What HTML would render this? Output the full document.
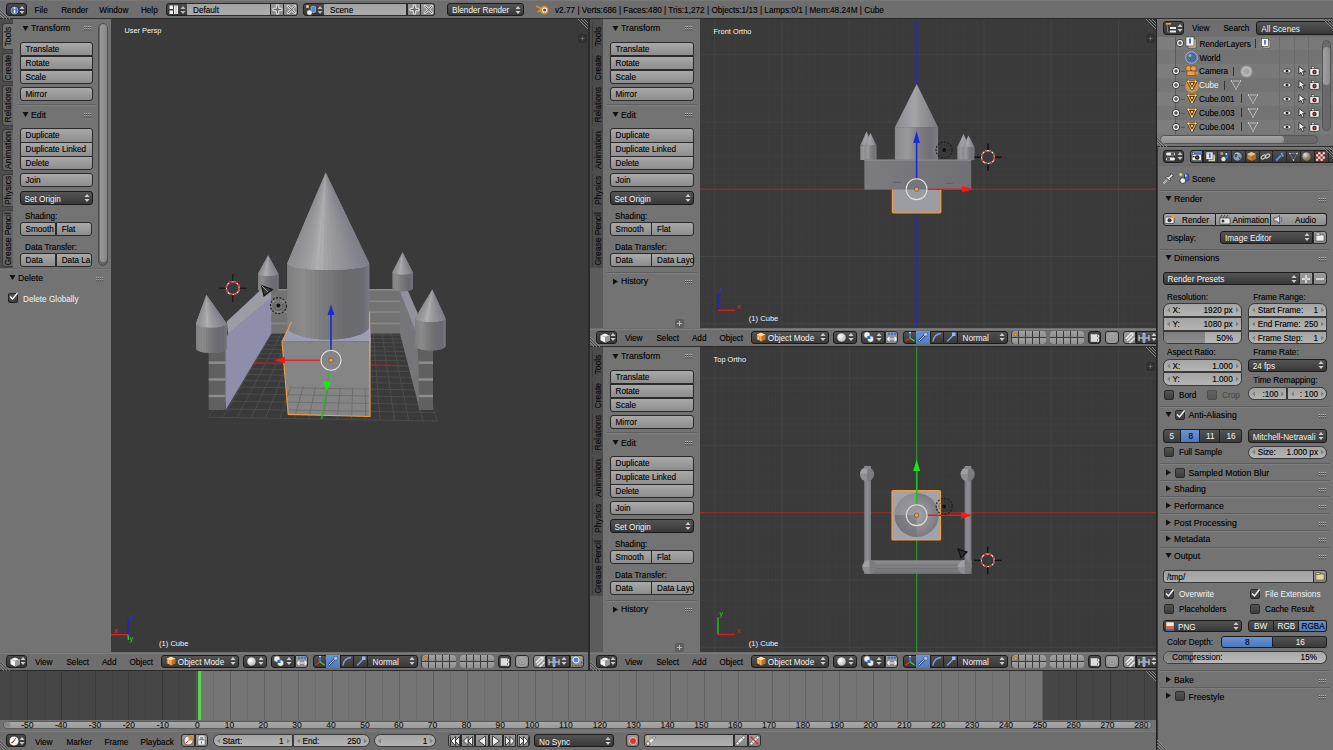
<!DOCTYPE html><html><head><meta charset="utf-8"><style>
*{margin:0;padding:0;box-sizing:border-box}
html,body{width:1333px;height:750px;overflow:hidden;background:#727272;font-family:"Liberation Sans", sans-serif;}
div,span,svg{position:absolute}
.t{white-space:nowrap;line-height:1;-webkit-text-stroke-width:0.12px;}
</style></head><body>
<div style="left:0px;top:0px;width:1333px;height:18px;background:#6e6e6e;"></div>
<div style="left:0px;top:0px;width:1333px;height:1px;background:#777777;"></div>
<div style="left:0px;top:18px;width:1333px;height:1px;background:#2a2a2a;"></div>
<div style="left:0px;top:19px;width:111px;height:633px;background:#737373;"></div>
<div style="left:0px;top:19px;width:13px;height:249px;background:#4c4c4c;"></div>
<div style="left:111px;top:19px;width:477px;height:633px;background:#3a3a3a;"></div>
<div style="left:588px;top:19px;width:2px;height:652px;background:#2b2b2b;"></div>
<div style="left:590px;top:19px;width:110px;height:309px;background:#737373;"></div>
<div style="left:590px;top:19px;width:13px;height:309px;background:#5c5c5c;"></div>
<div style="left:590px;top:19px;width:13px;height:249px;background:#4c4c4c;"></div>
<div style="left:590px;top:347px;width:110px;height:305px;background:#737373;"></div>
<div style="left:590px;top:347px;width:13px;height:305px;background:#5c5c5c;"></div>
<div style="left:590px;top:347px;width:13px;height:249px;background:#4c4c4c;"></div>
<div style="left:700px;top:19px;width:456px;height:309px;background:#3a3a3a;"></div>
<div style="left:700px;top:347px;width:456px;height:305px;background:#3a3a3a;"></div>
<div style="left:0px;top:652px;width:588px;height:18px;background:#6e6e6e;"></div>
<div style="left:0px;top:653px;width:588px;height:1px;background:#7e7e7e;"></div>
<div style="left:0px;top:670px;width:588px;height:1px;background:#2a2a2a;"></div>
<div style="left:590px;top:328px;width:566px;height:18px;background:#6e6e6e;"></div>
<div style="left:590px;top:329px;width:566px;height:1px;background:#7e7e7e;"></div>
<div style="left:590px;top:346px;width:566px;height:1px;background:#2a2a2a;"></div>
<div style="left:590px;top:652px;width:566px;height:18px;background:#6e6e6e;"></div>
<div style="left:590px;top:653px;width:566px;height:1px;background:#7e7e7e;"></div>
<div style="left:590px;top:670px;width:566px;height:1px;background:#2a2a2a;"></div>
<div style="left:0px;top:671px;width:1156px;height:60px;background:#727272;"></div>
<div style="left:0px;top:731px;width:1156px;height:19px;background:#6e6e6e;border-top:1px solid #7a7a7a;"></div>
<div style="left:1156px;top:19px;width:1px;height:731px;background:#202020;"></div>
<div style="left:1157px;top:19px;width:176px;height:127px;background:#747474;"></div>
<div style="left:1157px;top:146px;width:176px;height:1px;background:#2a2a2a;"></div>
<div style="left:1157px;top:147px;width:176px;height:603px;background:#737373;"></div>
<div style="left:6px;top:3px;width:21px;height:13px;background:linear-gradient(#4a4a4a,#363636);border:1px solid #1e1e1e;border-radius:3px 3px 3px 3px;"></div>
<svg style="left:9px;top:4.5px" width="11" height="11"><circle cx="5.5" cy="5.5" r="4.3" fill="#4a6ab8" stroke="#1a2440" stroke-width="0.7"/><circle cx="5.5" cy="5.5" r="3.4" fill="none" stroke="#b8c8f0" stroke-width="0.6"/><rect x="4.8" y="4.6" width="1.5" height="3.6" fill="#fff"/><circle cx="5.55" cy="3.2" r="0.85" fill="#fff"/></svg>
<svg style="left:19px;top:4.5px" width="6" height="10"><path d="M0.5 4 L3 1 L5.5 4 Z M0.5 6 L3 9 L5.5 6 Z" fill="#c8c8c8"/></svg>
<span class="t" style="left:34.5px;top:6.99px;font-size:8.2px;color:#000;">File</span>
<span class="t" style="left:61.2px;top:6.99px;font-size:8.2px;color:#000;">Render</span>
<span class="t" style="left:99.2px;top:6.99px;font-size:8.2px;color:#000;">Window</span>
<span class="t" style="left:140.9px;top:6.99px;font-size:8.2px;color:#000;">Help</span>
<div style="left:166px;top:3px;width:22px;height:13px;background:linear-gradient(#4a4a4a,#363636);border:1px solid #1e1e1e;border-radius:3px 0 0 3px;"></div>
<svg style="left:169px;top:5px" width="10" height="10"><rect x="0.5" y="0.5" width="3.5" height="3.5" fill="#eee"/><rect x="0.5" y="5.5" width="3.5" height="3.5" fill="#eee"/><rect x="5" y="0.5" width="4" height="8.5" fill="#eee"/><line x1="7" y1="0.5" x2="7" y2="9" stroke="#888" stroke-width="0.6"/></svg>
<svg style="left:180px;top:4.5px" width="6" height="10"><path d="M0.5 4 L3 1 L5.5 4 Z M0.5 6 L3 9 L5.5 6 Z" fill="#bbb"/></svg>
<div style="left:187px;top:3px;width:84px;height:13px;background:linear-gradient(#a2a2a2,#adadad);border:1px solid #2a2a2a;border-left:none;"></div>
<span class="t" style="left:193px;top:6.99px;font-size:8.2px;color:#000;">Default</span>
<div style="left:270px;top:3px;width:14px;height:13px;background:linear-gradient(#979797,#868686);border:1px solid #2a2a2a;"></div>
<svg style="left:271.5px;top:4px" width="11" height="11"><path d="M4.3 1 H6.7 V4.3 H10 V6.7 H6.7 V10 H4.3 V6.7 H1 V4.3 H4.3 Z" fill="#6a6a6a" stroke="#f4f4f4" stroke-width="0.9"/></svg>
<div style="left:284px;top:3px;width:14px;height:13px;background:linear-gradient(#979797,#868686);border:1px solid #2a2a2a;border-left:none;border-radius:0 3px 3px 0;"></div>
<svg style="left:285.5px;top:4px" width="11" height="11"><path d="M2.2 1 L5.5 4.3 L8.8 1 L10 2.2 L6.7 5.5 L10 8.8 L8.8 10 L5.5 6.7 L2.2 10 L1 8.8 L4.3 5.5 L1 2.2 Z" fill="#6a6a6a" stroke="#f4f4f4" stroke-width="0.9"/></svg>
<div style="left:303px;top:3px;width:22px;height:13px;background:linear-gradient(#4a4a4a,#363636);border:1px solid #1e1e1e;border-radius:3px 0 0 3px;"></div>
<svg style="left:305px;top:4px" width="12" height="12"><circle cx="2.5" cy="2.5" r="1.5" fill="#d8e070"/><rect x="6" y="2.5" width="4.5" height="6" rx="1" fill="#4a8ad8" stroke="#ddd" stroke-width="0.5"/><circle cx="4.5" cy="8.5" r="2.6" fill="#f0f0f0" stroke="#444" stroke-width="0.4"/></svg>
<svg style="left:317px;top:4.5px" width="6" height="10"><path d="M0.5 4 L3 1 L5.5 4 Z M0.5 6 L3 9 L5.5 6 Z" fill="#bbb"/></svg>
<div style="left:324px;top:3px;width:83px;height:13px;background:linear-gradient(#a2a2a2,#adadad);border:1px solid #2a2a2a;border-left:none;"></div>
<span class="t" style="left:330px;top:6.99px;font-size:8.2px;color:#000;">Scene</span>
<div style="left:407px;top:3px;width:14px;height:13px;background:linear-gradient(#979797,#868686);border:1px solid #2a2a2a;"></div>
<svg style="left:408.5px;top:4px" width="11" height="11"><path d="M4.3 1 H6.7 V4.3 H10 V6.7 H6.7 V10 H4.3 V6.7 H1 V4.3 H4.3 Z" fill="#6a6a6a" stroke="#f4f4f4" stroke-width="0.9"/></svg>
<div style="left:421px;top:3px;width:14px;height:13px;background:linear-gradient(#979797,#868686);border:1px solid #2a2a2a;border-left:none;border-radius:0 3px 3px 0;"></div>
<svg style="left:422.5px;top:4px" width="11" height="11"><path d="M2.2 1 L5.5 4.3 L8.8 1 L10 2.2 L6.7 5.5 L10 8.8 L8.8 10 L5.5 6.7 L2.2 10 L1 8.8 L4.3 5.5 L1 2.2 Z" fill="#6a6a6a" stroke="#f4f4f4" stroke-width="0.9"/></svg>
<div style="left:447px;top:3px;width:77px;height:13px;background:linear-gradient(#545454,#383838);border:1px solid #1a1a1a;border-radius:3px 3px 3px 3px;"></div>
<span class="t" style="left:452px;top:7.39px;font-size:8.2px;color:#fff;-webkit-text-stroke-width:0;color:#f4f4f4;">Blender Render</span>
<svg style="left:515px;top:4.5px" width="6" height="10"><path d="M0.5 4 L3 1 L5.5 4 Z M0.5 6 L3 9 L5.5 6 Z" fill="#cfcfcf"/></svg>
<svg style="left:536px;top:3px" width="14" height="13"><path d="M1 3.5 L6 6 M2.5 8.5 L6.5 6.2" stroke="#f08a1c" stroke-width="1.8" stroke-linecap="round"/><circle cx="8.3" cy="7" r="4.2" fill="#f08a1c"/><circle cx="8.5" cy="7" r="2.6" fill="#fff"/><circle cx="8.6" cy="7" r="1.5" fill="#2850a0"/></svg>
<span class="t" style="left:555px;top:6.99px;font-size:8.2px;color:#000;letter-spacing:0.02px">v2.77 | Verts:686 | Faces:480 | Tris:1,272 | Objects:1/13 | Lamps:0/1 | Mem:48.24M | Cube</span>
<div style="left:0px;top:19px;width:13px;height:249px;background:#4c4c4c;"></div>
<div style="left:1.5px;top:23px;width:11.5px;height:26.5px;background:#737373;border:1px solid #3c3c3c;border-right:none;border-radius:3px 0 0 3px;"></div>
<span class="t" style="left:2px;top:23px;width:12px;height:26.5px;font-size:8.5px;color:#0a0a0a;writing-mode:vertical-rl;transform:rotate(180deg);text-align:center;line-height:12.5px;">Tools</span>
<div style="left:1.5px;top:52.5px;width:11.5px;height:29.5px;background:#646464;border:1px solid #3c3c3c;border-right:none;border-radius:3px 0 0 3px;"></div>
<span class="t" style="left:2px;top:52.5px;width:12px;height:29.5px;font-size:8.5px;color:#0a0a0a;writing-mode:vertical-rl;transform:rotate(180deg);text-align:center;line-height:12.5px;">Create</span>
<div style="left:1.5px;top:85px;width:11.5px;height:40.5px;background:#646464;border:1px solid #3c3c3c;border-right:none;border-radius:3px 0 0 3px;"></div>
<span class="t" style="left:2px;top:85px;width:12px;height:40.5px;font-size:8.5px;color:#0a0a0a;writing-mode:vertical-rl;transform:rotate(180deg);text-align:center;line-height:12.5px;">Relations</span>
<div style="left:1.5px;top:128.5px;width:11.5px;height:42.0px;background:#646464;border:1px solid #3c3c3c;border-right:none;border-radius:3px 0 0 3px;"></div>
<span class="t" style="left:2px;top:128.5px;width:12px;height:42.0px;font-size:8.5px;color:#0a0a0a;writing-mode:vertical-rl;transform:rotate(180deg);text-align:center;line-height:12.5px;">Animation</span>
<div style="left:1.5px;top:173.5px;width:11.5px;height:33.0px;background:#646464;border:1px solid #3c3c3c;border-right:none;border-radius:3px 0 0 3px;"></div>
<span class="t" style="left:2px;top:173.5px;width:12px;height:33.0px;font-size:8.5px;color:#0a0a0a;writing-mode:vertical-rl;transform:rotate(180deg);text-align:center;line-height:12.5px;">Physics</span>
<div style="left:1.5px;top:209.5px;width:11.5px;height:57.5px;background:#646464;border:1px solid #3c3c3c;border-right:none;border-radius:3px 0 0 3px;"></div>
<span class="t" style="left:2px;top:209.5px;width:12px;height:57.5px;font-size:8.5px;color:#0a0a0a;writing-mode:vertical-rl;transform:rotate(180deg);text-align:center;line-height:12.5px;">Grease Pencil</span>
<svg style="left:22px;top:24.5px" width="7" height="7"><path d="M0.5 1 L6.5 1 L3.5 6 Z" fill="#111"/></svg>
<span class="t" style="left:31px;top:24.12px;font-size:8.7px;color:#000;">Transform</span>
<svg style="left:83px;top:25px" width="10" height="6"><rect x="1.00" y="2.00" width="1.1" height="1.1" fill="#404040"/><rect x="1.00" y="4.15" width="1.1" height="1.1" fill="#404040"/><rect x="3.05" y="2.00" width="1.1" height="1.1" fill="#404040"/><rect x="3.05" y="4.15" width="1.1" height="1.1" fill="#404040"/><rect x="5.10" y="2.00" width="1.1" height="1.1" fill="#404040"/><rect x="5.10" y="4.15" width="1.1" height="1.1" fill="#404040"/><rect x="7.15" y="2.00" width="1.1" height="1.1" fill="#404040"/><rect x="7.15" y="4.15" width="1.1" height="1.1" fill="#404040"/><rect x="1.00" y="1.00" width="1.1" height="1" fill="#b8b8b8"/><rect x="1.00" y="3.15" width="1.1" height="1" fill="#b8b8b8"/><rect x="3.05" y="1.00" width="1.1" height="1" fill="#b8b8b8"/><rect x="3.05" y="3.15" width="1.1" height="1" fill="#b8b8b8"/><rect x="5.10" y="1.00" width="1.1" height="1" fill="#b8b8b8"/><rect x="5.10" y="3.15" width="1.1" height="1" fill="#b8b8b8"/><rect x="7.15" y="1.00" width="1.1" height="1" fill="#b8b8b8"/><rect x="7.15" y="3.15" width="1.1" height="1" fill="#b8b8b8"/></svg>
<div style="left:19.5px;top:41.5px;width:73.0px;height:14.5px;background:linear-gradient(#a9a9a9,#8d8d8d);border:1px solid #2a2a2a;border-radius:3px 3px 0 0;"></div>
<span class="t" style="left:25.5px;top:45.94px;font-size:8.2px;color:#000;">Translate</span>
<div style="left:19.5px;top:55.5px;width:73.0px;height:14.5px;background:linear-gradient(#a9a9a9,#8d8d8d);border:1px solid #2a2a2a;border-radius:0 0 0 0;"></div>
<span class="t" style="left:25.5px;top:59.94px;font-size:8.2px;color:#000;">Rotate</span>
<div style="left:19.5px;top:69.5px;width:73.0px;height:14px;background:linear-gradient(#a9a9a9,#8d8d8d);border:1px solid #2a2a2a;border-radius:0 0 3px 3px;"></div>
<span class="t" style="left:25.5px;top:73.69px;font-size:8.2px;color:#000;">Scale</span>
<div style="left:19.5px;top:86.5px;width:73.0px;height:14px;background:linear-gradient(#a9a9a9,#8d8d8d);border:1px solid #2a2a2a;border-radius:3px 3px 3px 3px;"></div>
<span class="t" style="left:25.5px;top:90.69px;font-size:8.2px;color:#000;">Mirror</span>
<div style="left:17px;top:104px;width:78.5px;height:1px;background:#5e5e5e;"></div>
<div style="left:17px;top:105px;width:78.5px;height:1px;background:#7e7e7e;"></div>
<svg style="left:22px;top:111px" width="7" height="7"><path d="M0.5 1 L6.5 1 L3.5 6 Z" fill="#111"/></svg>
<span class="t" style="left:31px;top:110.61px;font-size:8.7px;color:#000;">Edit</span>
<svg style="left:83px;top:112px" width="10" height="6"><rect x="1.00" y="2.00" width="1.1" height="1.1" fill="#404040"/><rect x="1.00" y="4.15" width="1.1" height="1.1" fill="#404040"/><rect x="3.05" y="2.00" width="1.1" height="1.1" fill="#404040"/><rect x="3.05" y="4.15" width="1.1" height="1.1" fill="#404040"/><rect x="5.10" y="2.00" width="1.1" height="1.1" fill="#404040"/><rect x="5.10" y="4.15" width="1.1" height="1.1" fill="#404040"/><rect x="7.15" y="2.00" width="1.1" height="1.1" fill="#404040"/><rect x="7.15" y="4.15" width="1.1" height="1.1" fill="#404040"/><rect x="1.00" y="1.00" width="1.1" height="1" fill="#b8b8b8"/><rect x="1.00" y="3.15" width="1.1" height="1" fill="#b8b8b8"/><rect x="3.05" y="1.00" width="1.1" height="1" fill="#b8b8b8"/><rect x="3.05" y="3.15" width="1.1" height="1" fill="#b8b8b8"/><rect x="5.10" y="1.00" width="1.1" height="1" fill="#b8b8b8"/><rect x="5.10" y="3.15" width="1.1" height="1" fill="#b8b8b8"/><rect x="7.15" y="1.00" width="1.1" height="1" fill="#b8b8b8"/><rect x="7.15" y="3.15" width="1.1" height="1" fill="#b8b8b8"/></svg>
<div style="left:19.5px;top:128px;width:73.0px;height:14.5px;background:linear-gradient(#a9a9a9,#8d8d8d);border:1px solid #2a2a2a;border-radius:3px 3px 0 0;"></div>
<span class="t" style="left:25.5px;top:132.44px;font-size:8.2px;color:#000;">Duplicate</span>
<div style="left:19.5px;top:142px;width:73.0px;height:14.5px;background:linear-gradient(#a9a9a9,#8d8d8d);border:1px solid #2a2a2a;border-radius:0 0 0 0;"></div>
<span class="t" style="left:25.5px;top:146.44px;font-size:8.2px;color:#000;">Duplicate Linked</span>
<div style="left:19.5px;top:156px;width:73.0px;height:14px;background:linear-gradient(#a9a9a9,#8d8d8d);border:1px solid #2a2a2a;border-radius:0 0 3px 3px;"></div>
<span class="t" style="left:25.5px;top:160.19px;font-size:8.2px;color:#000;">Delete</span>
<div style="left:19.5px;top:173px;width:73.0px;height:14px;background:linear-gradient(#a9a9a9,#8d8d8d);border:1px solid #2a2a2a;border-radius:3px 3px 3px 3px;"></div>
<span class="t" style="left:25.5px;top:177.19px;font-size:8.2px;color:#000;">Join</span>
<div style="left:19.5px;top:191px;width:73.0px;height:14px;background:linear-gradient(#545454,#383838);border:1px solid #1a1a1a;border-radius:3px 3px 3px 3px;"></div>
<span class="t" style="left:24.5px;top:195.89px;font-size:8.2px;color:#fff;-webkit-text-stroke-width:0;color:#f4f4f4;">Set Origin</span>
<svg style="left:83.5px;top:193.0px" width="6" height="10"><path d="M0.5 4 L3 1 L5.5 4 Z M0.5 6 L3 9 L5.5 6 Z" fill="#cfcfcf"/></svg>
<span class="t" style="left:25px;top:212.69px;font-size:8.2px;color:#000;">Shading:</span>
<div style="left:19.5px;top:222px;width:36.7px;height:14px;background:linear-gradient(#a9a9a9,#8d8d8d);border:1px solid #2a2a2a;border-radius:3px 0 0 3px;"></div>
<span class="t" style="left:25.5px;top:226.19px;font-size:8.2px;color:#000;">Smooth</span>
<div style="left:55.7px;top:222px;width:36.8px;height:14px;background:linear-gradient(#a9a9a9,#8d8d8d);border:1px solid #2a2a2a;border-radius:0 3px 3px 0;"></div>
<span class="t" style="left:61.7px;top:226.19px;font-size:8.2px;color:#000;">Flat</span>
<span class="t" style="left:25px;top:243.69px;font-size:8.2px;color:#000;">Data Transfer:</span>
<div style="left:19.5px;top:253px;width:36.7px;height:14px;background:linear-gradient(#a9a9a9,#8d8d8d);border:1px solid #2a2a2a;border-radius:3px 0 0 3px;"></div>
<span class="t" style="left:25.5px;top:257.19px;font-size:8.2px;color:#000;">Data</span>
<div style="left:55.7px;top:253px;width:36.8px;height:14px;background:linear-gradient(#a9a9a9,#8d8d8d);border:1px solid #2a2a2a;border-radius:0 3px 3px 0;"></div>
<span class="t" style="left:61.7px;top:257.19px;font-size:8.2px;color:#000;">Data La</span>
<div style="left:98px;top:22.5px;width:10px;height:243px;background:linear-gradient(90deg,#6a6a6a,#5c5c5c);border:1px solid #4c4c4c;border-radius:5px;"></div>
<div style="left:99.5px;top:24px;width:7px;height:238px;background:linear-gradient(90deg,#9a9a9a,#858585);border-radius:4px;"></div>
<div style="left:590px;top:19px;width:13px;height:305px;background:#5c5c5c;"></div>
<div style="left:590px;top:19px;width:13px;height:249px;background:#4c4c4c;"></div>
<div style="left:591.5px;top:23px;width:-578.5px;height:26.5px;background:#737373;border:1px solid #3c3c3c;border-right:none;border-radius:3px 0 0 3px;"></div>
<span class="t" style="left:592px;top:23px;width:12px;height:26.5px;font-size:8.5px;color:#0a0a0a;writing-mode:vertical-rl;transform:rotate(180deg);text-align:center;line-height:12.5px;">Tools</span>
<div style="left:591.5px;top:52.5px;width:-578.5px;height:29.5px;background:#646464;border:1px solid #3c3c3c;border-right:none;border-radius:3px 0 0 3px;"></div>
<span class="t" style="left:592px;top:52.5px;width:12px;height:29.5px;font-size:8.5px;color:#0a0a0a;writing-mode:vertical-rl;transform:rotate(180deg);text-align:center;line-height:12.5px;">Create</span>
<div style="left:591.5px;top:85px;width:-578.5px;height:40.5px;background:#646464;border:1px solid #3c3c3c;border-right:none;border-radius:3px 0 0 3px;"></div>
<span class="t" style="left:592px;top:85px;width:12px;height:40.5px;font-size:8.5px;color:#0a0a0a;writing-mode:vertical-rl;transform:rotate(180deg);text-align:center;line-height:12.5px;">Relations</span>
<div style="left:591.5px;top:128.5px;width:-578.5px;height:42.0px;background:#646464;border:1px solid #3c3c3c;border-right:none;border-radius:3px 0 0 3px;"></div>
<span class="t" style="left:592px;top:128.5px;width:12px;height:42.0px;font-size:8.5px;color:#0a0a0a;writing-mode:vertical-rl;transform:rotate(180deg);text-align:center;line-height:12.5px;">Animation</span>
<div style="left:591.5px;top:173.5px;width:-578.5px;height:33.0px;background:#646464;border:1px solid #3c3c3c;border-right:none;border-radius:3px 0 0 3px;"></div>
<span class="t" style="left:592px;top:173.5px;width:12px;height:33.0px;font-size:8.5px;color:#0a0a0a;writing-mode:vertical-rl;transform:rotate(180deg);text-align:center;line-height:12.5px;">Physics</span>
<div style="left:591.5px;top:209.5px;width:-578.5px;height:57.5px;background:#646464;border:1px solid #3c3c3c;border-right:none;border-radius:3px 0 0 3px;"></div>
<span class="t" style="left:592px;top:209.5px;width:12px;height:57.5px;font-size:8.5px;color:#0a0a0a;writing-mode:vertical-rl;transform:rotate(180deg);text-align:center;line-height:12.5px;">Grease Pencil</span>
<svg style="left:612px;top:24.5px" width="7" height="7"><path d="M0.5 1 L6.5 1 L3.5 6 Z" fill="#111"/></svg>
<span class="t" style="left:621px;top:24.12px;font-size:8.7px;color:#000;">Transform</span>
<svg style="left:684px;top:25px" width="10" height="6"><rect x="1.00" y="2.00" width="1.1" height="1.1" fill="#404040"/><rect x="1.00" y="4.15" width="1.1" height="1.1" fill="#404040"/><rect x="3.05" y="2.00" width="1.1" height="1.1" fill="#404040"/><rect x="3.05" y="4.15" width="1.1" height="1.1" fill="#404040"/><rect x="5.10" y="2.00" width="1.1" height="1.1" fill="#404040"/><rect x="5.10" y="4.15" width="1.1" height="1.1" fill="#404040"/><rect x="7.15" y="2.00" width="1.1" height="1.1" fill="#404040"/><rect x="7.15" y="4.15" width="1.1" height="1.1" fill="#404040"/><rect x="1.00" y="1.00" width="1.1" height="1" fill="#b8b8b8"/><rect x="1.00" y="3.15" width="1.1" height="1" fill="#b8b8b8"/><rect x="3.05" y="1.00" width="1.1" height="1" fill="#b8b8b8"/><rect x="3.05" y="3.15" width="1.1" height="1" fill="#b8b8b8"/><rect x="5.10" y="1.00" width="1.1" height="1" fill="#b8b8b8"/><rect x="5.10" y="3.15" width="1.1" height="1" fill="#b8b8b8"/><rect x="7.15" y="1.00" width="1.1" height="1" fill="#b8b8b8"/><rect x="7.15" y="3.15" width="1.1" height="1" fill="#b8b8b8"/></svg>
<div style="left:609.5px;top:41.5px;width:84.5px;height:14.5px;background:linear-gradient(#a9a9a9,#8d8d8d);border:1px solid #2a2a2a;border-radius:3px 3px 0 0;"></div>
<span class="t" style="left:615.5px;top:45.94px;font-size:8.2px;color:#000;">Translate</span>
<div style="left:609.5px;top:55.5px;width:84.5px;height:14.5px;background:linear-gradient(#a9a9a9,#8d8d8d);border:1px solid #2a2a2a;border-radius:0 0 0 0;"></div>
<span class="t" style="left:615.5px;top:59.94px;font-size:8.2px;color:#000;">Rotate</span>
<div style="left:609.5px;top:69.5px;width:84.5px;height:14px;background:linear-gradient(#a9a9a9,#8d8d8d);border:1px solid #2a2a2a;border-radius:0 0 3px 3px;"></div>
<span class="t" style="left:615.5px;top:73.69px;font-size:8.2px;color:#000;">Scale</span>
<div style="left:609.5px;top:86.5px;width:84.5px;height:14px;background:linear-gradient(#a9a9a9,#8d8d8d);border:1px solid #2a2a2a;border-radius:3px 3px 3px 3px;"></div>
<span class="t" style="left:615.5px;top:90.69px;font-size:8.2px;color:#000;">Mirror</span>
<div style="left:607px;top:104px;width:90px;height:1px;background:#5e5e5e;"></div>
<div style="left:607px;top:105px;width:90px;height:1px;background:#7e7e7e;"></div>
<svg style="left:612px;top:111px" width="7" height="7"><path d="M0.5 1 L6.5 1 L3.5 6 Z" fill="#111"/></svg>
<span class="t" style="left:621px;top:110.61px;font-size:8.7px;color:#000;">Edit</span>
<svg style="left:684px;top:112px" width="10" height="6"><rect x="1.00" y="2.00" width="1.1" height="1.1" fill="#404040"/><rect x="1.00" y="4.15" width="1.1" height="1.1" fill="#404040"/><rect x="3.05" y="2.00" width="1.1" height="1.1" fill="#404040"/><rect x="3.05" y="4.15" width="1.1" height="1.1" fill="#404040"/><rect x="5.10" y="2.00" width="1.1" height="1.1" fill="#404040"/><rect x="5.10" y="4.15" width="1.1" height="1.1" fill="#404040"/><rect x="7.15" y="2.00" width="1.1" height="1.1" fill="#404040"/><rect x="7.15" y="4.15" width="1.1" height="1.1" fill="#404040"/><rect x="1.00" y="1.00" width="1.1" height="1" fill="#b8b8b8"/><rect x="1.00" y="3.15" width="1.1" height="1" fill="#b8b8b8"/><rect x="3.05" y="1.00" width="1.1" height="1" fill="#b8b8b8"/><rect x="3.05" y="3.15" width="1.1" height="1" fill="#b8b8b8"/><rect x="5.10" y="1.00" width="1.1" height="1" fill="#b8b8b8"/><rect x="5.10" y="3.15" width="1.1" height="1" fill="#b8b8b8"/><rect x="7.15" y="1.00" width="1.1" height="1" fill="#b8b8b8"/><rect x="7.15" y="3.15" width="1.1" height="1" fill="#b8b8b8"/></svg>
<div style="left:609.5px;top:128px;width:84.5px;height:14.5px;background:linear-gradient(#a9a9a9,#8d8d8d);border:1px solid #2a2a2a;border-radius:3px 3px 0 0;"></div>
<span class="t" style="left:615.5px;top:132.44px;font-size:8.2px;color:#000;">Duplicate</span>
<div style="left:609.5px;top:142px;width:84.5px;height:14.5px;background:linear-gradient(#a9a9a9,#8d8d8d);border:1px solid #2a2a2a;border-radius:0 0 0 0;"></div>
<span class="t" style="left:615.5px;top:146.44px;font-size:8.2px;color:#000;">Duplicate Linked</span>
<div style="left:609.5px;top:156px;width:84.5px;height:14px;background:linear-gradient(#a9a9a9,#8d8d8d);border:1px solid #2a2a2a;border-radius:0 0 3px 3px;"></div>
<span class="t" style="left:615.5px;top:160.19px;font-size:8.2px;color:#000;">Delete</span>
<div style="left:609.5px;top:173px;width:84.5px;height:14px;background:linear-gradient(#a9a9a9,#8d8d8d);border:1px solid #2a2a2a;border-radius:3px 3px 3px 3px;"></div>
<span class="t" style="left:615.5px;top:177.19px;font-size:8.2px;color:#000;">Join</span>
<div style="left:609.5px;top:191px;width:84.5px;height:14px;background:linear-gradient(#545454,#383838);border:1px solid #1a1a1a;border-radius:3px 3px 3px 3px;"></div>
<span class="t" style="left:614.5px;top:195.89px;font-size:8.2px;color:#fff;-webkit-text-stroke-width:0;color:#f4f4f4;">Set Origin</span>
<svg style="left:685.0px;top:193.0px" width="6" height="10"><path d="M0.5 4 L3 1 L5.5 4 Z M0.5 6 L3 9 L5.5 6 Z" fill="#cfcfcf"/></svg>
<span class="t" style="left:615px;top:212.69px;font-size:8.2px;color:#000;">Shading:</span>
<div style="left:609.5px;top:222px;width:42.0px;height:14px;background:linear-gradient(#a9a9a9,#8d8d8d);border:1px solid #2a2a2a;border-radius:3px 0 0 3px;"></div>
<span class="t" style="left:615.5px;top:226.19px;font-size:8.2px;color:#000;">Smooth</span>
<div style="left:651px;top:222px;width:43px;height:14px;background:linear-gradient(#a9a9a9,#8d8d8d);border:1px solid #2a2a2a;border-radius:0 3px 3px 0;"></div>
<span class="t" style="left:657px;top:226.19px;font-size:8.2px;color:#000;">Flat</span>
<span class="t" style="left:615px;top:243.69px;font-size:8.2px;color:#000;">Data Transfer:</span>
<div style="left:609.5px;top:253px;width:42.0px;height:14px;background:linear-gradient(#a9a9a9,#8d8d8d);border:1px solid #2a2a2a;border-radius:3px 0 0 3px;"></div>
<span class="t" style="left:615.5px;top:257.19px;font-size:8.2px;color:#000;">Data</span>
<div style="left:651px;top:253px;width:43px;height:14px;background:linear-gradient(#a9a9a9,#8d8d8d);border:1px solid #2a2a2a;border-radius:0 3px 3px 0;"></div>
<span class="t" style="left:657px;top:257.19px;font-size:8.2px;color:#000;">Data Layo</span>
<div style="left:607px;top:271.5px;width:90px;height:1px;background:#5e5e5e;"></div>
<div style="left:607px;top:272.5px;width:90px;height:1px;background:#7e7e7e;"></div>
<svg style="left:612px;top:277.5px" width="7" height="7"><path d="M1 0.5 L6 3.5 L1 6.5 Z" fill="#111"/></svg>
<span class="t" style="left:621px;top:277.11px;font-size:8.7px;color:#000;">History</span>
<svg style="left:684px;top:279px" width="10" height="6"><rect x="1.00" y="2.00" width="1.1" height="1.1" fill="#404040"/><rect x="1.00" y="4.15" width="1.1" height="1.1" fill="#404040"/><rect x="3.05" y="2.00" width="1.1" height="1.1" fill="#404040"/><rect x="3.05" y="4.15" width="1.1" height="1.1" fill="#404040"/><rect x="5.10" y="2.00" width="1.1" height="1.1" fill="#404040"/><rect x="5.10" y="4.15" width="1.1" height="1.1" fill="#404040"/><rect x="7.15" y="2.00" width="1.1" height="1.1" fill="#404040"/><rect x="7.15" y="4.15" width="1.1" height="1.1" fill="#404040"/><rect x="1.00" y="1.00" width="1.1" height="1" fill="#b8b8b8"/><rect x="1.00" y="3.15" width="1.1" height="1" fill="#b8b8b8"/><rect x="3.05" y="1.00" width="1.1" height="1" fill="#b8b8b8"/><rect x="3.05" y="3.15" width="1.1" height="1" fill="#b8b8b8"/><rect x="5.10" y="1.00" width="1.1" height="1" fill="#b8b8b8"/><rect x="5.10" y="3.15" width="1.1" height="1" fill="#b8b8b8"/><rect x="7.15" y="1.00" width="1.1" height="1" fill="#b8b8b8"/><rect x="7.15" y="3.15" width="1.1" height="1" fill="#b8b8b8"/></svg>
<div style="left:590px;top:347px;width:13px;height:305px;background:#5c5c5c;"></div>
<div style="left:590px;top:347px;width:13px;height:249px;background:#4c4c4c;"></div>
<div style="left:591.5px;top:351px;width:-578.5px;height:26.5px;background:#737373;border:1px solid #3c3c3c;border-right:none;border-radius:3px 0 0 3px;"></div>
<span class="t" style="left:592px;top:351px;width:12px;height:26.5px;font-size:8.5px;color:#0a0a0a;writing-mode:vertical-rl;transform:rotate(180deg);text-align:center;line-height:12.5px;">Tools</span>
<div style="left:591.5px;top:380.5px;width:-578.5px;height:29.5px;background:#646464;border:1px solid #3c3c3c;border-right:none;border-radius:3px 0 0 3px;"></div>
<span class="t" style="left:592px;top:380.5px;width:12px;height:29.5px;font-size:8.5px;color:#0a0a0a;writing-mode:vertical-rl;transform:rotate(180deg);text-align:center;line-height:12.5px;">Create</span>
<div style="left:591.5px;top:413px;width:-578.5px;height:40.5px;background:#646464;border:1px solid #3c3c3c;border-right:none;border-radius:3px 0 0 3px;"></div>
<span class="t" style="left:592px;top:413px;width:12px;height:40.5px;font-size:8.5px;color:#0a0a0a;writing-mode:vertical-rl;transform:rotate(180deg);text-align:center;line-height:12.5px;">Relations</span>
<div style="left:591.5px;top:456.5px;width:-578.5px;height:42.0px;background:#646464;border:1px solid #3c3c3c;border-right:none;border-radius:3px 0 0 3px;"></div>
<span class="t" style="left:592px;top:456.5px;width:12px;height:42.0px;font-size:8.5px;color:#0a0a0a;writing-mode:vertical-rl;transform:rotate(180deg);text-align:center;line-height:12.5px;">Animation</span>
<div style="left:591.5px;top:501.5px;width:-578.5px;height:33.0px;background:#646464;border:1px solid #3c3c3c;border-right:none;border-radius:3px 0 0 3px;"></div>
<span class="t" style="left:592px;top:501.5px;width:12px;height:33.0px;font-size:8.5px;color:#0a0a0a;writing-mode:vertical-rl;transform:rotate(180deg);text-align:center;line-height:12.5px;">Physics</span>
<div style="left:591.5px;top:537.5px;width:-578.5px;height:57.5px;background:#646464;border:1px solid #3c3c3c;border-right:none;border-radius:3px 0 0 3px;"></div>
<span class="t" style="left:592px;top:537.5px;width:12px;height:57.5px;font-size:8.5px;color:#0a0a0a;writing-mode:vertical-rl;transform:rotate(180deg);text-align:center;line-height:12.5px;">Grease Pencil</span>
<svg style="left:612px;top:352.5px" width="7" height="7"><path d="M0.5 1 L6.5 1 L3.5 6 Z" fill="#111"/></svg>
<span class="t" style="left:621px;top:352.11px;font-size:8.7px;color:#000;">Transform</span>
<svg style="left:684px;top:353px" width="10" height="6"><rect x="1.00" y="2.00" width="1.1" height="1.1" fill="#404040"/><rect x="1.00" y="4.15" width="1.1" height="1.1" fill="#404040"/><rect x="3.05" y="2.00" width="1.1" height="1.1" fill="#404040"/><rect x="3.05" y="4.15" width="1.1" height="1.1" fill="#404040"/><rect x="5.10" y="2.00" width="1.1" height="1.1" fill="#404040"/><rect x="5.10" y="4.15" width="1.1" height="1.1" fill="#404040"/><rect x="7.15" y="2.00" width="1.1" height="1.1" fill="#404040"/><rect x="7.15" y="4.15" width="1.1" height="1.1" fill="#404040"/><rect x="1.00" y="1.00" width="1.1" height="1" fill="#b8b8b8"/><rect x="1.00" y="3.15" width="1.1" height="1" fill="#b8b8b8"/><rect x="3.05" y="1.00" width="1.1" height="1" fill="#b8b8b8"/><rect x="3.05" y="3.15" width="1.1" height="1" fill="#b8b8b8"/><rect x="5.10" y="1.00" width="1.1" height="1" fill="#b8b8b8"/><rect x="5.10" y="3.15" width="1.1" height="1" fill="#b8b8b8"/><rect x="7.15" y="1.00" width="1.1" height="1" fill="#b8b8b8"/><rect x="7.15" y="3.15" width="1.1" height="1" fill="#b8b8b8"/></svg>
<div style="left:609.5px;top:369.5px;width:84.5px;height:14.5px;background:linear-gradient(#a9a9a9,#8d8d8d);border:1px solid #2a2a2a;border-radius:3px 3px 0 0;"></div>
<span class="t" style="left:615.5px;top:373.94px;font-size:8.2px;color:#000;">Translate</span>
<div style="left:609.5px;top:383.5px;width:84.5px;height:14.5px;background:linear-gradient(#a9a9a9,#8d8d8d);border:1px solid #2a2a2a;border-radius:0 0 0 0;"></div>
<span class="t" style="left:615.5px;top:387.94px;font-size:8.2px;color:#000;">Rotate</span>
<div style="left:609.5px;top:397.5px;width:84.5px;height:14px;background:linear-gradient(#a9a9a9,#8d8d8d);border:1px solid #2a2a2a;border-radius:0 0 3px 3px;"></div>
<span class="t" style="left:615.5px;top:401.69px;font-size:8.2px;color:#000;">Scale</span>
<div style="left:609.5px;top:414.5px;width:84.5px;height:14px;background:linear-gradient(#a9a9a9,#8d8d8d);border:1px solid #2a2a2a;border-radius:3px 3px 3px 3px;"></div>
<span class="t" style="left:615.5px;top:418.69px;font-size:8.2px;color:#000;">Mirror</span>
<div style="left:607px;top:432px;width:90px;height:1px;background:#5e5e5e;"></div>
<div style="left:607px;top:433px;width:90px;height:1px;background:#7e7e7e;"></div>
<svg style="left:612px;top:439px" width="7" height="7"><path d="M0.5 1 L6.5 1 L3.5 6 Z" fill="#111"/></svg>
<span class="t" style="left:621px;top:438.61px;font-size:8.7px;color:#000;">Edit</span>
<svg style="left:684px;top:440px" width="10" height="6"><rect x="1.00" y="2.00" width="1.1" height="1.1" fill="#404040"/><rect x="1.00" y="4.15" width="1.1" height="1.1" fill="#404040"/><rect x="3.05" y="2.00" width="1.1" height="1.1" fill="#404040"/><rect x="3.05" y="4.15" width="1.1" height="1.1" fill="#404040"/><rect x="5.10" y="2.00" width="1.1" height="1.1" fill="#404040"/><rect x="5.10" y="4.15" width="1.1" height="1.1" fill="#404040"/><rect x="7.15" y="2.00" width="1.1" height="1.1" fill="#404040"/><rect x="7.15" y="4.15" width="1.1" height="1.1" fill="#404040"/><rect x="1.00" y="1.00" width="1.1" height="1" fill="#b8b8b8"/><rect x="1.00" y="3.15" width="1.1" height="1" fill="#b8b8b8"/><rect x="3.05" y="1.00" width="1.1" height="1" fill="#b8b8b8"/><rect x="3.05" y="3.15" width="1.1" height="1" fill="#b8b8b8"/><rect x="5.10" y="1.00" width="1.1" height="1" fill="#b8b8b8"/><rect x="5.10" y="3.15" width="1.1" height="1" fill="#b8b8b8"/><rect x="7.15" y="1.00" width="1.1" height="1" fill="#b8b8b8"/><rect x="7.15" y="3.15" width="1.1" height="1" fill="#b8b8b8"/></svg>
<div style="left:609.5px;top:456px;width:84.5px;height:14.5px;background:linear-gradient(#a9a9a9,#8d8d8d);border:1px solid #2a2a2a;border-radius:3px 3px 0 0;"></div>
<span class="t" style="left:615.5px;top:460.44px;font-size:8.2px;color:#000;">Duplicate</span>
<div style="left:609.5px;top:470px;width:84.5px;height:14.5px;background:linear-gradient(#a9a9a9,#8d8d8d);border:1px solid #2a2a2a;border-radius:0 0 0 0;"></div>
<span class="t" style="left:615.5px;top:474.44px;font-size:8.2px;color:#000;">Duplicate Linked</span>
<div style="left:609.5px;top:484px;width:84.5px;height:14px;background:linear-gradient(#a9a9a9,#8d8d8d);border:1px solid #2a2a2a;border-radius:0 0 3px 3px;"></div>
<span class="t" style="left:615.5px;top:488.19px;font-size:8.2px;color:#000;">Delete</span>
<div style="left:609.5px;top:501px;width:84.5px;height:14px;background:linear-gradient(#a9a9a9,#8d8d8d);border:1px solid #2a2a2a;border-radius:3px 3px 3px 3px;"></div>
<span class="t" style="left:615.5px;top:505.19px;font-size:8.2px;color:#000;">Join</span>
<div style="left:609.5px;top:519px;width:84.5px;height:14px;background:linear-gradient(#545454,#383838);border:1px solid #1a1a1a;border-radius:3px 3px 3px 3px;"></div>
<span class="t" style="left:614.5px;top:523.89px;font-size:8.2px;color:#fff;-webkit-text-stroke-width:0;color:#f4f4f4;">Set Origin</span>
<svg style="left:685.0px;top:521.0px" width="6" height="10"><path d="M0.5 4 L3 1 L5.5 4 Z M0.5 6 L3 9 L5.5 6 Z" fill="#cfcfcf"/></svg>
<span class="t" style="left:615px;top:540.69px;font-size:8.2px;color:#000;">Shading:</span>
<div style="left:609.5px;top:550px;width:42.0px;height:14px;background:linear-gradient(#a9a9a9,#8d8d8d);border:1px solid #2a2a2a;border-radius:3px 0 0 3px;"></div>
<span class="t" style="left:615.5px;top:554.19px;font-size:8.2px;color:#000;">Smooth</span>
<div style="left:651px;top:550px;width:43px;height:14px;background:linear-gradient(#a9a9a9,#8d8d8d);border:1px solid #2a2a2a;border-radius:0 3px 3px 0;"></div>
<span class="t" style="left:657px;top:554.19px;font-size:8.2px;color:#000;">Flat</span>
<span class="t" style="left:615px;top:571.69px;font-size:8.2px;color:#000;">Data Transfer:</span>
<div style="left:609.5px;top:581px;width:42.0px;height:14px;background:linear-gradient(#a9a9a9,#8d8d8d);border:1px solid #2a2a2a;border-radius:3px 0 0 3px;"></div>
<span class="t" style="left:615.5px;top:585.19px;font-size:8.2px;color:#000;">Data</span>
<div style="left:651px;top:581px;width:43px;height:14px;background:linear-gradient(#a9a9a9,#8d8d8d);border:1px solid #2a2a2a;border-radius:0 3px 3px 0;"></div>
<span class="t" style="left:657px;top:585.19px;font-size:8.2px;color:#000;">Data Layo</span>
<div style="left:607px;top:599.5px;width:90px;height:1px;background:#5e5e5e;"></div>
<div style="left:607px;top:600.5px;width:90px;height:1px;background:#7e7e7e;"></div>
<svg style="left:612px;top:605.5px" width="7" height="7"><path d="M1 0.5 L6 3.5 L1 6.5 Z" fill="#111"/></svg>
<span class="t" style="left:621px;top:605.12px;font-size:8.7px;color:#000;">History</span>
<svg style="left:684px;top:607px" width="10" height="6"><rect x="1.00" y="2.00" width="1.1" height="1.1" fill="#404040"/><rect x="1.00" y="4.15" width="1.1" height="1.1" fill="#404040"/><rect x="3.05" y="2.00" width="1.1" height="1.1" fill="#404040"/><rect x="3.05" y="4.15" width="1.1" height="1.1" fill="#404040"/><rect x="5.10" y="2.00" width="1.1" height="1.1" fill="#404040"/><rect x="5.10" y="4.15" width="1.1" height="1.1" fill="#404040"/><rect x="7.15" y="2.00" width="1.1" height="1.1" fill="#404040"/><rect x="7.15" y="4.15" width="1.1" height="1.1" fill="#404040"/><rect x="1.00" y="1.00" width="1.1" height="1" fill="#b8b8b8"/><rect x="1.00" y="3.15" width="1.1" height="1" fill="#b8b8b8"/><rect x="3.05" y="1.00" width="1.1" height="1" fill="#b8b8b8"/><rect x="3.05" y="3.15" width="1.1" height="1" fill="#b8b8b8"/><rect x="5.10" y="1.00" width="1.1" height="1" fill="#b8b8b8"/><rect x="5.10" y="3.15" width="1.1" height="1" fill="#b8b8b8"/><rect x="7.15" y="1.00" width="1.1" height="1" fill="#b8b8b8"/><rect x="7.15" y="3.15" width="1.1" height="1" fill="#b8b8b8"/></svg>
<div style="left:675.2px;top:318.8px;width:9px;height:9px;background:#5e5e5e;border-radius:2px;"></div>
<svg style="left:675.2px;top:318.8px" width="9" height="9"><path d="M4.5 2 V7 M2 4.5 H7" stroke="#bdbdbd" stroke-width="1.1"/></svg>
<div style="left:675.2px;top:643px;width:9px;height:9px;background:#5e5e5e;border-radius:2px;"></div>
<svg style="left:675.2px;top:643px" width="9" height="9"><path d="M4.5 2 V7 M2 4.5 H7" stroke="#bdbdbd" stroke-width="1.1"/></svg>
<div style="left:0px;top:268px;width:111px;height:384px;background:#737373;border-top:1px solid #6a6a6a;"></div>
<div style="left:0px;top:269px;width:111px;height:1px;background:#7c7c7c;"></div>
<svg style="left:9px;top:274px" width="7" height="7"><path d="M0.5 1 L6.5 1 L3.5 6 Z" fill="#111"/></svg>
<span class="t" style="left:18px;top:273.71px;font-size:8.7px;color:#000;">Delete</span>
<svg style="left:95px;top:276px" width="10" height="6"><rect x="1.00" y="2.00" width="1.1" height="1.1" fill="#404040"/><rect x="1.00" y="4.15" width="1.1" height="1.1" fill="#404040"/><rect x="3.05" y="2.00" width="1.1" height="1.1" fill="#404040"/><rect x="3.05" y="4.15" width="1.1" height="1.1" fill="#404040"/><rect x="5.10" y="2.00" width="1.1" height="1.1" fill="#404040"/><rect x="5.10" y="4.15" width="1.1" height="1.1" fill="#404040"/><rect x="7.15" y="2.00" width="1.1" height="1.1" fill="#404040"/><rect x="7.15" y="4.15" width="1.1" height="1.1" fill="#404040"/><rect x="1.00" y="1.00" width="1.1" height="1" fill="#b8b8b8"/><rect x="1.00" y="3.15" width="1.1" height="1" fill="#b8b8b8"/><rect x="3.05" y="1.00" width="1.1" height="1" fill="#b8b8b8"/><rect x="3.05" y="3.15" width="1.1" height="1" fill="#b8b8b8"/><rect x="5.10" y="1.00" width="1.1" height="1" fill="#b8b8b8"/><rect x="5.10" y="3.15" width="1.1" height="1" fill="#b8b8b8"/><rect x="7.15" y="1.00" width="1.1" height="1" fill="#b8b8b8"/><rect x="7.15" y="3.15" width="1.1" height="1" fill="#b8b8b8"/></svg>
<div style="left:8px;top:293px;width:10px;height:10px;background:linear-gradient(#555,#3e3e3e);border:1px solid #222;border-radius:2px;"></div>
<svg style="left:8px;top:291px" width="11" height="11"><path d="M2 5.5 L4.5 8 L9.5 2" stroke="#fff" stroke-width="1.3" fill="none"/></svg>
<span class="t" style="left:23px;top:295.69px;font-size:8.2px;color:#fff;-webkit-text-stroke-width:0;color:#f4f4f4;">Delete Globally</span>
<div style="left:0;top:0;width:1333px;height:750px;clip-path:inset(652px 745px 79px 0px);">
<div style="left:6.3px;top:654.5px;width:20.7px;height:13.5px;background:linear-gradient(#4a4a4a,#363636);border:1px solid #1e1e1e;border-radius:3px 3px 3px 3px;"></div>
<svg style="left:8.5px;top:655.5px" width="12" height="12"><path d="M6 1 L11 3 L11 8.5 L6 11 L1 8.5 L1 3 Z" fill="#f4f4f4" stroke="#222" stroke-width="0.8"/><path d="M6 5 L11 3 L11 8.5 L6 11 Z" fill="#9a9a9a"/><path d="M1 3 L6 5 L11 3" stroke="#888" stroke-width="0.5" fill="none"/></svg>
<svg style="left:19.5px;top:656.3px" width="6" height="10"><path d="M0.5 4 L3 1 L5.5 4 Z M0.5 6 L3 9 L5.5 6 Z" fill="#c8c8c8"/></svg>
<span class="t" style="left:34.9px;top:658.99px;font-size:8.2px;color:#000;">View</span>
<span class="t" style="left:66.4px;top:658.99px;font-size:8.2px;color:#000;">Select</span>
<span class="t" style="left:101.9px;top:658.99px;font-size:8.2px;color:#000;">Add</span>
<span class="t" style="left:129.4px;top:658.99px;font-size:8.2px;color:#000;">Object</span>
<div style="left:161px;top:654.5px;width:78px;height:13.5px;background:linear-gradient(#545454,#383838);border:1px solid #1a1a1a;border-radius:3px 3px 3px 3px;"></div>
<span class="t" style="left:177.8px;top:659.14px;font-size:8.2px;color:#fff;-webkit-text-stroke-width:0;color:#f4f4f4;">Object Mode</span>
<svg style="left:230px;top:656.25px" width="6" height="10"><path d="M0.5 4 L3 1 L5.5 4 Z M0.5 6 L3 9 L5.5 6 Z" fill="#cfcfcf"/></svg>
<svg style="left:166.0px;top:656.3px" width="11" height="11"><path d="M5 0.6 L9.6 2.5 L9.6 7.6 L5 9.6 L0.4 7.6 L0.4 2.5 Z" fill="#e89838" stroke="#5a2a08" stroke-width="0.7"/><path d="M0.6 2.6 L5 4.4 L9.4 2.6 L5 0.8 Z" fill="#ffe0a8"/><path d="M5 4.4 L9.4 2.6 L9.4 7.5 L5 9.4 Z" fill="#c87020"/><path d="M2.5 4.5 V7.5 M5 4.4 V9.4" stroke="#fff0d0" stroke-width="0.6"/></svg>
<div style="left:243.2px;top:654.5px;width:23.5px;height:13.5px;background:linear-gradient(#545454,#383838);border:1px solid #1a1a1a;border-radius:3px 3px 3px 3px;"></div>
<svg style="left:257.7px;top:656.25px" width="6" height="10"><path d="M0.5 4 L3 1 L5.5 4 Z M0.5 6 L3 9 L5.5 6 Z" fill="#cfcfcf"/></svg>
<svg style="left:246px;top:655.5px" width="11" height="11"><defs><radialGradient id="sph0652" cx="0.35" cy="0.35" r="0.7"><stop offset="0" stop-color="#fff"/><stop offset="1" stop-color="#b8b8b8"/></radialGradient></defs><circle cx="5.5" cy="5.5" r="4.6" fill="url(#sph0652)" stroke="#222" stroke-width="0.5"/></svg>
<div style="left:271.2px;top:654.5px;width:23.7px;height:13.5px;background:linear-gradient(#545454,#383838);border:1px solid #1a1a1a;border-radius:3px 0 0 3px;"></div>
<svg style="left:285.9px;top:656.25px" width="6" height="10"><path d="M0.5 4 L3 1 L5.5 4 Z M0.5 6 L3 9 L5.5 6 Z" fill="#cfcfcf"/></svg>
<svg style="left:273px;top:655px" width="12" height="12"><circle cx="4" cy="4" r="3.2" fill="#eee" stroke="#333" stroke-width="0.5"/><circle cx="7.5" cy="8" r="3.2" fill="#eee" stroke="#333" stroke-width="0.5"/><rect x="4.5" y="5" width="3" height="3" fill="#3a6ad0"/></svg>
<div style="left:294.9px;top:654.5px;width:13.5px;height:13.5px;background:linear-gradient(#9c9c9c,#868686);border:1px solid #2c2c2c;border-radius:0 3px 3px 0;"></div>
<svg style="left:295.5px;top:655.5px" width="12" height="12"><g fill="#3a70d8"><circle cx="3" cy="1.8" r="1.2"/><circle cx="6" cy="1.8" r="1.2"/><circle cx="9" cy="1.8" r="1.2"/></g><path d="M1.5 7 H10.5 M1.5 7 L3.5 5 M1.5 7 L3.5 9 M10.5 7 L8.5 5 M10.5 7 L8.5 9" stroke="#f4f4f4" stroke-width="1.2" fill="none"/></svg>
<div style="left:312.8px;top:654.5px;width:105px;height:13.5px;background:linear-gradient(#505050,#383838);border:1px solid #1a1a1a;border-radius:3px;"></div>
<div style="left:326px;top:655px;width:13.6px;height:12.5px;background:linear-gradient(#6a94d8,#4f79bd);"></div>
<div style="left:339.6px;top:655px;width:1px;height:12.5px;background:#1e1e1e;"></div>
<div style="left:353.4px;top:655px;width:1px;height:12.5px;background:#1e1e1e;"></div>
<div style="left:367px;top:655px;width:1px;height:12.5px;background:#1e1e1e;"></div>
<svg style="left:313.5px;top:655px" width="12" height="12"><path d="M6 7 V1.5" stroke="#5080ff" stroke-width="1.3"/><path d="M6 7 L1.5 10" stroke="#e03030" stroke-width="1.3"/><path d="M6 7 L10.5 10" stroke="#40d040" stroke-width="1.3"/><circle cx="6" cy="1.5" r="0.8" fill="#fff"/></svg>
<svg style="left:327px;top:655px" width="12" height="12"><path d="M2 10 L9 3" stroke="#1e3c78" stroke-width="2.2"/><path d="M2 10 L9 3" stroke="#cfe0ff" stroke-width="1"/><path d="M10.5 1.5 L6 2.5 L9.5 6 Z" fill="#cfe0ff" stroke="#1e3c78" stroke-width="0.5"/></svg>
<svg style="left:340.5px;top:655px" width="12" height="12"><path d="M2 10.5 Q3 3 10 2.5" stroke="#7aa0e0" stroke-width="1.5" fill="none"/></svg>
<svg style="left:354.5px;top:655px" width="12" height="12"><path d="M2 10.5 L7.5 5" stroke="#7aa0e0" stroke-width="1.4"/><rect x="7" y="1.5" width="3.5" height="3.5" fill="#9ab8f0"/></svg>
<span class="t" style="left:372.5px;top:658.99px;font-size:8.2px;color:#fff;-webkit-text-stroke-width:0;color:#f4f4f4;">Normal</span>
<svg style="left:409px;top:656.3px" width="6" height="10"><path d="M0.5 4 L3 1 L5.5 4 Z M0.5 6 L3 9 L5.5 6 Z" fill="#cfcfcf"/></svg>
<div style="left:421.4px;top:654.5px;width:34.5px;height:13.5px;background:#3a3a3a;border-radius:3px;"></div>
<div style="left:422.09999999999997px;top:655.2px;width:5.9px;height:5.9px;background:linear-gradient(#a2a2a2,#8e8e8e);border-top-left-radius:3px;"></div>
<div style="left:422.09999999999997px;top:661.95px;width:5.9px;height:5.9px;background:linear-gradient(#a2a2a2,#8e8e8e);border-bottom-left-radius:3px;"></div>
<div style="left:428.99999999999994px;top:655.2px;width:5.9px;height:5.9px;background:linear-gradient(#a2a2a2,#8e8e8e);"></div>
<div style="left:428.99999999999994px;top:661.95px;width:5.9px;height:5.9px;background:linear-gradient(#a2a2a2,#8e8e8e);"></div>
<div style="left:435.9px;top:655.2px;width:5.9px;height:5.9px;background:linear-gradient(#a2a2a2,#8e8e8e);"></div>
<div style="left:435.9px;top:661.95px;width:5.9px;height:5.9px;background:linear-gradient(#a2a2a2,#8e8e8e);"></div>
<div style="left:442.79999999999995px;top:655.2px;width:5.9px;height:5.9px;background:linear-gradient(#a2a2a2,#8e8e8e);"></div>
<div style="left:442.79999999999995px;top:661.95px;width:5.9px;height:5.9px;background:linear-gradient(#a2a2a2,#8e8e8e);"></div>
<div style="left:449.7px;top:655.2px;width:5.9px;height:5.9px;background:linear-gradient(#a2a2a2,#8e8e8e);border-top-right-radius:3px;"></div>
<div style="left:449.7px;top:661.95px;width:5.9px;height:5.9px;background:linear-gradient(#a2a2a2,#8e8e8e);border-bottom-right-radius:3px;"></div>
<div style="left:459.5px;top:654.5px;width:34.5px;height:13.5px;background:#3a3a3a;border-radius:3px;"></div>
<div style="left:460.2px;top:655.2px;width:5.9px;height:5.9px;background:linear-gradient(#a2a2a2,#8e8e8e);border-top-left-radius:3px;"></div>
<div style="left:460.2px;top:661.95px;width:5.9px;height:5.9px;background:linear-gradient(#a2a2a2,#8e8e8e);border-bottom-left-radius:3px;"></div>
<div style="left:467.09999999999997px;top:655.2px;width:5.9px;height:5.9px;background:linear-gradient(#a2a2a2,#8e8e8e);"></div>
<div style="left:467.09999999999997px;top:661.95px;width:5.9px;height:5.9px;background:linear-gradient(#a2a2a2,#8e8e8e);"></div>
<div style="left:474.0px;top:655.2px;width:5.9px;height:5.9px;background:linear-gradient(#a2a2a2,#8e8e8e);"></div>
<div style="left:474.0px;top:661.95px;width:5.9px;height:5.9px;background:linear-gradient(#a2a2a2,#8e8e8e);"></div>
<div style="left:480.9px;top:655.2px;width:5.9px;height:5.9px;background:linear-gradient(#a2a2a2,#8e8e8e);"></div>
<div style="left:480.9px;top:661.95px;width:5.9px;height:5.9px;background:linear-gradient(#a2a2a2,#8e8e8e);"></div>
<div style="left:487.8px;top:655.2px;width:5.9px;height:5.9px;background:linear-gradient(#a2a2a2,#8e8e8e);border-top-right-radius:3px;"></div>
<div style="left:487.8px;top:661.95px;width:5.9px;height:5.9px;background:linear-gradient(#a2a2a2,#8e8e8e);border-bottom-right-radius:3px;"></div>
<svg style="left:422.5px;top:655.5px" width="5" height="5"><circle cx="2.5" cy="2.5" r="1.7" fill="#f0a030" stroke="#7a3a10" stroke-width="0.5"/></svg>
<div style="left:497.6px;top:654.5px;width:13.5px;height:13.5px;background:linear-gradient(#4a4a4a,#363636);border:1px solid #1e1e1e;border-radius:3px 3px 3px 3px;"></div>
<svg style="left:498.5px;top:655.5px" width="12" height="12"><rect x="1.5" y="2" width="7" height="8" fill="#ddd" stroke="#555" stroke-width="0.5"/><path d="M8.5 3 Q11 4 8.5 6 Q11 8 8.5 10" stroke="#eee" stroke-width="1.2" fill="none"/></svg>
<div style="left:515px;top:654.5px;width:13.5px;height:13.5px;background:linear-gradient(#9c9c9c,#868686);border:1px solid #2c2c2c;border-radius:3px 3px 3px 3px;"></div>
<svg style="left:516px;top:655.5px" width="12" height="12"><circle cx="6" cy="6" r="4.3" stroke="#b4b4b4" stroke-width="1" fill="none"/><circle cx="6" cy="6" r="2" stroke="#b4b4b4" stroke-width="0.8" fill="none"/></svg>
<div style="left:532.6px;top:654.5px;width:13.5px;height:13.5px;background:linear-gradient(#9c9c9c,#868686);border:1px solid #2c2c2c;border-radius:3px 0 0 3px;"></div>
<svg style="left:533.5px;top:655.5px" width="12" height="12"><path d="M3 9 L8 4 Q10 2 8.5 1.5 Q7.5 1 6 2.5 L1.8 6.8" stroke="#e8e8e8" stroke-width="1.6" fill="none"/><path d="M5.5 11 L10.5 6" stroke="#e8e8e8" stroke-width="1.6"/></svg>
<div style="left:545.9px;top:654.5px;width:24.5px;height:13.5px;background:linear-gradient(#545454,#383838);border:1px solid #1a1a1a;border-radius:0 0 0 0;"></div>
<svg style="left:561.4px;top:656.25px" width="6" height="10"><path d="M0.5 4 L3 1 L5.5 4 Z M0.5 6 L3 9 L5.5 6 Z" fill="#cfcfcf"/></svg>
<svg style="left:547.5px;top:655.5px" width="12" height="12"><path d="M1 6 H11 M1 3 V9 M11 3 V9" stroke="#ddd" stroke-width="1"/><rect x="5" y="1.5" width="2" height="9" fill="#5a8ae8" stroke="#fff" stroke-width="0.5"/></svg>
<div style="left:570.2px;top:654.5px;width:13.5px;height:13.5px;background:linear-gradient(#9c9c9c,#868686);border:1px solid #2c2c2c;border-radius:0 3px 3px 0;"></div>
<svg style="left:571px;top:655.5px" width="12" height="12"><g fill="#555"><rect x="1" y="9" width="1.5" height="1.5"/><rect x="4" y="9" width="1.5" height="1.5"/><rect x="7" y="9" width="1.5" height="1.5"/><rect x="10" y="9" width="1.5" height="1.5"/><rect x="1" y="6" width="1.5" height="1.5"/><rect x="10" y="6" width="1.5" height="1.5"/></g><circle cx="5" cy="4" r="3" fill="#4a80e0" stroke="#fff" stroke-width="1"/></svg>
</div>
<div style="left:0;top:0;width:1333px;height:750px;clip-path:inset(328px 177px 403px 590px);">
<div style="left:596.3px;top:330.5px;width:20.7px;height:13.5px;background:linear-gradient(#4a4a4a,#363636);border:1px solid #1e1e1e;border-radius:3px 3px 3px 3px;"></div>
<svg style="left:598.5px;top:331.5px" width="12" height="12"><path d="M6 1 L11 3 L11 8.5 L6 11 L1 8.5 L1 3 Z" fill="#f4f4f4" stroke="#222" stroke-width="0.8"/><path d="M6 5 L11 3 L11 8.5 L6 11 Z" fill="#9a9a9a"/><path d="M1 3 L6 5 L11 3" stroke="#888" stroke-width="0.5" fill="none"/></svg>
<svg style="left:609.5px;top:332.3px" width="6" height="10"><path d="M0.5 4 L3 1 L5.5 4 Z M0.5 6 L3 9 L5.5 6 Z" fill="#c8c8c8"/></svg>
<span class="t" style="left:624.9px;top:334.99px;font-size:8.2px;color:#000;">View</span>
<span class="t" style="left:656.4px;top:334.99px;font-size:8.2px;color:#000;">Select</span>
<span class="t" style="left:691.9px;top:334.99px;font-size:8.2px;color:#000;">Add</span>
<span class="t" style="left:719.4px;top:334.99px;font-size:8.2px;color:#000;">Object</span>
<div style="left:751px;top:330.5px;width:78px;height:13.5px;background:linear-gradient(#545454,#383838);border:1px solid #1a1a1a;border-radius:3px 3px 3px 3px;"></div>
<span class="t" style="left:767.8px;top:335.14px;font-size:8.2px;color:#fff;-webkit-text-stroke-width:0;color:#f4f4f4;">Object Mode</span>
<svg style="left:820px;top:332.25px" width="6" height="10"><path d="M0.5 4 L3 1 L5.5 4 Z M0.5 6 L3 9 L5.5 6 Z" fill="#cfcfcf"/></svg>
<svg style="left:756.0px;top:332.3px" width="11" height="11"><path d="M5 0.6 L9.6 2.5 L9.6 7.6 L5 9.6 L0.4 7.6 L0.4 2.5 Z" fill="#e89838" stroke="#5a2a08" stroke-width="0.7"/><path d="M0.6 2.6 L5 4.4 L9.4 2.6 L5 0.8 Z" fill="#ffe0a8"/><path d="M5 4.4 L9.4 2.6 L9.4 7.5 L5 9.4 Z" fill="#c87020"/><path d="M2.5 4.5 V7.5 M5 4.4 V9.4" stroke="#fff0d0" stroke-width="0.6"/></svg>
<div style="left:833.2px;top:330.5px;width:23.5px;height:13.5px;background:linear-gradient(#545454,#383838);border:1px solid #1a1a1a;border-radius:3px 3px 3px 3px;"></div>
<svg style="left:847.7px;top:332.25px" width="6" height="10"><path d="M0.5 4 L3 1 L5.5 4 Z M0.5 6 L3 9 L5.5 6 Z" fill="#cfcfcf"/></svg>
<svg style="left:836px;top:331.5px" width="11" height="11"><defs><radialGradient id="sph590328" cx="0.35" cy="0.35" r="0.7"><stop offset="0" stop-color="#fff"/><stop offset="1" stop-color="#b8b8b8"/></radialGradient></defs><circle cx="5.5" cy="5.5" r="4.6" fill="url(#sph590328)" stroke="#222" stroke-width="0.5"/></svg>
<div style="left:861.2px;top:330.5px;width:23.7px;height:13.5px;background:linear-gradient(#545454,#383838);border:1px solid #1a1a1a;border-radius:3px 0 0 3px;"></div>
<svg style="left:875.9000000000001px;top:332.25px" width="6" height="10"><path d="M0.5 4 L3 1 L5.5 4 Z M0.5 6 L3 9 L5.5 6 Z" fill="#cfcfcf"/></svg>
<svg style="left:863px;top:331px" width="12" height="12"><circle cx="4" cy="4" r="3.2" fill="#eee" stroke="#333" stroke-width="0.5"/><circle cx="7.5" cy="8" r="3.2" fill="#eee" stroke="#333" stroke-width="0.5"/><rect x="4.5" y="5" width="3" height="3" fill="#3a6ad0"/></svg>
<div style="left:884.9px;top:330.5px;width:13.5px;height:13.5px;background:linear-gradient(#9c9c9c,#868686);border:1px solid #2c2c2c;border-radius:0 3px 3px 0;"></div>
<svg style="left:885.5px;top:331.5px" width="12" height="12"><g fill="#3a70d8"><circle cx="3" cy="1.8" r="1.2"/><circle cx="6" cy="1.8" r="1.2"/><circle cx="9" cy="1.8" r="1.2"/></g><path d="M1.5 7 H10.5 M1.5 7 L3.5 5 M1.5 7 L3.5 9 M10.5 7 L8.5 5 M10.5 7 L8.5 9" stroke="#f4f4f4" stroke-width="1.2" fill="none"/></svg>
<div style="left:902.8px;top:330.5px;width:105px;height:13.5px;background:linear-gradient(#505050,#383838);border:1px solid #1a1a1a;border-radius:3px;"></div>
<div style="left:916px;top:331px;width:13.6px;height:12.5px;background:linear-gradient(#6a94d8,#4f79bd);"></div>
<div style="left:929.6px;top:331px;width:1px;height:12.5px;background:#1e1e1e;"></div>
<div style="left:943.4px;top:331px;width:1px;height:12.5px;background:#1e1e1e;"></div>
<div style="left:957px;top:331px;width:1px;height:12.5px;background:#1e1e1e;"></div>
<svg style="left:903.5px;top:331px" width="12" height="12"><path d="M6 7 V1.5" stroke="#5080ff" stroke-width="1.3"/><path d="M6 7 L1.5 10" stroke="#e03030" stroke-width="1.3"/><path d="M6 7 L10.5 10" stroke="#40d040" stroke-width="1.3"/><circle cx="6" cy="1.5" r="0.8" fill="#fff"/></svg>
<svg style="left:917px;top:331px" width="12" height="12"><path d="M2 10 L9 3" stroke="#1e3c78" stroke-width="2.2"/><path d="M2 10 L9 3" stroke="#cfe0ff" stroke-width="1"/><path d="M10.5 1.5 L6 2.5 L9.5 6 Z" fill="#cfe0ff" stroke="#1e3c78" stroke-width="0.5"/></svg>
<svg style="left:930.5px;top:331px" width="12" height="12"><path d="M2 10.5 Q3 3 10 2.5" stroke="#7aa0e0" stroke-width="1.5" fill="none"/></svg>
<svg style="left:944.5px;top:331px" width="12" height="12"><path d="M2 10.5 L7.5 5" stroke="#7aa0e0" stroke-width="1.4"/><rect x="7" y="1.5" width="3.5" height="3.5" fill="#9ab8f0"/></svg>
<span class="t" style="left:962.5px;top:334.99px;font-size:8.2px;color:#fff;-webkit-text-stroke-width:0;color:#f4f4f4;">Normal</span>
<svg style="left:999px;top:332.3px" width="6" height="10"><path d="M0.5 4 L3 1 L5.5 4 Z M0.5 6 L3 9 L5.5 6 Z" fill="#cfcfcf"/></svg>
<div style="left:1011.4px;top:330.5px;width:34.5px;height:13.5px;background:#3a3a3a;border-radius:3px;"></div>
<div style="left:1012.1px;top:331.2px;width:5.9px;height:5.9px;background:linear-gradient(#a2a2a2,#8e8e8e);border-top-left-radius:3px;"></div>
<div style="left:1012.1px;top:337.95px;width:5.9px;height:5.9px;background:linear-gradient(#a2a2a2,#8e8e8e);border-bottom-left-radius:3px;"></div>
<div style="left:1019.0px;top:331.2px;width:5.9px;height:5.9px;background:linear-gradient(#a2a2a2,#8e8e8e);"></div>
<div style="left:1019.0px;top:337.95px;width:5.9px;height:5.9px;background:linear-gradient(#a2a2a2,#8e8e8e);"></div>
<div style="left:1025.9px;top:331.2px;width:5.9px;height:5.9px;background:linear-gradient(#a2a2a2,#8e8e8e);"></div>
<div style="left:1025.9px;top:337.95px;width:5.9px;height:5.9px;background:linear-gradient(#a2a2a2,#8e8e8e);"></div>
<div style="left:1032.8px;top:331.2px;width:5.9px;height:5.9px;background:linear-gradient(#a2a2a2,#8e8e8e);"></div>
<div style="left:1032.8px;top:337.95px;width:5.9px;height:5.9px;background:linear-gradient(#a2a2a2,#8e8e8e);"></div>
<div style="left:1039.7px;top:331.2px;width:5.9px;height:5.9px;background:linear-gradient(#a2a2a2,#8e8e8e);border-top-right-radius:3px;"></div>
<div style="left:1039.7px;top:337.95px;width:5.9px;height:5.9px;background:linear-gradient(#a2a2a2,#8e8e8e);border-bottom-right-radius:3px;"></div>
<div style="left:1049.5px;top:330.5px;width:34.5px;height:13.5px;background:#3a3a3a;border-radius:3px;"></div>
<div style="left:1050.2px;top:331.2px;width:5.9px;height:5.9px;background:linear-gradient(#a2a2a2,#8e8e8e);border-top-left-radius:3px;"></div>
<div style="left:1050.2px;top:337.95px;width:5.9px;height:5.9px;background:linear-gradient(#a2a2a2,#8e8e8e);border-bottom-left-radius:3px;"></div>
<div style="left:1057.1000000000001px;top:331.2px;width:5.9px;height:5.9px;background:linear-gradient(#a2a2a2,#8e8e8e);"></div>
<div style="left:1057.1000000000001px;top:337.95px;width:5.9px;height:5.9px;background:linear-gradient(#a2a2a2,#8e8e8e);"></div>
<div style="left:1064.0px;top:331.2px;width:5.9px;height:5.9px;background:linear-gradient(#a2a2a2,#8e8e8e);"></div>
<div style="left:1064.0px;top:337.95px;width:5.9px;height:5.9px;background:linear-gradient(#a2a2a2,#8e8e8e);"></div>
<div style="left:1070.9px;top:331.2px;width:5.9px;height:5.9px;background:linear-gradient(#a2a2a2,#8e8e8e);"></div>
<div style="left:1070.9px;top:337.95px;width:5.9px;height:5.9px;background:linear-gradient(#a2a2a2,#8e8e8e);"></div>
<div style="left:1077.8px;top:331.2px;width:5.9px;height:5.9px;background:linear-gradient(#a2a2a2,#8e8e8e);border-top-right-radius:3px;"></div>
<div style="left:1077.8px;top:337.95px;width:5.9px;height:5.9px;background:linear-gradient(#a2a2a2,#8e8e8e);border-bottom-right-radius:3px;"></div>
<svg style="left:1012.5px;top:331.5px" width="5" height="5"><circle cx="2.5" cy="2.5" r="1.7" fill="#f0a030" stroke="#7a3a10" stroke-width="0.5"/></svg>
<div style="left:1087.6px;top:330.5px;width:13.5px;height:13.5px;background:linear-gradient(#4a4a4a,#363636);border:1px solid #1e1e1e;border-radius:3px 3px 3px 3px;"></div>
<svg style="left:1088.5px;top:331.5px" width="12" height="12"><rect x="1.5" y="2" width="7" height="8" fill="#ddd" stroke="#555" stroke-width="0.5"/><path d="M8.5 3 Q11 4 8.5 6 Q11 8 8.5 10" stroke="#eee" stroke-width="1.2" fill="none"/></svg>
<div style="left:1105px;top:330.5px;width:13.5px;height:13.5px;background:linear-gradient(#9c9c9c,#868686);border:1px solid #2c2c2c;border-radius:3px 3px 3px 3px;"></div>
<svg style="left:1106px;top:331.5px" width="12" height="12"><circle cx="6" cy="6" r="4.3" stroke="#b4b4b4" stroke-width="1" fill="none"/><circle cx="6" cy="6" r="2" stroke="#b4b4b4" stroke-width="0.8" fill="none"/></svg>
<div style="left:1122.6px;top:330.5px;width:13.5px;height:13.5px;background:linear-gradient(#9c9c9c,#868686);border:1px solid #2c2c2c;border-radius:3px 0 0 3px;"></div>
<svg style="left:1123.5px;top:331.5px" width="12" height="12"><path d="M3 9 L8 4 Q10 2 8.5 1.5 Q7.5 1 6 2.5 L1.8 6.8" stroke="#e8e8e8" stroke-width="1.6" fill="none"/><path d="M5.5 11 L10.5 6" stroke="#e8e8e8" stroke-width="1.6"/></svg>
<div style="left:1135.9px;top:330.5px;width:24.5px;height:13.5px;background:linear-gradient(#545454,#383838);border:1px solid #1a1a1a;border-radius:0 0 0 0;"></div>
<svg style="left:1151.4px;top:332.25px" width="6" height="10"><path d="M0.5 4 L3 1 L5.5 4 Z M0.5 6 L3 9 L5.5 6 Z" fill="#cfcfcf"/></svg>
<svg style="left:1137.5px;top:331.5px" width="12" height="12"><path d="M1 6 H11 M1 3 V9 M11 3 V9" stroke="#ddd" stroke-width="1"/><rect x="5" y="1.5" width="2" height="9" fill="#5a8ae8" stroke="#fff" stroke-width="0.5"/></svg>
<div style="left:1160.2px;top:330.5px;width:13.5px;height:13.5px;background:linear-gradient(#9c9c9c,#868686);border:1px solid #2c2c2c;border-radius:0 3px 3px 0;"></div>
<svg style="left:1161px;top:331.5px" width="12" height="12"><g fill="#555"><rect x="1" y="9" width="1.5" height="1.5"/><rect x="4" y="9" width="1.5" height="1.5"/><rect x="7" y="9" width="1.5" height="1.5"/><rect x="10" y="9" width="1.5" height="1.5"/><rect x="1" y="6" width="1.5" height="1.5"/><rect x="10" y="6" width="1.5" height="1.5"/></g><circle cx="5" cy="4" r="3" fill="#4a80e0" stroke="#fff" stroke-width="1"/></svg>
</div>
<div style="left:0;top:0;width:1333px;height:750px;clip-path:inset(652px 177px 79px 590px);">
<div style="left:596.3px;top:654.5px;width:20.7px;height:13.5px;background:linear-gradient(#4a4a4a,#363636);border:1px solid #1e1e1e;border-radius:3px 3px 3px 3px;"></div>
<svg style="left:598.5px;top:655.5px" width="12" height="12"><path d="M6 1 L11 3 L11 8.5 L6 11 L1 8.5 L1 3 Z" fill="#f4f4f4" stroke="#222" stroke-width="0.8"/><path d="M6 5 L11 3 L11 8.5 L6 11 Z" fill="#9a9a9a"/><path d="M1 3 L6 5 L11 3" stroke="#888" stroke-width="0.5" fill="none"/></svg>
<svg style="left:609.5px;top:656.3px" width="6" height="10"><path d="M0.5 4 L3 1 L5.5 4 Z M0.5 6 L3 9 L5.5 6 Z" fill="#c8c8c8"/></svg>
<span class="t" style="left:624.9px;top:658.99px;font-size:8.2px;color:#000;">View</span>
<span class="t" style="left:656.4px;top:658.99px;font-size:8.2px;color:#000;">Select</span>
<span class="t" style="left:691.9px;top:658.99px;font-size:8.2px;color:#000;">Add</span>
<span class="t" style="left:719.4px;top:658.99px;font-size:8.2px;color:#000;">Object</span>
<div style="left:751px;top:654.5px;width:78px;height:13.5px;background:linear-gradient(#545454,#383838);border:1px solid #1a1a1a;border-radius:3px 3px 3px 3px;"></div>
<span class="t" style="left:767.8px;top:659.14px;font-size:8.2px;color:#fff;-webkit-text-stroke-width:0;color:#f4f4f4;">Object Mode</span>
<svg style="left:820px;top:656.25px" width="6" height="10"><path d="M0.5 4 L3 1 L5.5 4 Z M0.5 6 L3 9 L5.5 6 Z" fill="#cfcfcf"/></svg>
<svg style="left:756.0px;top:656.3px" width="11" height="11"><path d="M5 0.6 L9.6 2.5 L9.6 7.6 L5 9.6 L0.4 7.6 L0.4 2.5 Z" fill="#e89838" stroke="#5a2a08" stroke-width="0.7"/><path d="M0.6 2.6 L5 4.4 L9.4 2.6 L5 0.8 Z" fill="#ffe0a8"/><path d="M5 4.4 L9.4 2.6 L9.4 7.5 L5 9.4 Z" fill="#c87020"/><path d="M2.5 4.5 V7.5 M5 4.4 V9.4" stroke="#fff0d0" stroke-width="0.6"/></svg>
<div style="left:833.2px;top:654.5px;width:23.5px;height:13.5px;background:linear-gradient(#545454,#383838);border:1px solid #1a1a1a;border-radius:3px 3px 3px 3px;"></div>
<svg style="left:847.7px;top:656.25px" width="6" height="10"><path d="M0.5 4 L3 1 L5.5 4 Z M0.5 6 L3 9 L5.5 6 Z" fill="#cfcfcf"/></svg>
<svg style="left:836px;top:655.5px" width="11" height="11"><defs><radialGradient id="sph590652" cx="0.35" cy="0.35" r="0.7"><stop offset="0" stop-color="#fff"/><stop offset="1" stop-color="#b8b8b8"/></radialGradient></defs><circle cx="5.5" cy="5.5" r="4.6" fill="url(#sph590652)" stroke="#222" stroke-width="0.5"/></svg>
<div style="left:861.2px;top:654.5px;width:23.7px;height:13.5px;background:linear-gradient(#545454,#383838);border:1px solid #1a1a1a;border-radius:3px 0 0 3px;"></div>
<svg style="left:875.9000000000001px;top:656.25px" width="6" height="10"><path d="M0.5 4 L3 1 L5.5 4 Z M0.5 6 L3 9 L5.5 6 Z" fill="#cfcfcf"/></svg>
<svg style="left:863px;top:655px" width="12" height="12"><circle cx="4" cy="4" r="3.2" fill="#eee" stroke="#333" stroke-width="0.5"/><circle cx="7.5" cy="8" r="3.2" fill="#eee" stroke="#333" stroke-width="0.5"/><rect x="4.5" y="5" width="3" height="3" fill="#3a6ad0"/></svg>
<div style="left:884.9px;top:654.5px;width:13.5px;height:13.5px;background:linear-gradient(#9c9c9c,#868686);border:1px solid #2c2c2c;border-radius:0 3px 3px 0;"></div>
<svg style="left:885.5px;top:655.5px" width="12" height="12"><g fill="#3a70d8"><circle cx="3" cy="1.8" r="1.2"/><circle cx="6" cy="1.8" r="1.2"/><circle cx="9" cy="1.8" r="1.2"/></g><path d="M1.5 7 H10.5 M1.5 7 L3.5 5 M1.5 7 L3.5 9 M10.5 7 L8.5 5 M10.5 7 L8.5 9" stroke="#f4f4f4" stroke-width="1.2" fill="none"/></svg>
<div style="left:902.8px;top:654.5px;width:105px;height:13.5px;background:linear-gradient(#505050,#383838);border:1px solid #1a1a1a;border-radius:3px;"></div>
<div style="left:916px;top:655px;width:13.6px;height:12.5px;background:linear-gradient(#6a94d8,#4f79bd);"></div>
<div style="left:929.6px;top:655px;width:1px;height:12.5px;background:#1e1e1e;"></div>
<div style="left:943.4px;top:655px;width:1px;height:12.5px;background:#1e1e1e;"></div>
<div style="left:957px;top:655px;width:1px;height:12.5px;background:#1e1e1e;"></div>
<svg style="left:903.5px;top:655px" width="12" height="12"><path d="M6 7 V1.5" stroke="#5080ff" stroke-width="1.3"/><path d="M6 7 L1.5 10" stroke="#e03030" stroke-width="1.3"/><path d="M6 7 L10.5 10" stroke="#40d040" stroke-width="1.3"/><circle cx="6" cy="1.5" r="0.8" fill="#fff"/></svg>
<svg style="left:917px;top:655px" width="12" height="12"><path d="M2 10 L9 3" stroke="#1e3c78" stroke-width="2.2"/><path d="M2 10 L9 3" stroke="#cfe0ff" stroke-width="1"/><path d="M10.5 1.5 L6 2.5 L9.5 6 Z" fill="#cfe0ff" stroke="#1e3c78" stroke-width="0.5"/></svg>
<svg style="left:930.5px;top:655px" width="12" height="12"><path d="M2 10.5 Q3 3 10 2.5" stroke="#7aa0e0" stroke-width="1.5" fill="none"/></svg>
<svg style="left:944.5px;top:655px" width="12" height="12"><path d="M2 10.5 L7.5 5" stroke="#7aa0e0" stroke-width="1.4"/><rect x="7" y="1.5" width="3.5" height="3.5" fill="#9ab8f0"/></svg>
<span class="t" style="left:962.5px;top:658.99px;font-size:8.2px;color:#fff;-webkit-text-stroke-width:0;color:#f4f4f4;">Normal</span>
<svg style="left:999px;top:656.3px" width="6" height="10"><path d="M0.5 4 L3 1 L5.5 4 Z M0.5 6 L3 9 L5.5 6 Z" fill="#cfcfcf"/></svg>
<div style="left:1011.4px;top:654.5px;width:34.5px;height:13.5px;background:#3a3a3a;border-radius:3px;"></div>
<div style="left:1012.1px;top:655.2px;width:5.9px;height:5.9px;background:linear-gradient(#a2a2a2,#8e8e8e);border-top-left-radius:3px;"></div>
<div style="left:1012.1px;top:661.95px;width:5.9px;height:5.9px;background:linear-gradient(#a2a2a2,#8e8e8e);border-bottom-left-radius:3px;"></div>
<div style="left:1019.0px;top:655.2px;width:5.9px;height:5.9px;background:linear-gradient(#a2a2a2,#8e8e8e);"></div>
<div style="left:1019.0px;top:661.95px;width:5.9px;height:5.9px;background:linear-gradient(#a2a2a2,#8e8e8e);"></div>
<div style="left:1025.9px;top:655.2px;width:5.9px;height:5.9px;background:linear-gradient(#a2a2a2,#8e8e8e);"></div>
<div style="left:1025.9px;top:661.95px;width:5.9px;height:5.9px;background:linear-gradient(#a2a2a2,#8e8e8e);"></div>
<div style="left:1032.8px;top:655.2px;width:5.9px;height:5.9px;background:linear-gradient(#a2a2a2,#8e8e8e);"></div>
<div style="left:1032.8px;top:661.95px;width:5.9px;height:5.9px;background:linear-gradient(#a2a2a2,#8e8e8e);"></div>
<div style="left:1039.7px;top:655.2px;width:5.9px;height:5.9px;background:linear-gradient(#a2a2a2,#8e8e8e);border-top-right-radius:3px;"></div>
<div style="left:1039.7px;top:661.95px;width:5.9px;height:5.9px;background:linear-gradient(#a2a2a2,#8e8e8e);border-bottom-right-radius:3px;"></div>
<div style="left:1049.5px;top:654.5px;width:34.5px;height:13.5px;background:#3a3a3a;border-radius:3px;"></div>
<div style="left:1050.2px;top:655.2px;width:5.9px;height:5.9px;background:linear-gradient(#a2a2a2,#8e8e8e);border-top-left-radius:3px;"></div>
<div style="left:1050.2px;top:661.95px;width:5.9px;height:5.9px;background:linear-gradient(#a2a2a2,#8e8e8e);border-bottom-left-radius:3px;"></div>
<div style="left:1057.1000000000001px;top:655.2px;width:5.9px;height:5.9px;background:linear-gradient(#a2a2a2,#8e8e8e);"></div>
<div style="left:1057.1000000000001px;top:661.95px;width:5.9px;height:5.9px;background:linear-gradient(#a2a2a2,#8e8e8e);"></div>
<div style="left:1064.0px;top:655.2px;width:5.9px;height:5.9px;background:linear-gradient(#a2a2a2,#8e8e8e);"></div>
<div style="left:1064.0px;top:661.95px;width:5.9px;height:5.9px;background:linear-gradient(#a2a2a2,#8e8e8e);"></div>
<div style="left:1070.9px;top:655.2px;width:5.9px;height:5.9px;background:linear-gradient(#a2a2a2,#8e8e8e);"></div>
<div style="left:1070.9px;top:661.95px;width:5.9px;height:5.9px;background:linear-gradient(#a2a2a2,#8e8e8e);"></div>
<div style="left:1077.8px;top:655.2px;width:5.9px;height:5.9px;background:linear-gradient(#a2a2a2,#8e8e8e);border-top-right-radius:3px;"></div>
<div style="left:1077.8px;top:661.95px;width:5.9px;height:5.9px;background:linear-gradient(#a2a2a2,#8e8e8e);border-bottom-right-radius:3px;"></div>
<svg style="left:1012.5px;top:655.5px" width="5" height="5"><circle cx="2.5" cy="2.5" r="1.7" fill="#f0a030" stroke="#7a3a10" stroke-width="0.5"/></svg>
<div style="left:1087.6px;top:654.5px;width:13.5px;height:13.5px;background:linear-gradient(#4a4a4a,#363636);border:1px solid #1e1e1e;border-radius:3px 3px 3px 3px;"></div>
<svg style="left:1088.5px;top:655.5px" width="12" height="12"><rect x="1.5" y="2" width="7" height="8" fill="#ddd" stroke="#555" stroke-width="0.5"/><path d="M8.5 3 Q11 4 8.5 6 Q11 8 8.5 10" stroke="#eee" stroke-width="1.2" fill="none"/></svg>
<div style="left:1105px;top:654.5px;width:13.5px;height:13.5px;background:linear-gradient(#9c9c9c,#868686);border:1px solid #2c2c2c;border-radius:3px 3px 3px 3px;"></div>
<svg style="left:1106px;top:655.5px" width="12" height="12"><circle cx="6" cy="6" r="4.3" stroke="#b4b4b4" stroke-width="1" fill="none"/><circle cx="6" cy="6" r="2" stroke="#b4b4b4" stroke-width="0.8" fill="none"/></svg>
<div style="left:1122.6px;top:654.5px;width:13.5px;height:13.5px;background:linear-gradient(#9c9c9c,#868686);border:1px solid #2c2c2c;border-radius:3px 0 0 3px;"></div>
<svg style="left:1123.5px;top:655.5px" width="12" height="12"><path d="M3 9 L8 4 Q10 2 8.5 1.5 Q7.5 1 6 2.5 L1.8 6.8" stroke="#e8e8e8" stroke-width="1.6" fill="none"/><path d="M5.5 11 L10.5 6" stroke="#e8e8e8" stroke-width="1.6"/></svg>
<div style="left:1135.9px;top:654.5px;width:24.5px;height:13.5px;background:linear-gradient(#545454,#383838);border:1px solid #1a1a1a;border-radius:0 0 0 0;"></div>
<svg style="left:1151.4px;top:656.25px" width="6" height="10"><path d="M0.5 4 L3 1 L5.5 4 Z M0.5 6 L3 9 L5.5 6 Z" fill="#cfcfcf"/></svg>
<svg style="left:1137.5px;top:655.5px" width="12" height="12"><path d="M1 6 H11 M1 3 V9 M11 3 V9" stroke="#ddd" stroke-width="1"/><rect x="5" y="1.5" width="2" height="9" fill="#5a8ae8" stroke="#fff" stroke-width="0.5"/></svg>
<div style="left:1160.2px;top:654.5px;width:13.5px;height:13.5px;background:linear-gradient(#9c9c9c,#868686);border:1px solid #2c2c2c;border-radius:0 3px 3px 0;"></div>
<svg style="left:1161px;top:655.5px" width="12" height="12"><g fill="#555"><rect x="1" y="9" width="1.5" height="1.5"/><rect x="4" y="9" width="1.5" height="1.5"/><rect x="7" y="9" width="1.5" height="1.5"/><rect x="10" y="9" width="1.5" height="1.5"/><rect x="1" y="6" width="1.5" height="1.5"/><rect x="10" y="6" width="1.5" height="1.5"/></g><circle cx="5" cy="4" r="3" fill="#4a80e0" stroke="#fff" stroke-width="1"/></svg>
</div>
<div style="left:588px;top:652px;width:2px;height:19px;background:#2b2b2b;"></div>
<div style="left:1156px;top:328px;width:1px;height:19px;background:#2b2b2b;"></div>
<div style="left:1156px;top:652px;width:1px;height:19px;background:#2b2b2b;"></div>
<div style="left:0px;top:671px;width:198.5px;height:49px;background:#464646;"></div>
<div style="left:198.5px;top:671px;width:844.9000000000001px;height:49px;background:#757575;"></div>
<div style="left:1043.4px;top:671px;width:112.59999999999991px;height:49px;background:#464646;"></div>
<div style="left:9.9px;top:671px;width:1px;height:49px;background:#414141;"></div>
<div style="left:26.8px;top:671px;width:1px;height:49px;background:#3a3a3a;"></div>
<div style="left:43.8px;top:671px;width:1px;height:49px;background:#414141;"></div>
<div style="left:60.7px;top:671px;width:1px;height:49px;background:#3a3a3a;"></div>
<div style="left:77.6px;top:671px;width:1px;height:49px;background:#414141;"></div>
<div style="left:94.5px;top:671px;width:1px;height:49px;background:#3a3a3a;"></div>
<div style="left:111.5px;top:671px;width:1px;height:49px;background:#414141;"></div>
<div style="left:128.4px;top:671px;width:1px;height:49px;background:#3a3a3a;"></div>
<div style="left:145.3px;top:671px;width:1px;height:49px;background:#414141;"></div>
<div style="left:162.2px;top:671px;width:1px;height:49px;background:#3a3a3a;"></div>
<div style="left:179.2px;top:671px;width:1px;height:49px;background:#414141;"></div>
<div style="left:196.1px;top:671px;width:1px;height:49px;background:#5f5f5f;"></div>
<div style="left:213.0px;top:671px;width:1px;height:49px;background:#6c6c6c;"></div>
<div style="left:229.9px;top:671px;width:1px;height:49px;background:#5f5f5f;"></div>
<div style="left:246.9px;top:671px;width:1px;height:49px;background:#6c6c6c;"></div>
<div style="left:263.8px;top:671px;width:1px;height:49px;background:#5f5f5f;"></div>
<div style="left:280.7px;top:671px;width:1px;height:49px;background:#6c6c6c;"></div>
<div style="left:297.6px;top:671px;width:1px;height:49px;background:#5f5f5f;"></div>
<div style="left:314.6px;top:671px;width:1px;height:49px;background:#6c6c6c;"></div>
<div style="left:331.5px;top:671px;width:1px;height:49px;background:#5f5f5f;"></div>
<div style="left:348.4px;top:671px;width:1px;height:49px;background:#6c6c6c;"></div>
<div style="left:365.4px;top:671px;width:1px;height:49px;background:#5f5f5f;"></div>
<div style="left:382.3px;top:671px;width:1px;height:49px;background:#6c6c6c;"></div>
<div style="left:399.2px;top:671px;width:1px;height:49px;background:#5f5f5f;"></div>
<div style="left:416.1px;top:671px;width:1px;height:49px;background:#6c6c6c;"></div>
<div style="left:433.0px;top:671px;width:1px;height:49px;background:#5f5f5f;"></div>
<div style="left:450.0px;top:671px;width:1px;height:49px;background:#6c6c6c;"></div>
<div style="left:466.9px;top:671px;width:1px;height:49px;background:#5f5f5f;"></div>
<div style="left:483.8px;top:671px;width:1px;height:49px;background:#6c6c6c;"></div>
<div style="left:500.8px;top:671px;width:1px;height:49px;background:#5f5f5f;"></div>
<div style="left:517.7px;top:671px;width:1px;height:49px;background:#6c6c6c;"></div>
<div style="left:534.6px;top:671px;width:1px;height:49px;background:#5f5f5f;"></div>
<div style="left:551.5px;top:671px;width:1px;height:49px;background:#6c6c6c;"></div>
<div style="left:568.4px;top:671px;width:1px;height:49px;background:#5f5f5f;"></div>
<div style="left:585.4px;top:671px;width:1px;height:49px;background:#6c6c6c;"></div>
<div style="left:602.3px;top:671px;width:1px;height:49px;background:#5f5f5f;"></div>
<div style="left:619.2px;top:671px;width:1px;height:49px;background:#6c6c6c;"></div>
<div style="left:636.1px;top:671px;width:1px;height:49px;background:#5f5f5f;"></div>
<div style="left:653.1px;top:671px;width:1px;height:49px;background:#6c6c6c;"></div>
<div style="left:670.0px;top:671px;width:1px;height:49px;background:#5f5f5f;"></div>
<div style="left:686.9px;top:671px;width:1px;height:49px;background:#6c6c6c;"></div>
<div style="left:703.8px;top:671px;width:1px;height:49px;background:#5f5f5f;"></div>
<div style="left:720.8px;top:671px;width:1px;height:49px;background:#6c6c6c;"></div>
<div style="left:737.7px;top:671px;width:1px;height:49px;background:#5f5f5f;"></div>
<div style="left:754.6px;top:671px;width:1px;height:49px;background:#6c6c6c;"></div>
<div style="left:771.5px;top:671px;width:1px;height:49px;background:#5f5f5f;"></div>
<div style="left:788.5px;top:671px;width:1px;height:49px;background:#6c6c6c;"></div>
<div style="left:805.4px;top:671px;width:1px;height:49px;background:#5f5f5f;"></div>
<div style="left:822.3px;top:671px;width:1px;height:49px;background:#6c6c6c;"></div>
<div style="left:839.2px;top:671px;width:1px;height:49px;background:#5f5f5f;"></div>
<div style="left:856.2px;top:671px;width:1px;height:49px;background:#6c6c6c;"></div>
<div style="left:873.1px;top:671px;width:1px;height:49px;background:#5f5f5f;"></div>
<div style="left:890.0px;top:671px;width:1px;height:49px;background:#6c6c6c;"></div>
<div style="left:906.9px;top:671px;width:1px;height:49px;background:#5f5f5f;"></div>
<div style="left:923.9px;top:671px;width:1px;height:49px;background:#6c6c6c;"></div>
<div style="left:940.8px;top:671px;width:1px;height:49px;background:#5f5f5f;"></div>
<div style="left:957.7px;top:671px;width:1px;height:49px;background:#6c6c6c;"></div>
<div style="left:974.6px;top:671px;width:1px;height:49px;background:#5f5f5f;"></div>
<div style="left:991.6px;top:671px;width:1px;height:49px;background:#6c6c6c;"></div>
<div style="left:1008.5px;top:671px;width:1px;height:49px;background:#5f5f5f;"></div>
<div style="left:1025.4px;top:671px;width:1px;height:49px;background:#6c6c6c;"></div>
<div style="left:1042.3px;top:671px;width:1px;height:49px;background:#5f5f5f;"></div>
<div style="left:1059.3px;top:671px;width:1px;height:49px;background:#414141;"></div>
<div style="left:1076.2px;top:671px;width:1px;height:49px;background:#3a3a3a;"></div>
<div style="left:1093.1px;top:671px;width:1px;height:49px;background:#414141;"></div>
<div style="left:1110.0px;top:671px;width:1px;height:49px;background:#3a3a3a;"></div>
<div style="left:1127.0px;top:671px;width:1px;height:49px;background:#414141;"></div>
<div style="left:1143.9px;top:671px;width:1px;height:49px;background:#3a3a3a;"></div>
<div style="left:198.4px;top:671px;width:2.2px;height:49px;background:#5ad24a;"></div>
<div style="left:0px;top:720px;width:1156px;height:11px;background:#727272;"></div>
<div style="left:3px;top:720.5px;width:1149px;height:8px;background:linear-gradient(#aaaaaa,#999999);border:1px solid #5a5a5a;border-radius:4px;"></div>
<svg style="left:3px;top:720px" width="9" height="9"><circle cx="4.5" cy="4.5" r="3" fill="#8a8a8a"/></svg>
<span class="t" style="left:12.3px;width:29.999999999999996px;text-align:center;top:721.33px;font-size:8.5px;color:#111;">-50</span>
<span class="t" style="left:46.2px;width:30.0px;text-align:center;top:721.33px;font-size:8.5px;color:#111;">-40</span>
<span class="t" style="left:80.0px;width:30.0px;text-align:center;top:721.33px;font-size:8.5px;color:#111;">-30</span>
<span class="t" style="left:113.9px;width:30.0px;text-align:center;top:721.33px;font-size:8.5px;color:#111;">-20</span>
<span class="t" style="left:147.8px;width:30.0px;text-align:center;top:721.33px;font-size:8.5px;color:#111;">-10</span>
<span class="t" style="left:182.4px;width:30.0px;text-align:center;top:721.33px;font-size:8.5px;color:#111;">0</span>
<span class="t" style="left:214.4px;width:30.0px;text-align:center;top:721.33px;font-size:8.5px;color:#111;">10</span>
<span class="t" style="left:248.3px;width:30.0px;text-align:center;top:721.33px;font-size:8.5px;color:#111;">20</span>
<span class="t" style="left:282.1px;width:30.0px;text-align:center;top:721.33px;font-size:8.5px;color:#111;">30</span>
<span class="t" style="left:316.0px;width:30.0px;text-align:center;top:721.33px;font-size:8.5px;color:#111;">40</span>
<span class="t" style="left:349.9px;width:30.0px;text-align:center;top:721.33px;font-size:8.5px;color:#111;">50</span>
<span class="t" style="left:383.7px;width:30.0px;text-align:center;top:721.33px;font-size:8.5px;color:#111;">60</span>
<span class="t" style="left:417.5px;width:30.0px;text-align:center;top:721.33px;font-size:8.5px;color:#111;">70</span>
<span class="t" style="left:451.4px;width:30.0px;text-align:center;top:721.33px;font-size:8.5px;color:#111;">80</span>
<span class="t" style="left:485.2px;width:30.000000000000057px;text-align:center;top:721.33px;font-size:8.5px;color:#111;">90</span>
<span class="t" style="left:517.1px;width:30.0px;text-align:center;top:721.33px;font-size:8.5px;color:#111;">100</span>
<span class="t" style="left:550.9px;width:30.0px;text-align:center;top:721.33px;font-size:8.5px;color:#111;">110</span>
<span class="t" style="left:584.8px;width:30.0px;text-align:center;top:721.33px;font-size:8.5px;color:#111;">120</span>
<span class="t" style="left:618.6px;width:30.0px;text-align:center;top:721.33px;font-size:8.5px;color:#111;">130</span>
<span class="t" style="left:652.5px;width:30.0px;text-align:center;top:721.33px;font-size:8.5px;color:#111;">140</span>
<span class="t" style="left:686.3px;width:30.0px;text-align:center;top:721.33px;font-size:8.5px;color:#111;">150</span>
<span class="t" style="left:720.2px;width:30.0px;text-align:center;top:721.33px;font-size:8.5px;color:#111;">160</span>
<span class="t" style="left:754.0px;width:30.0px;text-align:center;top:721.33px;font-size:8.5px;color:#111;">170</span>
<span class="t" style="left:787.9px;width:30.0px;text-align:center;top:721.33px;font-size:8.5px;color:#111;">180</span>
<span class="t" style="left:821.8px;width:30.0px;text-align:center;top:721.33px;font-size:8.5px;color:#111;">190</span>
<span class="t" style="left:855.6px;width:30.0px;text-align:center;top:721.33px;font-size:8.5px;color:#111;">200</span>
<span class="t" style="left:889.4px;width:30.0px;text-align:center;top:721.33px;font-size:8.5px;color:#111;">210</span>
<span class="t" style="left:923.3px;width:30.0px;text-align:center;top:721.33px;font-size:8.5px;color:#111;">220</span>
<span class="t" style="left:957.1px;width:30.0px;text-align:center;top:721.33px;font-size:8.5px;color:#111;">230</span>
<span class="t" style="left:991.0px;width:30.0px;text-align:center;top:721.33px;font-size:8.5px;color:#111;">240</span>
<span class="t" style="left:1024.8px;width:30.0px;text-align:center;top:721.33px;font-size:8.5px;color:#111;">250</span>
<span class="t" style="left:1058.7px;width:30.0px;text-align:center;top:721.33px;font-size:8.5px;color:#111;">260</span>
<span class="t" style="left:1092.5px;width:30.0px;text-align:center;top:721.33px;font-size:8.5px;color:#111;">270</span>
<span class="t" style="left:1126.4px;width:30.0px;text-align:center;top:721.33px;font-size:8.5px;color:#111;">280</span>
<div style="left:0;top:0;width:1333px;height:750px;clip-path:inset(731px 177px 0px 0px);">
<div style="left:6.3px;top:734px;width:20.2px;height:13.3px;background:linear-gradient(#4a4a4a,#363636);border:1px solid #1e1e1e;border-radius:3px 3px 3px 3px;"></div>
<svg style="left:8px;top:735px" width="12" height="12"><circle cx="6" cy="6" r="5" fill="#f4f4f4" stroke="#222" stroke-width="0.8"/><path d="M6 6 L3.5 8" stroke="#e02020" stroke-width="1.2"/><path d="M6 6 L8 2.5" stroke="#444" stroke-width="0.8"/></svg>
<svg style="left:19.3px;top:735.8px" width="6" height="10"><path d="M0.5 4 L3 1 L5.5 4 Z M0.5 6 L3 9 L5.5 6 Z" fill="#c8c8c8"/></svg>
<span class="t" style="left:34.9px;top:738.99px;font-size:8.2px;color:#000;">View</span>
<span class="t" style="left:66.4px;top:738.99px;font-size:8.2px;color:#000;">Marker</span>
<span class="t" style="left:104.6px;top:738.99px;font-size:8.2px;color:#000;">Frame</span>
<span class="t" style="left:140.6px;top:738.99px;font-size:8.2px;color:#000;">Playback</span>
<div style="left:181.1px;top:734px;width:13.5px;height:13.3px;background:linear-gradient(#9c9c9c,#868686);border:1px solid #2c2c2c;border-radius:3px 0 0 3px;"></div>
<svg style="left:182.5px;top:735px" width="11" height="11"><circle cx="5.5" cy="5.5" r="4.5" fill="#f0f0f0" stroke="#333" stroke-width="0.6"/><path d="M5.5 5.5 L5.5 1 A4.5 4.5 0 0 1 10 5.5 Z" fill="#f08a20"/><path d="M5.5 5.5 L3 8" stroke="#e02020" stroke-width="1"/></svg>
<div style="left:194.6px;top:734px;width:13.5px;height:13.3px;background:linear-gradient(#9c9c9c,#868686);border:1px solid #2c2c2c;border-radius:0 3px 3px 0;"></div>
<svg style="left:196px;top:735px" width="11" height="11"><path d="M3 5 V3.5 A2.5 2.5 0 0 1 8 3.5 V5" stroke="#eee" stroke-width="1.1" fill="none"/><rect x="2" y="5" width="7" height="5" fill="#eee" stroke="#444" stroke-width="0.4"/><rect x="5" y="6.5" width="1" height="2" fill="#555"/></svg>
<div style="left:212.6px;top:734px;width:80px;height:13.3px;background:linear-gradient(#a4a4a4,#b4b4b4);border:1px solid #3a3a3a;border-radius:6.65px 0 0 6.65px;"></div>
<svg style="left:215.6px;top:737.65px" width="5" height="6"><path d="M4 0.5 L1 3 L4 5.5 Z" fill="#808080"/></svg>
<svg style="left:285.6px;top:737.65px" width="5" height="6"><path d="M1 0.5 L4 3 L1 5.5 Z" fill="#808080"/></svg>
<span class="t" style="left:222.6px;top:737.84px;font-size:8.2px;color:#000;">Start:</span>
<span class="t" style="right:1049.4px;top:737.84px;font-size:8.2px;color:#000;">1</span>
<div style="left:292.5px;top:734px;width:77.4px;height:13.3px;background:linear-gradient(#a4a4a4,#b4b4b4);border:1px solid #3a3a3a;border-radius:0 6.65px 6.65px 0;"></div>
<svg style="left:295.5px;top:737.65px" width="5" height="6"><path d="M4 0.5 L1 3 L4 5.5 Z" fill="#808080"/></svg>
<svg style="left:362.9px;top:737.65px" width="5" height="6"><path d="M1 0.5 L4 3 L1 5.5 Z" fill="#808080"/></svg>
<span class="t" style="left:302.5px;top:737.84px;font-size:8.2px;color:#000;">End:</span>
<span class="t" style="right:972.1px;top:737.84px;font-size:8.2px;color:#000;">250</span>
<div style="left:374.4px;top:734px;width:62px;height:13.3px;background:linear-gradient(#a4a4a4,#b4b4b4);border:1px solid #3a3a3a;border-radius:6.65px 6.65px 6.65px 6.65px;"></div>
<svg style="left:377.4px;top:737.65px" width="5" height="6"><path d="M4 0.5 L1 3 L4 5.5 Z" fill="#808080"/></svg>
<svg style="left:429.4px;top:737.65px" width="5" height="6"><path d="M1 0.5 L4 3 L1 5.5 Z" fill="#808080"/></svg>
<span class="t" style="right:905.6px;top:737.84px;font-size:8.2px;color:#000;">1</span>
<div style="left:447.5px;top:734px;width:13.800000000000011px;height:13.3px;background:linear-gradient(#9c9c9c,#868686);border:1px solid #2c2c2c;border-radius:3px 0 0 3px;"></div>
<div style="left:461.3px;top:734px;width:13.800000000000011px;height:13.3px;background:linear-gradient(#9c9c9c,#868686);border:1px solid #2c2c2c;border-radius:0 0 0 0;"></div>
<div style="left:475.1px;top:734px;width:13.799999999999955px;height:13.3px;background:linear-gradient(#9c9c9c,#868686);border:1px solid #2c2c2c;border-radius:0 0 0 0;"></div>
<div style="left:488.9px;top:734px;width:13.800000000000011px;height:13.3px;background:linear-gradient(#9c9c9c,#868686);border:1px solid #2c2c2c;border-radius:0 0 0 0;"></div>
<div style="left:502.7px;top:734px;width:13.800000000000011px;height:13.3px;background:linear-gradient(#9c9c9c,#868686);border:1px solid #2c2c2c;border-radius:0 0 0 0;"></div>
<div style="left:516.5px;top:734px;width:13.799999999999955px;height:13.3px;background:linear-gradient(#9c9c9c,#868686);border:1px solid #2c2c2c;border-radius:0 3px 3px 0;"></div>
<svg style="left:448.5px;top:734.6px" width="12" height="12"><path d="M1.5 1.5 V10.5 M10.5 1.5 L6 6 L10.5 10.5 Z M6.5 1.5 L2 6 L6.5 10.5 Z" fill="#f0f0f0" stroke="#222" stroke-width="0.8" stroke-linejoin="round"/></svg>
<svg style="left:462.3px;top:734.6px" width="12" height="12"><path d="M10.5 1.5 L6 6 L10.5 10.5 Z M6 1.5 L1.5 6 L6 10.5 Z" fill="#f0f0f0" stroke="#222" stroke-width="0.8" stroke-linejoin="round"/></svg>
<svg style="left:476.1px;top:734.6px" width="12" height="12"><path d="M9.5 1 L2.5 6 L9.5 11 Z" fill="#f0f0f0" stroke="#222" stroke-width="0.8" stroke-linejoin="round"/></svg>
<svg style="left:489.9px;top:734.6px" width="12" height="12"><path d="M2.5 1 L9.5 6 L2.5 11 Z" fill="#f0f0f0" stroke="#222" stroke-width="0.8" stroke-linejoin="round"/></svg>
<svg style="left:503.7px;top:734.6px" width="12" height="12"><path d="M1.5 1.5 L6 6 L1.5 10.5 Z M6 1.5 L10.5 6 L6 10.5 Z" fill="#f0f0f0" stroke="#222" stroke-width="0.8" stroke-linejoin="round"/></svg>
<svg style="left:517.5px;top:734.6px" width="12" height="12"><path d="M10.5 1.5 V10.5 M1.5 1.5 L6 6 L1.5 10.5 Z M5.5 1.5 L10 6 L5.5 10.5 Z" fill="#f0f0f0" stroke="#222" stroke-width="0.8" stroke-linejoin="round"/></svg>
<div style="left:534.1px;top:734px;width:79.7px;height:13.3px;background:linear-gradient(#545454,#383838);border:1px solid #1a1a1a;border-radius:3px 3px 3px 3px;"></div>
<span class="t" style="left:539.1px;top:738.54px;font-size:8.2px;color:#fff;-webkit-text-stroke-width:0;color:#f4f4f4;">No Sync</span>
<svg style="left:604.8000000000001px;top:735.65px" width="6" height="10"><path d="M0.5 4 L3 1 L5.5 4 Z M0.5 6 L3 9 L5.5 6 Z" fill="#cfcfcf"/></svg>
<div style="left:626.1px;top:734px;width:13.1px;height:13.3px;background:linear-gradient(#9c9c9c,#868686);border:1px solid #2c2c2c;border-radius:3px 3px 3px 3px;"></div>
<svg style="left:627.5px;top:735.5px" width="10" height="10"><circle cx="5" cy="5" r="3.5" fill="#e83020" stroke="#fff" stroke-width="0.6"/></svg>
<div style="left:643.7px;top:734px;width:90px;height:13.3px;background:linear-gradient(#a2a2a2,#b0b0b0);border:1px solid #2c2c2c;border-radius:3px 0 0 3px;"></div>
<svg style="left:645px;top:734.5px" width="12" height="12"><path d="M3 9 L9 3" stroke="#f0f0f0" stroke-width="2"/><circle cx="3" cy="8.5" r="2" fill="#e8e0c0" stroke="#333" stroke-width="0.6"/><circle cx="9" cy="3" r="1.4" fill="#f0f0f0" stroke="#333" stroke-width="0.5"/><path d="M3 1 V5" stroke="#e8d040" stroke-width="1"/></svg>
<div style="left:733.7px;top:734px;width:13.9px;height:13.3px;background:linear-gradient(#9c9c9c,#868686);border:1px solid #2c2c2c;border-radius:0 0 0 0;"></div>
<svg style="left:735px;top:735px" width="11" height="11"><path d="M2.5 8.5 L8.5 2.5" stroke="#f0f0f0" stroke-width="1.8"/><circle cx="2.5" cy="8.5" r="1.6" fill="#f0f0f0" stroke="#333" stroke-width="0.5"/><circle cx="8.5" cy="2.5" r="1.6" fill="#f0f0f0" stroke="#333" stroke-width="0.5"/></svg>
<div style="left:747.6px;top:734px;width:13.5px;height:13.3px;background:linear-gradient(#9c9c9c,#868686);border:1px solid #2c2c2c;border-radius:0 3px 3px 0;"></div>
<svg style="left:749px;top:735px" width="11" height="11"><path d="M2.5 8.5 L8.5 2.5" stroke="#f0f0f0" stroke-width="1.8"/><circle cx="2.5" cy="8.5" r="1.6" fill="#f0f0f0" stroke="#333" stroke-width="0.5"/><circle cx="8.5" cy="2.5" r="1.6" fill="#f0f0f0" stroke="#333" stroke-width="0.5"/><path d="M1.5 1.5 L9.5 9.5" stroke="#e02020" stroke-width="1.2"/></svg>
</div>
<div style="left:0;top:0;width:1333px;height:750px;clip-path:inset(19px 0px 604px 1157px);">
<div style="left:1157px;top:19px;width:176px;height:17.5px;background:#6e6e6e;"></div>
<div style="left:1157px;top:19px;width:176px;height:1px;background:#7a7a7a;"></div>
<div style="left:1163px;top:21px;width:21px;height:13.5px;background:linear-gradient(#4a4a4a,#363636);border:1px solid #1e1e1e;border-radius:3px 3px 3px 3px;"></div>
<svg style="left:1165px;top:22px" width="12" height="12"><rect x="1" y="1" width="5" height="1.6" fill="#f0a040"/><path d="M2.5 3 V10 H5" stroke="#6a7ab0" stroke-width="1" fill="none"/><rect x="5" y="5" width="6" height="2" fill="#eee"/><rect x="5" y="8.5" width="6" height="2" fill="#eee"/></svg>
<svg style="left:1176.5px;top:22.8px" width="6" height="10"><path d="M0.5 4 L3 1 L5.5 4 Z M0.5 6 L3 9 L5.5 6 Z" fill="#c8c8c8"/></svg>
<span class="t" style="left:1191.9px;top:25.39px;font-size:8.2px;color:#000;">View</span>
<span class="t" style="left:1223.4px;top:25.39px;font-size:8.2px;color:#000;">Search</span>
<div style="left:1256.2px;top:21px;width:90px;height:13.5px;background:linear-gradient(#545454,#383838);border:1px solid #1a1a1a;border-radius:3px 3px 3px 3px;"></div>
<span class="t" style="left:1261.2px;top:25.64px;font-size:8.2px;color:#fff;-webkit-text-stroke-width:0;color:#f4f4f4;">All Scenes</span>
<div style="left:1157px;top:36.5px;width:176px;height:13.9px;background:#797979;"></div>
<div style="left:1157px;top:50.4px;width:176px;height:13.9px;background:#737373;"></div>
<div style="left:1157px;top:64.3px;width:176px;height:13.9px;background:#797979;"></div>
<div style="left:1157px;top:78.2px;width:176px;height:13.9px;background:#737373;"></div>
<div style="left:1157px;top:92.1px;width:176px;height:13.9px;background:#797979;"></div>
<div style="left:1157px;top:106.0px;width:176px;height:13.9px;background:#737373;"></div>
<div style="left:1157px;top:119.9px;width:176px;height:13.9px;background:#797979;"></div>
<div style="left:1157px;top:133.8px;width:176px;height:13.9px;background:#737373;"></div>
<div style="left:1157px;top:36.5px;width:18px;height:110px;background:rgba(255,255,255,0.035);"></div>
<div style="left:1175px;top:36.5px;width:1px;height:97px;background:#5a5a5a;"></div>
<div style="left:1279px;top:36.5px;width:1px;height:97px;background:#6a6a6a;"></div>
<div style="left:1293.6px;top:36.5px;width:1px;height:97px;background:#6a6a6a;"></div>
<div style="left:1307.6px;top:36.5px;width:1px;height:97px;background:#6a6a6a;"></div>
<svg style="left:1175px;top:38px" width="10" height="10"><circle cx="5" cy="5" r="3.6" fill="#f0f0f0" stroke="#2a2a2a" stroke-width="0.9"/><path d="M5 3 V7 M3 5 H7" stroke="#1a1a1a" stroke-width="0.9"/></svg>
<svg style="left:1185px;top:36px" width="13" height="13"><rect x="3" y="3" width="8" height="9" fill="#d8c8a8" stroke="#333" stroke-width="0.5"/><rect x="1" y="1" width="8" height="9" fill="#f4f4f4" stroke="#333" stroke-width="0.6"/><path d="M5 2.5 V7.5" stroke="#2850b0" stroke-width="1.6"/></svg>
<span class="t" style="left:1199.4px;top:40.99px;font-size:8.2px;color:#000;">RenderLayers</span>
<div style="left:1255px;top:39px;width:1px;height:9px;background:#333;"></div>
<svg style="left:1259px;top:36px" width="14" height="14"><circle cx="7" cy="7" r="6.5" fill="#8a8a8a" opacity="0.5"/><rect x="4" y="4" width="7" height="8" fill="#d8c8a8" stroke="#333" stroke-width="0.5"/><rect x="2.5" y="2.5" width="7" height="8" fill="#f4f4f4" stroke="#333" stroke-width="0.6"/><path d="M6 4 V8.5" stroke="#2850b0" stroke-width="1.4"/></svg>
<svg style="left:1185px;top:51px" width="13" height="13"><circle cx="6.5" cy="6.5" r="5.8" fill="#4a6aa8" stroke="#b8c0d8" stroke-width="0.9"/><path d="M3 5 Q5 3 7 5 Q6 8 4 8 Z M7.5 7 Q10 6 9.5 9 Q8 10 7.5 7 Z" fill="#3a8a40"/><circle cx="5" cy="4.5" r="1.5" fill="#e8e8e8" opacity="0.5"/></svg>
<span class="t" style="left:1199.4px;top:54.59px;font-size:8.2px;color:#000;">World</span>
<svg style="left:1171.2px;top:66.2px" width="10" height="10"><circle cx="5" cy="5" r="3.6" fill="#f0f0f0" stroke="#2a2a2a" stroke-width="0.9"/><path d="M5 3 V7 M3 5 H7" stroke="#1a1a1a" stroke-width="0.9"/></svg>
<div style="left:1180.5px;top:71px;width:4.5px;height:1px;background:#555;"></div>
<svg style="left:1185px;top:64.5px" width="13" height="13"><circle cx="3.5" cy="3.5" r="2.8" fill="#f0a040" stroke="#5a3010" stroke-width="0.5"/><circle cx="8.5" cy="3.5" r="2.8" fill="#f0a040" stroke="#5a3010" stroke-width="0.5"/><rect x="2" y="6" width="8" height="4.5" fill="#f0a040" stroke="#5a3010" stroke-width="0.5"/><path d="M10 8 L12.5 6.5 L12.5 10 Z" fill="#f0a040"/></svg>
<span class="t" style="left:1199px;top:68.49px;font-size:8.2px;color:#000;">Camera</span>
<div style="left:1233.4px;top:67px;width:1px;height:9px;background:#333;"></div>
<svg style="left:1239.5px;top:65px" width="13" height="13"><circle cx="6.5" cy="6.5" r="6" fill="#a8a8a8" opacity="0.9"/><circle cx="6.5" cy="6.5" r="4" fill="none" stroke="#ccc" stroke-width="1"/></svg>
<svg style="left:1171.2px;top:80px" width="10" height="10"><circle cx="5" cy="5" r="3.6" fill="#f0f0f0" stroke="#2a2a2a" stroke-width="0.9"/><path d="M5 3 V7 M3 5 H7" stroke="#1a1a1a" stroke-width="0.9"/></svg>
<div style="left:1180.5px;top:85px;width:4.5px;height:1px;background:#555;"></div>
<svg style="left:1184.5px;top:78.5px" width="14" height="14"><circle cx="7" cy="7" r="6.8" fill="#c89050"/></svg>
<svg style="left:1185.5px;top:79px" width="12" height="12"><path d="M2 2.2 L10 2.2 L6 10" fill="none" stroke="#3a2a10" stroke-width="2.6" stroke-linejoin="round"/><path d="M2 2.2 L10 2.2 L6 10 Z" fill="none" stroke="#3a2a10" stroke-width="2.6" stroke-linejoin="round"/><path d="M2 2.2 L10 2.2 L6 10 Z" fill="none" stroke="#f0a030" stroke-width="1.4" stroke-linejoin="round"/><circle cx="6" cy="4.8" r="0.9" fill="#fff"/><circle cx="2.2" cy="2.4" r="0.8" fill="#fff"/><circle cx="9.8" cy="2.4" r="0.8" fill="#fff"/><circle cx="6" cy="9.6" r="0.8" fill="#fff"/></svg>
<span class="t" style="left:1199px;top:82.39px;font-size:8.2px;color:#fff;-webkit-text-stroke-width:0;color:#f4f4f4;">Cube</span>
<div style="left:1223.8px;top:81px;width:1px;height:9px;background:#333;"></div>
<svg style="left:1230.4px;top:79px" width="12" height="12"><path d="M1.5 2 L10.5 2 L6 10" fill="none" stroke="#eee" stroke-width="0.6"/><path d="M1.5 2 L6 10" stroke="#eee" stroke-width="0.6"/><circle cx="1.5" cy="2" r="1.2" fill="#ddd" stroke="#333" stroke-width="0.4"/><circle cx="10.5" cy="2" r="1.2" fill="#ddd" stroke="#333" stroke-width="0.4"/><circle cx="6" cy="10" r="1.2" fill="#ddd" stroke="#333" stroke-width="0.4"/></svg>
<svg style="left:1171.2px;top:93.9px" width="10" height="10"><circle cx="5" cy="5" r="3.6" fill="#f0f0f0" stroke="#2a2a2a" stroke-width="0.9"/><path d="M5 3 V7 M3 5 H7" stroke="#1a1a1a" stroke-width="0.9"/></svg>
<div style="left:1180.5px;top:98.9px;width:4.5px;height:1px;background:#555;"></div>
<svg style="left:1185.5px;top:92.9px" width="12" height="12"><path d="M2 2.2 L10 2.2 L6 10" fill="none" stroke="#3a2a10" stroke-width="2.6" stroke-linejoin="round"/><path d="M2 2.2 L10 2.2 L6 10 Z" fill="none" stroke="#3a2a10" stroke-width="2.6" stroke-linejoin="round"/><path d="M2 2.2 L10 2.2 L6 10 Z" fill="none" stroke="#f0a030" stroke-width="1.4" stroke-linejoin="round"/><circle cx="6" cy="4.8" r="0.9" fill="#fff"/><circle cx="2.2" cy="2.4" r="0.8" fill="#fff"/><circle cx="9.8" cy="2.4" r="0.8" fill="#fff"/><circle cx="6" cy="9.6" r="0.8" fill="#fff"/></svg>
<span class="t" style="left:1199px;top:96.09px;font-size:8.2px;color:#000;">Cube.001</span>
<div style="left:1240.7px;top:94.4px;width:1px;height:9px;background:#333;"></div>
<svg style="left:1247.1px;top:92.9px" width="12" height="12"><path d="M1.5 2 L10.5 2 L6 10" fill="none" stroke="#eee" stroke-width="0.6"/><path d="M1.5 2 L6 10" stroke="#eee" stroke-width="0.6"/><circle cx="1.5" cy="2" r="1.2" fill="#ddd" stroke="#333" stroke-width="0.4"/><circle cx="10.5" cy="2" r="1.2" fill="#ddd" stroke="#333" stroke-width="0.4"/><circle cx="6" cy="10" r="1.2" fill="#ddd" stroke="#333" stroke-width="0.4"/></svg>
<svg style="left:1171.2px;top:107.9px" width="10" height="10"><circle cx="5" cy="5" r="3.6" fill="#f0f0f0" stroke="#2a2a2a" stroke-width="0.9"/><path d="M5 3 V7 M3 5 H7" stroke="#1a1a1a" stroke-width="0.9"/></svg>
<div style="left:1180.5px;top:112.9px;width:4.5px;height:1px;background:#555;"></div>
<svg style="left:1185.5px;top:106.9px" width="12" height="12"><path d="M2 2.2 L10 2.2 L6 10" fill="none" stroke="#3a2a10" stroke-width="2.6" stroke-linejoin="round"/><path d="M2 2.2 L10 2.2 L6 10 Z" fill="none" stroke="#3a2a10" stroke-width="2.6" stroke-linejoin="round"/><path d="M2 2.2 L10 2.2 L6 10 Z" fill="none" stroke="#f0a030" stroke-width="1.4" stroke-linejoin="round"/><circle cx="6" cy="4.8" r="0.9" fill="#fff"/><circle cx="2.2" cy="2.4" r="0.8" fill="#fff"/><circle cx="9.8" cy="2.4" r="0.8" fill="#fff"/><circle cx="6" cy="9.6" r="0.8" fill="#fff"/></svg>
<span class="t" style="left:1199px;top:110.09px;font-size:8.2px;color:#000;">Cube.003</span>
<div style="left:1240.7px;top:108.4px;width:1px;height:9px;background:#333;"></div>
<svg style="left:1247.1px;top:106.9px" width="12" height="12"><path d="M1.5 2 L10.5 2 L6 10" fill="none" stroke="#eee" stroke-width="0.6"/><path d="M1.5 2 L6 10" stroke="#eee" stroke-width="0.6"/><circle cx="1.5" cy="2" r="1.2" fill="#ddd" stroke="#333" stroke-width="0.4"/><circle cx="10.5" cy="2" r="1.2" fill="#ddd" stroke="#333" stroke-width="0.4"/><circle cx="6" cy="10" r="1.2" fill="#ddd" stroke="#333" stroke-width="0.4"/></svg>
<svg style="left:1171.2px;top:121.8px" width="10" height="10"><circle cx="5" cy="5" r="3.6" fill="#f0f0f0" stroke="#2a2a2a" stroke-width="0.9"/><path d="M5 3 V7 M3 5 H7" stroke="#1a1a1a" stroke-width="0.9"/></svg>
<div style="left:1180.5px;top:126.8px;width:4.5px;height:1px;background:#555;"></div>
<svg style="left:1185.5px;top:120.8px" width="12" height="12"><path d="M2 2.2 L10 2.2 L6 10" fill="none" stroke="#3a2a10" stroke-width="2.6" stroke-linejoin="round"/><path d="M2 2.2 L10 2.2 L6 10 Z" fill="none" stroke="#3a2a10" stroke-width="2.6" stroke-linejoin="round"/><path d="M2 2.2 L10 2.2 L6 10 Z" fill="none" stroke="#f0a030" stroke-width="1.4" stroke-linejoin="round"/><circle cx="6" cy="4.8" r="0.9" fill="#fff"/><circle cx="2.2" cy="2.4" r="0.8" fill="#fff"/><circle cx="9.8" cy="2.4" r="0.8" fill="#fff"/><circle cx="6" cy="9.6" r="0.8" fill="#fff"/></svg>
<span class="t" style="left:1199px;top:123.99px;font-size:8.2px;color:#000;">Cube.004</span>
<div style="left:1240.7px;top:122.3px;width:1px;height:9px;background:#333;"></div>
<svg style="left:1247.1px;top:120.8px" width="12" height="12"><path d="M1.5 2 L10.5 2 L6 10" fill="none" stroke="#eee" stroke-width="0.6"/><path d="M1.5 2 L6 10" stroke="#eee" stroke-width="0.6"/><circle cx="1.5" cy="2" r="1.2" fill="#ddd" stroke="#333" stroke-width="0.4"/><circle cx="10.5" cy="2" r="1.2" fill="#ddd" stroke="#333" stroke-width="0.4"/><circle cx="6" cy="10" r="1.2" fill="#ddd" stroke="#333" stroke-width="0.4"/></svg>
<svg style="left:1282.3px;top:67.3px" width="10" height="8"><path d="M0.5 4 Q5 -0.5 9.5 4 Q5 8.5 0.5 4 Z" fill="#f0f0f0" stroke="#222" stroke-width="0.6"/><circle cx="5" cy="4" r="1.5" fill="#222"/></svg>
<svg style="left:1297.7px;top:66.3px" width="9" height="10"><path d="M1 0.5 L1 8 L3 6.2 L4.5 9.5 L6 8.8 L4.6 5.6 L7.5 5.6 Z" fill="#f0f0f0" stroke="#111" stroke-width="0.7"/></svg>
<svg style="left:1309.3px;top:66.3px" width="11" height="10"><rect x="0.8" y="2.5" width="9.4" height="6.8" rx="1" fill="#f0f0f0" stroke="#222" stroke-width="0.7"/><rect x="2.5" y="0.8" width="3" height="2" fill="#ddd" stroke="#222" stroke-width="0.5"/><circle cx="5.5" cy="6" r="2.2" fill="#333"/><circle cx="5.5" cy="6" r="1" fill="#e03030"/></svg>
<svg style="left:1282.3px;top:81.2px" width="10" height="8"><path d="M0.5 4 Q5 -0.5 9.5 4 Q5 8.5 0.5 4 Z" fill="#f0f0f0" stroke="#222" stroke-width="0.6"/><circle cx="5" cy="4" r="1.5" fill="#222"/></svg>
<svg style="left:1297.7px;top:80.2px" width="9" height="10"><path d="M1 0.5 L1 8 L3 6.2 L4.5 9.5 L6 8.8 L4.6 5.6 L7.5 5.6 Z" fill="#f0f0f0" stroke="#111" stroke-width="0.7"/></svg>
<svg style="left:1309.3px;top:80.2px" width="11" height="10"><rect x="0.8" y="2.5" width="9.4" height="6.8" rx="1" fill="#f0f0f0" stroke="#222" stroke-width="0.7"/><rect x="2.5" y="0.8" width="3" height="2" fill="#ddd" stroke="#222" stroke-width="0.5"/><circle cx="5.5" cy="6" r="2.2" fill="#333"/><circle cx="5.5" cy="6" r="1" fill="#e03030"/></svg>
<svg style="left:1282.3px;top:94.9px" width="10" height="8"><path d="M0.5 4 Q5 -0.5 9.5 4 Q5 8.5 0.5 4 Z" fill="#f0f0f0" stroke="#222" stroke-width="0.6"/><circle cx="5" cy="4" r="1.5" fill="#222"/></svg>
<svg style="left:1297.7px;top:93.9px" width="9" height="10"><path d="M1 0.5 L1 8 L3 6.2 L4.5 9.5 L6 8.8 L4.6 5.6 L7.5 5.6 Z" fill="#f0f0f0" stroke="#111" stroke-width="0.7"/></svg>
<svg style="left:1309.3px;top:93.9px" width="11" height="10"><rect x="0.8" y="2.5" width="9.4" height="6.8" rx="1" fill="#f0f0f0" stroke="#222" stroke-width="0.7"/><rect x="2.5" y="0.8" width="3" height="2" fill="#ddd" stroke="#222" stroke-width="0.5"/><circle cx="5.5" cy="6" r="2.2" fill="#333"/><circle cx="5.5" cy="6" r="1" fill="#e03030"/></svg>
<svg style="left:1282.3px;top:108.9px" width="10" height="8"><path d="M0.5 4 Q5 -0.5 9.5 4 Q5 8.5 0.5 4 Z" fill="#f0f0f0" stroke="#222" stroke-width="0.6"/><circle cx="5" cy="4" r="1.5" fill="#222"/></svg>
<svg style="left:1297.7px;top:107.9px" width="9" height="10"><path d="M1 0.5 L1 8 L3 6.2 L4.5 9.5 L6 8.8 L4.6 5.6 L7.5 5.6 Z" fill="#f0f0f0" stroke="#111" stroke-width="0.7"/></svg>
<svg style="left:1309.3px;top:107.9px" width="11" height="10"><rect x="0.8" y="2.5" width="9.4" height="6.8" rx="1" fill="#f0f0f0" stroke="#222" stroke-width="0.7"/><rect x="2.5" y="0.8" width="3" height="2" fill="#ddd" stroke="#222" stroke-width="0.5"/><circle cx="5.5" cy="6" r="2.2" fill="#333"/><circle cx="5.5" cy="6" r="1" fill="#e03030"/></svg>
<svg style="left:1282.3px;top:122.8px" width="10" height="8"><path d="M0.5 4 Q5 -0.5 9.5 4 Q5 8.5 0.5 4 Z" fill="#f0f0f0" stroke="#222" stroke-width="0.6"/><circle cx="5" cy="4" r="1.5" fill="#222"/></svg>
<svg style="left:1297.7px;top:121.8px" width="9" height="10"><path d="M1 0.5 L1 8 L3 6.2 L4.5 9.5 L6 8.8 L4.6 5.6 L7.5 5.6 Z" fill="#f0f0f0" stroke="#111" stroke-width="0.7"/></svg>
<svg style="left:1309.3px;top:121.8px" width="11" height="10"><rect x="0.8" y="2.5" width="9.4" height="6.8" rx="1" fill="#f0f0f0" stroke="#222" stroke-width="0.7"/><rect x="2.5" y="0.8" width="3" height="2" fill="#ddd" stroke="#222" stroke-width="0.5"/><circle cx="5.5" cy="6" r="2.2" fill="#333"/><circle cx="5.5" cy="6" r="1" fill="#e03030"/></svg>
<div style="left:1321.5px;top:40px;width:9px;height:90.5px;background:#6a6a6a;border:1px solid #555;border-radius:4.5px;"></div>
<div style="left:1322.5px;top:46.5px;width:7px;height:38.7px;background:linear-gradient(90deg,#a0a0a0,#8c8c8c);border-radius:3.5px;"></div>
<div style="left:1160px;top:134.7px;width:158px;height:9px;background:#6a6a6a;border:1px solid #555;border-radius:4.5px;"></div>
<div style="left:1161px;top:135.5px;width:123px;height:7.5px;background:linear-gradient(#a4a4a4,#8e8e8e);border-radius:3.7px;"></div>
</div>
<div style="left:0;top:0;width:1333px;height:750px;clip-path:inset(147px 0px 0px 1157px);">
<div style="left:1157px;top:147px;width:176px;height:17.5px;background:#6e6e6e;"></div>
<div style="left:1157px;top:147px;width:176px;height:1px;background:#7a7a7a;"></div>
<div style="left:1157px;top:164.5px;width:176px;height:1px;background:#6a6a6a;"></div>
<div style="left:1163px;top:149.5px;width:20.5px;height:13px;background:linear-gradient(#4a4a4a,#363636);border:1px solid #1e1e1e;border-radius:3px 3px 3px 3px;"></div>
<svg style="left:1165px;top:150.5px" width="12" height="11"><rect x="1" y="1.5" width="9" height="3" rx="1.5" fill="#eee"/><rect x="1" y="6.5" width="9" height="3" rx="1.5" fill="#eee"/><rect x="6" y="1.5" width="3" height="3" fill="#555"/><rect x="2" y="6.5" width="3" height="3" fill="#555"/></svg>
<svg style="left:1176.5px;top:151px" width="6" height="10"><path d="M0.5 4 L3 1 L5.5 4 Z M0.5 6 L3 9 L5.5 6 Z" fill="#c8c8c8"/></svg>
<div style="left:1189.5px;top:149.5px;width:150px;height:13px;background:linear-gradient(#505050,#383838);border:1px solid #1e1e1e;border-radius:3px;"></div>
<div style="left:1203.3px;top:150px;width:1px;height:12px;background:#262626;"></div>
<div style="left:1217.1px;top:150px;width:1px;height:12px;background:#262626;"></div>
<div style="left:1230.9px;top:150px;width:1px;height:12px;background:#262626;"></div>
<div style="left:1244.7px;top:150px;width:1px;height:12px;background:#262626;"></div>
<div style="left:1258.5px;top:150px;width:1px;height:12px;background:#262626;"></div>
<div style="left:1272.3px;top:150px;width:1px;height:12px;background:#262626;"></div>
<div style="left:1286.1px;top:150px;width:1px;height:12px;background:#262626;"></div>
<div style="left:1299.9px;top:150px;width:1px;height:12px;background:#262626;"></div>
<div style="left:1313.7px;top:150px;width:1px;height:12px;background:#262626;"></div>
<div style="left:1327.5px;top:150px;width:1px;height:12px;background:#262626;"></div>
<div style="left:1189.5px;top:149.5px;width:13.8px;height:13px;background:linear-gradient(#5a8ad8,#3e6ab8);border:1px solid #1e1e1e;border-radius:3px 0 0 3px;"></div>
<svg style="left:1191.0px;top:150.5px" width="11" height="11"><rect x="1" y="3.2" width="9.5" height="6.5" rx="0.8" fill="#f0f0f0" stroke="#111" stroke-width="0.6"/><rect x="1.3" y="1.4" width="2.4" height="2" fill="#ddd" stroke="#222" stroke-width="0.4"/><circle cx="6.2" cy="6.5" r="2.3" fill="#222"/><circle cx="6.2" cy="6.5" r="1" fill="#c02020"/><rect x="1.6" y="5" width="2" height="1.2" fill="#222"/><circle cx="3.5" cy="2.6" r="0.7" fill="#e03030"/></svg>
<svg style="left:1204.8px;top:150.5px" width="11" height="11"><rect x="3.2" y="3.2" width="7" height="7.3" fill="#d8d0c0" stroke="#333" stroke-width="0.5"/><rect x="1" y="1" width="7" height="7.3" fill="#e8e8f0" stroke="#333" stroke-width="0.5"/><path d="M4.8 2.5 V6.8" stroke="#2850b0" stroke-width="1.4"/><rect x="1.8" y="1.8" width="1.6" height="1.4" fill="#d8d040"/></svg>
<svg style="left:1218.6px;top:150.5px" width="11" height="11"><circle cx="2.8" cy="2.6" r="1.5" fill="#c8c070" opacity="0.8"/><rect x="6" y="1.5" width="3.8" height="6.5" rx="1.2" fill="#3a68c0" stroke="#222" stroke-width="0.5"/><rect x="6.5" y="2" width="1.5" height="2" fill="#c8d8f0"/><circle cx="4.5" cy="8" r="2.6" fill="#e8e8e8" stroke="#222" stroke-width="0.6"/></svg>
<svg style="left:1232.4px;top:150.5px" width="11" height="11"><circle cx="5.5" cy="5.5" r="4.6" fill="#8aa0c8" stroke="#1e2a40" stroke-width="0.7"/><path d="M2.5 3.5 Q4.5 2 5.5 4 Q5 6.5 3 6.5 Z M6.5 6 Q9 5.5 8.8 8 Q7 9.5 6.5 6 Z" fill="#3a5a30"/><path d="M3 2.8 Q5 1.5 7 2.5" stroke="#e8f0ff" stroke-width="0.6" fill="none"/></svg>
<svg style="left:1246.2px;top:150.5px" width="11" height="11"><path d="M5.5 1 L10 3 L10 8 L5.5 10 L1 8 L1 3 Z" fill="#c08840" stroke="#4a2a10" stroke-width="0.5"/><path d="M1 3 L5.5 5 L10 3 L5.5 1 Z" fill="#e8c898"/><path d="M5.5 5 L10 3 L10 8 L5.5 10 Z" fill="#a87030"/></svg>
<svg style="left:1260.0px;top:150.5px" width="11" height="11"><rect x="1" y="4.5" width="5" height="3" rx="1.5" transform="rotate(-35 3.5 6)" fill="none" stroke="#d0d0d0" stroke-width="1.1"/><rect x="5" y="3.5" width="5" height="3" rx="1.5" transform="rotate(-35 7.5 5)" fill="none" stroke="#d0d0d0" stroke-width="1.1"/></svg>
<svg style="left:1273.8px;top:150.5px" width="11" height="11"><path d="M2 9.5 L7 4.5" stroke="#6a8ad0" stroke-width="2"/><path d="M6.5 2.5 Q8 0.5 10 1.5 L8.5 3 L9 4 L10 3.2 Q10.5 5.5 8 6 Z" fill="#8aa8e0" stroke="#2a3a60" stroke-width="0.4"/></svg>
<svg style="left:1287.6px;top:150.5px" width="11" height="11"><path d="M2 2.5 L9 2.5 L5.5 9" fill="none" stroke="#888" stroke-width="0.7"/><path d="M2 2.5 L5.5 9" stroke="#888" stroke-width="0.7"/><circle cx="2" cy="2.5" r="1.1" fill="#f0f0f0" stroke="#111" stroke-width="0.4"/><circle cx="9" cy="2.5" r="1.1" fill="#f0f0f0" stroke="#111" stroke-width="0.4"/><circle cx="5.5" cy="9" r="1.1" fill="#f0f0f0" stroke="#111" stroke-width="0.4"/></svg>
<svg style="left:1301.4px;top:150.5px" width="11" height="11"><defs><radialGradient id="matg" cx="0.35" cy="0.3" r="0.8"><stop offset="0" stop-color="#e0e0e0"/><stop offset="0.6" stop-color="#8a8070"/><stop offset="1" stop-color="#a07040"/></radialGradient></defs><circle cx="5.5" cy="5.5" r="4.6" fill="url(#matg)" stroke="#222" stroke-width="0.5"/></svg>
<svg style="left:1315.2px;top:150.5px" width="11" height="11"><rect x="1" y="1" width="9" height="9" fill="#f0f0f0" stroke="#444" stroke-width="0.4"/><g fill="#9a2020"><rect x="1.00" y="1.00" width="2.25" height="2.25"/><rect x="1.00" y="5.50" width="2.25" height="2.25"/><rect x="3.25" y="3.25" width="2.25" height="2.25"/><rect x="3.25" y="7.75" width="2.25" height="2.25"/><rect x="5.50" y="1.00" width="2.25" height="2.25"/><rect x="5.50" y="5.50" width="2.25" height="2.25"/><rect x="7.75" y="3.25" width="2.25" height="2.25"/><rect x="7.75" y="7.75" width="2.25" height="2.25"/></g></svg>
<svg style="left:1162px;top:171.5px" width="13" height="13"><path d="M1.5 11.5 L5 8" stroke="#e8e8e8" stroke-width="1.6"/><path d="M1.5 11.5 L5 8" stroke="#333" stroke-width="0.4"/><path d="M4 5.5 L7.5 9 L8.5 8 L8 6.5 L10 4.5 L11 4.8 L11.6 4 L9 1.4 L8.2 2 L8.5 3 L6.5 5 L5 4.5 Z" fill="#f0f0f0" stroke="#1a1a1a" stroke-width="0.7"/></svg>
<svg style="left:1178px;top:171.5px" width="13" height="13"><circle cx="2.8" cy="2.6" r="1.6" fill="#d8d070"/><rect x="6.5" y="1.8" width="4.2" height="7" rx="1.4" fill="#3a68c0" stroke="#1a1a1a" stroke-width="0.5"/><rect x="7" y="2.4" width="1.6" height="2.2" fill="#d0e0ff"/><circle cx="4.8" cy="8.6" r="2.9" fill="#ececec" stroke="#1a1a1a" stroke-width="0.7"/></svg>
<span class="t" style="left:1192px;top:175.69px;font-size:8.2px;color:#000;">Scene</span>
<div style="left:1160px;top:189.5px;width:170px;height:1px;background:#5e5e5e;"></div>
<div style="left:1160px;top:190.5px;width:170px;height:1px;background:#7e7e7e;"></div>
<svg style="left:1165px;top:195px" width="7" height="7"><path d="M0.5 1 L6.5 1 L3.5 6 Z" fill="#111"/></svg>
<span class="t" style="left:1174px;top:195.11px;font-size:8.7px;color:#000;">Render</span>
<svg style="left:1318px;top:197px" width="10" height="6"><rect x="1.00" y="2.00" width="1.1" height="1.1" fill="#404040"/><rect x="1.00" y="4.15" width="1.1" height="1.1" fill="#404040"/><rect x="3.05" y="2.00" width="1.1" height="1.1" fill="#404040"/><rect x="3.05" y="4.15" width="1.1" height="1.1" fill="#404040"/><rect x="5.10" y="2.00" width="1.1" height="1.1" fill="#404040"/><rect x="5.10" y="4.15" width="1.1" height="1.1" fill="#404040"/><rect x="7.15" y="2.00" width="1.1" height="1.1" fill="#404040"/><rect x="7.15" y="4.15" width="1.1" height="1.1" fill="#404040"/><rect x="1.00" y="1.00" width="1.1" height="1" fill="#b8b8b8"/><rect x="1.00" y="3.15" width="1.1" height="1" fill="#b8b8b8"/><rect x="3.05" y="1.00" width="1.1" height="1" fill="#b8b8b8"/><rect x="3.05" y="3.15" width="1.1" height="1" fill="#b8b8b8"/><rect x="5.10" y="1.00" width="1.1" height="1" fill="#b8b8b8"/><rect x="5.10" y="3.15" width="1.1" height="1" fill="#b8b8b8"/><rect x="7.15" y="1.00" width="1.1" height="1" fill="#b8b8b8"/><rect x="7.15" y="3.15" width="1.1" height="1" fill="#b8b8b8"/></svg>
<div style="left:1162.5px;top:213.2px;width:53.5px;height:12.8px;background:linear-gradient(#a6a6a6,#8e8e8e);border:1px solid #1e1e1e;border-radius:3px 0 0 3px;"></div>
<span class="t" style="left:1162.5px;width:53.5px;text-align:center;top:216.79px;font-size:8.2px;color:#000;"></span>
<div style="left:1216px;top:213.2px;width:55.200000000000045px;height:12.8px;background:linear-gradient(#a6a6a6,#8e8e8e);border:1px solid #1e1e1e;border-left:none;border-radius:0 0 0 0;"></div>
<span class="t" style="left:1216px;width:55.200000000000045px;text-align:center;top:216.79px;font-size:8.2px;color:#000;"></span>
<div style="left:1271.2px;top:213.2px;width:55.799999999999955px;height:12.8px;background:linear-gradient(#a6a6a6,#8e8e8e);border:1px solid #1e1e1e;border-left:none;border-radius:0 3px 3px 0;"></div>
<span class="t" style="left:1271.2px;width:55.799999999999955px;text-align:center;top:216.79px;font-size:8.2px;color:#000;"></span>
<svg style="left:1164px;top:214px" width="12" height="11"><rect x="1" y="3" width="9" height="6.5" rx="1" fill="#e8e8e8" stroke="#222" stroke-width="0.6"/><circle cx="5.5" cy="6.3" r="2" fill="#333"/><circle cx="9" cy="2.5" r="2" fill="#f0a020"/></svg>
<span class="t" style="left:1182px;top:216.69px;font-size:8.2px;color:#000;">Render</span>
<svg style="left:1219px;top:214px" width="12" height="11"><rect x="1" y="4" width="10" height="6" fill="#e8e8e8" stroke="#222" stroke-width="0.6"/><path d="M1 4 L3 1 M4 4 L6 1 M7 4 L9 1" stroke="#222" stroke-width="0.8"/><circle cx="4" cy="7" r="1.5" fill="#333"/></svg>
<span class="t" style="left:1232.5px;top:216.69px;font-size:8.2px;color:#000;">Animation</span>
<svg style="left:1273px;top:214px" width="12" height="11"><path d="M1 4 H3.5 L6.5 1.5 V9.5 L3.5 7 H1 Z" fill="#e8e8e8" stroke="#222" stroke-width="0.6"/><path d="M8 3 Q10 5.5 8 8" stroke="#3a6ac0" stroke-width="1" fill="none"/></svg>
<span class="t" style="left:1295px;top:216.69px;font-size:8.2px;color:#000;">Audio</span>
<span class="t" style="left:1167px;top:234.69px;font-size:8.2px;color:#000;">Display:</span>
<div style="left:1220px;top:230.7px;width:93px;height:13px;background:linear-gradient(#545454,#383838);border:1px solid #1a1a1a;border-radius:3px 0 0 3px;"></div>
<span class="t" style="left:1225px;top:235.09px;font-size:8.2px;color:#fff;-webkit-text-stroke-width:0;color:#f4f4f4;">Image Editor</span>
<svg style="left:1304px;top:232.2px" width="6" height="10"><path d="M0.5 4 L3 1 L5.5 4 Z M0.5 6 L3 9 L5.5 6 Z" fill="#cfcfcf"/></svg>
<div style="left:1313px;top:230.7px;width:14px;height:13px;background:linear-gradient(#9c9c9c,#868686);border:1px solid #2c2c2c;border-radius:0 3px 3px 0;"></div>
<svg style="left:1315px;top:232px" width="10" height="10"><rect x="1" y="3" width="8" height="6" fill="#eee" stroke="#333" stroke-width="0.5"/><rect x="1" y="1" width="4" height="2" fill="#eee" stroke="#333" stroke-width="0.5"/></svg>
<div style="left:1160px;top:249px;width:170px;height:1px;background:#5e5e5e;"></div>
<div style="left:1160px;top:250px;width:170px;height:1px;background:#7e7e7e;"></div>
<svg style="left:1165px;top:254px" width="7" height="7"><path d="M0.5 1 L6.5 1 L3.5 6 Z" fill="#111"/></svg>
<span class="t" style="left:1174px;top:254.11px;font-size:8.7px;color:#000;">Dimensions</span>
<svg style="left:1318px;top:256px" width="10" height="6"><rect x="1.00" y="2.00" width="1.1" height="1.1" fill="#404040"/><rect x="1.00" y="4.15" width="1.1" height="1.1" fill="#404040"/><rect x="3.05" y="2.00" width="1.1" height="1.1" fill="#404040"/><rect x="3.05" y="4.15" width="1.1" height="1.1" fill="#404040"/><rect x="5.10" y="2.00" width="1.1" height="1.1" fill="#404040"/><rect x="5.10" y="4.15" width="1.1" height="1.1" fill="#404040"/><rect x="7.15" y="2.00" width="1.1" height="1.1" fill="#404040"/><rect x="7.15" y="4.15" width="1.1" height="1.1" fill="#404040"/><rect x="1.00" y="1.00" width="1.1" height="1" fill="#b8b8b8"/><rect x="1.00" y="3.15" width="1.1" height="1" fill="#b8b8b8"/><rect x="3.05" y="1.00" width="1.1" height="1" fill="#b8b8b8"/><rect x="3.05" y="3.15" width="1.1" height="1" fill="#b8b8b8"/><rect x="5.10" y="1.00" width="1.1" height="1" fill="#b8b8b8"/><rect x="5.10" y="3.15" width="1.1" height="1" fill="#b8b8b8"/><rect x="7.15" y="1.00" width="1.1" height="1" fill="#b8b8b8"/><rect x="7.15" y="3.15" width="1.1" height="1" fill="#b8b8b8"/></svg>
<div style="left:1162.5px;top:272px;width:137px;height:13.2px;background:linear-gradient(#545454,#383838);border:1px solid #1a1a1a;border-radius:3px 0 0 3px;"></div>
<span class="t" style="left:1167.5px;top:276.49px;font-size:8.2px;color:#fff;-webkit-text-stroke-width:0;color:#f4f4f4;">Render Presets</span>
<svg style="left:1290.5px;top:273.6px" width="6" height="10"><path d="M0.5 4 L3 1 L5.5 4 Z M0.5 6 L3 9 L5.5 6 Z" fill="#cfcfcf"/></svg>
<div style="left:1299.3px;top:272px;width:14px;height:13.2px;background:linear-gradient(#9c9c9c,#868686);border:1px solid #2c2c2c;border-radius:0 0 0 0;"></div>
<svg style="left:1301.3px;top:273.5px" width="10" height="10"><path d="M5 1 V9 M1 5 H9" stroke="#fafafa" stroke-width="1.8"/><path d="M5 1 V9 M1 5 H9" stroke="#555" stroke-width="0.4"/></svg>
<div style="left:1313.3px;top:272px;width:14px;height:13.2px;background:linear-gradient(#9c9c9c,#868686);border:1px solid #2c2c2c;border-radius:0 3px 3px 0;"></div>
<svg style="left:1315.3px;top:273.5px" width="10" height="10"><path d="M1 5 H9" stroke="#fafafa" stroke-width="1.8"/><path d="M1 5 H9" stroke="#555" stroke-width="0.4"/></svg>
<span class="t" style="left:1167px;top:293.69px;font-size:8.2px;color:#000;">Resolution:</span>
<span class="t" style="left:1253.2px;top:293.69px;font-size:8.2px;color:#000;">Frame Range:</span>
<div style="left:1162.5px;top:303.3px;width:79.2px;height:14px;background:linear-gradient(#a4a4a4,#b4b4b4);border:1px solid #3a3a3a;border-radius:7.0px 7.0px 0 0;"></div>
<svg style="left:1165.5px;top:307.3px" width="5" height="6"><path d="M4 0.5 L1 3 L4 5.5 Z" fill="#808080"/></svg>
<svg style="left:1234.7px;top:307.3px" width="5" height="6"><path d="M1 0.5 L4 3 L1 5.5 Z" fill="#808080"/></svg>
<span class="t" style="left:1172.5px;top:307.49px;font-size:8.2px;color:#000;">X:</span>
<span class="t" style="right:100.29999999999995px;top:307.49px;font-size:8.2px;color:#000;">1920 px</span>
<div style="left:1162.5px;top:317.2px;width:79.2px;height:13.9px;background:linear-gradient(#a4a4a4,#b4b4b4);border:1px solid #3a3a3a;border-radius:0 0 0 0;"></div>
<svg style="left:1165.5px;top:321.15px" width="5" height="6"><path d="M4 0.5 L1 3 L4 5.5 Z" fill="#808080"/></svg>
<svg style="left:1234.7px;top:321.15px" width="5" height="6"><path d="M1 0.5 L4 3 L1 5.5 Z" fill="#808080"/></svg>
<span class="t" style="left:1172.5px;top:321.34px;font-size:8.2px;color:#000;">Y:</span>
<span class="t" style="right:100.29999999999995px;top:321.34px;font-size:8.2px;color:#000;">1080 px</span>
<div style="left:1162.5px;top:331px;width:79.2px;height:13.3px;background:linear-gradient(#a8a8a8,#b8b8b8);border:1px solid #3a3a3a;border-radius:0 0 6px 6px;"></div>
<div style="left:1163.5px;top:332px;width:41.5px;height:11.3px;background:linear-gradient(#7e7e7e,#8c8c8c);border-radius:0 0 0 5px;"></div>
<span class="t" style="right:100px;top:334.99px;font-size:8.2px;color:#000;">50%</span>
<div style="left:1247.7px;top:303.3px;width:79.3px;height:14px;background:linear-gradient(#a4a4a4,#b4b4b4);border:1px solid #3a3a3a;border-radius:7.0px 7.0px 0 0;"></div>
<svg style="left:1250.7px;top:307.3px" width="5" height="6"><path d="M4 0.5 L1 3 L4 5.5 Z" fill="#808080"/></svg>
<svg style="left:1320.0px;top:307.3px" width="5" height="6"><path d="M1 0.5 L4 3 L1 5.5 Z" fill="#808080"/></svg>
<span class="t" style="left:1257.7px;top:307.49px;font-size:8.2px;color:#000;">Start Frame:</span>
<span class="t" style="right:15.0px;top:307.49px;font-size:8.2px;color:#000;">1</span>
<div style="left:1247.7px;top:317.2px;width:79.3px;height:13.9px;background:linear-gradient(#a4a4a4,#b4b4b4);border:1px solid #3a3a3a;border-radius:0 0 0 0;"></div>
<svg style="left:1250.7px;top:321.15px" width="5" height="6"><path d="M4 0.5 L1 3 L4 5.5 Z" fill="#808080"/></svg>
<svg style="left:1320.0px;top:321.15px" width="5" height="6"><path d="M1 0.5 L4 3 L1 5.5 Z" fill="#808080"/></svg>
<span class="t" style="left:1257.7px;top:321.34px;font-size:8.2px;color:#000;">End Frame:</span>
<span class="t" style="right:15.0px;top:321.34px;font-size:8.2px;color:#000;">250</span>
<div style="left:1247.7px;top:331px;width:79.3px;height:13.3px;background:linear-gradient(#a4a4a4,#b4b4b4);border:1px solid #3a3a3a;border-radius:0 0 6.65px 6.65px;"></div>
<svg style="left:1250.7px;top:334.65px" width="5" height="6"><path d="M4 0.5 L1 3 L4 5.5 Z" fill="#808080"/></svg>
<svg style="left:1320.0px;top:334.65px" width="5" height="6"><path d="M1 0.5 L4 3 L1 5.5 Z" fill="#808080"/></svg>
<span class="t" style="left:1257.7px;top:334.84px;font-size:8.2px;color:#000;">Frame Step:</span>
<span class="t" style="right:15.0px;top:334.84px;font-size:8.2px;color:#000;">1</span>
<span class="t" style="left:1167px;top:349.19px;font-size:8.2px;color:#000;">Aspect Ratio:</span>
<span class="t" style="left:1253.2px;top:349.19px;font-size:8.2px;color:#000;">Frame Rate:</span>
<div style="left:1162.5px;top:359.2px;width:79.2px;height:13.2px;background:linear-gradient(#a4a4a4,#b4b4b4);border:1px solid #3a3a3a;border-radius:6.6px 6.6px 0 0;"></div>
<svg style="left:1165.5px;top:362.8px" width="5" height="6"><path d="M4 0.5 L1 3 L4 5.5 Z" fill="#808080"/></svg>
<svg style="left:1234.7px;top:362.8px" width="5" height="6"><path d="M1 0.5 L4 3 L1 5.5 Z" fill="#808080"/></svg>
<span class="t" style="left:1172.5px;top:362.99px;font-size:8.2px;color:#000;">X:</span>
<span class="t" style="right:100.29999999999995px;top:362.99px;font-size:8.2px;color:#000;">1.000</span>
<div style="left:1162.5px;top:372.4px;width:79.2px;height:13.2px;background:linear-gradient(#a4a4a4,#b4b4b4);border:1px solid #3a3a3a;border-radius:0 0 6.6px 6.6px;"></div>
<svg style="left:1165.5px;top:376.0px" width="5" height="6"><path d="M4 0.5 L1 3 L4 5.5 Z" fill="#808080"/></svg>
<svg style="left:1234.7px;top:376.0px" width="5" height="6"><path d="M1 0.5 L4 3 L1 5.5 Z" fill="#808080"/></svg>
<span class="t" style="left:1172.5px;top:376.19px;font-size:8.2px;color:#000;">Y:</span>
<span class="t" style="right:100.29999999999995px;top:376.19px;font-size:8.2px;color:#000;">1.000</span>
<div style="left:1247.7px;top:358.7px;width:79.3px;height:13.3px;background:linear-gradient(#545454,#383838);border:1px solid #1a1a1a;border-radius:3px 3px 3px 3px;"></div>
<span class="t" style="left:1252.7px;top:363.24px;font-size:8.2px;color:#fff;-webkit-text-stroke-width:0;color:#f4f4f4;">24 fps</span>
<svg style="left:1318.0px;top:360.34999999999997px" width="6" height="10"><path d="M0.5 4 L3 1 L5.5 4 Z M0.5 6 L3 9 L5.5 6 Z" fill="#cfcfcf"/></svg>
<span class="t" style="left:1253.2px;top:376.99px;font-size:8.2px;color:#000;">Time Remapping:</span>
<div style="left:1247.7px;top:387.3px;width:39.6px;height:12.7px;background:linear-gradient(#a4a4a4,#b4b4b4);border:1px solid #3a3a3a;border-radius:6.35px 0 0 6.35px;"></div>
<svg style="left:1250.7px;top:390.65000000000003px" width="5" height="6"><path d="M4 0.5 L1 3 L4 5.5 Z" fill="#808080"/></svg>
<svg style="left:1280.3px;top:390.65000000000003px" width="5" height="6"><path d="M1 0.5 L4 3 L1 5.5 Z" fill="#808080"/></svg>
<span class="t" style="right:54.700000000000045px;top:390.84px;font-size:8.2px;color:#000;">:100</span>
<div style="left:1287.3px;top:387.3px;width:39.7px;height:12.7px;background:linear-gradient(#a4a4a4,#b4b4b4);border:1px solid #3a3a3a;border-radius:0 6.35px 6.35px 0;"></div>
<svg style="left:1290.3px;top:390.65000000000003px" width="5" height="6"><path d="M4 0.5 L1 3 L4 5.5 Z" fill="#808080"/></svg>
<svg style="left:1320.0px;top:390.65000000000003px" width="5" height="6"><path d="M1 0.5 L4 3 L1 5.5 Z" fill="#808080"/></svg>
<span class="t" style="right:15.0px;top:390.84px;font-size:8.2px;color:#000;">: 100</span>
<div style="left:1164.4px;top:390.4px;width:10px;height:10px;background:linear-gradient(#545454,#3c3c3c);border:1px solid #2a2a2a;border-radius:2px;"></div>
<span class="t" style="left:1179px;top:392.39px;font-size:8.2px;color:#000;">Bord</span>
<div style="left:1207px;top:390.4px;width:10px;height:10px;background:linear-gradient(#545454,#3c3c3c);border:1px solid #2a2a2a;border-radius:2px;opacity:0.5;"></div>
<span class="t" style="left:1222px;top:392.39px;font-size:8.2px;color:#4a4a4a;">Crop</span>
<div style="left:1160px;top:405.5px;width:170px;height:1px;background:#5e5e5e;"></div>
<div style="left:1160px;top:406.5px;width:170px;height:1px;background:#7e7e7e;"></div>
<svg style="left:1165px;top:411px" width="7" height="7"><path d="M0.5 1 L6.5 1 L3.5 6 Z" fill="#111"/></svg>
<div style="left:1174.5px;top:410px;width:10px;height:10px;background:linear-gradient(#545454,#3c3c3c);border:1px solid #2a2a2a;border-radius:2px;"></div>
<svg style="left:1174.5px;top:408px" width="11" height="12"><path d="M2 6.5 L4.5 9 L9.5 2.5" stroke="#f4f4f4" stroke-width="1.4" fill="none"/></svg>
<span class="t" style="left:1188.5px;top:411.11px;font-size:8.7px;color:#000;">Anti-Aliasing</span>
<svg style="left:1318px;top:413px" width="10" height="6"><rect x="1.00" y="2.00" width="1.1" height="1.1" fill="#404040"/><rect x="1.00" y="4.15" width="1.1" height="1.1" fill="#404040"/><rect x="3.05" y="2.00" width="1.1" height="1.1" fill="#404040"/><rect x="3.05" y="4.15" width="1.1" height="1.1" fill="#404040"/><rect x="5.10" y="2.00" width="1.1" height="1.1" fill="#404040"/><rect x="5.10" y="4.15" width="1.1" height="1.1" fill="#404040"/><rect x="7.15" y="2.00" width="1.1" height="1.1" fill="#404040"/><rect x="7.15" y="4.15" width="1.1" height="1.1" fill="#404040"/><rect x="1.00" y="1.00" width="1.1" height="1" fill="#b8b8b8"/><rect x="1.00" y="3.15" width="1.1" height="1" fill="#b8b8b8"/><rect x="3.05" y="1.00" width="1.1" height="1" fill="#b8b8b8"/><rect x="3.05" y="3.15" width="1.1" height="1" fill="#b8b8b8"/><rect x="5.10" y="1.00" width="1.1" height="1" fill="#b8b8b8"/><rect x="5.10" y="3.15" width="1.1" height="1" fill="#b8b8b8"/><rect x="7.15" y="1.00" width="1.1" height="1" fill="#b8b8b8"/><rect x="7.15" y="3.15" width="1.1" height="1" fill="#b8b8b8"/></svg>
<div style="left:1162.5px;top:429.3px;width:18.700000000000045px;height:13.4px;background:linear-gradient(#535353,#3a3a3a);border:1px solid #1e1e1e;border-radius:3px 0 0 3px;"></div>
<span class="t" style="left:1162.5px;width:18.700000000000045px;text-align:center;top:433.19px;font-size:8.2px;color:#fff;-webkit-text-stroke-width:0;color:#f4f4f4;">5</span>
<div style="left:1181.2px;top:429.3px;width:19.200000000000045px;height:13.4px;background:linear-gradient(#6a92d4,#4d78bd);border:1px solid #1e1e1e;border-left:none;border-radius:0 0 0 0;"></div>
<span class="t" style="left:1181.2px;width:19.200000000000045px;text-align:center;top:433.19px;font-size:8.2px;color:#000;">8</span>
<div style="left:1200.4px;top:429.3px;width:19.899999999999864px;height:13.4px;background:linear-gradient(#535353,#3a3a3a);border:1px solid #1e1e1e;border-left:none;border-radius:0 0 0 0;"></div>
<span class="t" style="left:1200.4px;width:19.899999999999864px;text-align:center;top:433.19px;font-size:8.2px;color:#fff;-webkit-text-stroke-width:0;color:#f4f4f4;">11</span>
<div style="left:1220.3px;top:429.3px;width:21.40000000000009px;height:13.4px;background:linear-gradient(#535353,#3a3a3a);border:1px solid #1e1e1e;border-left:none;border-radius:0 3px 3px 0;"></div>
<span class="t" style="left:1220.3px;width:21.40000000000009px;text-align:center;top:433.19px;font-size:8.2px;color:#fff;-webkit-text-stroke-width:0;color:#f4f4f4;">16</span>
<div style="left:1247.7px;top:429.3px;width:79.3px;height:13.4px;background:linear-gradient(#545454,#383838);border:1px solid #1a1a1a;border-radius:3px 3px 3px 3px;"></div>
<span class="t" style="left:1252.7px;top:433.89px;font-size:8.2px;color:#fff;-webkit-text-stroke-width:0;color:#f4f4f4;">Mitchell-Netravali</span>
<svg style="left:1318.0px;top:431.0px" width="6" height="10"><path d="M0.5 4 L3 1 L5.5 4 Z M0.5 6 L3 9 L5.5 6 Z" fill="#cfcfcf"/></svg>
<div style="left:1164.4px;top:446.5px;width:10px;height:10px;background:linear-gradient(#545454,#3c3c3c);border:1px solid #2a2a2a;border-radius:2px;"></div>
<span class="t" style="left:1179px;top:448.79px;font-size:8.2px;color:#000;">Full Sample</span>
<div style="left:1247.7px;top:445.6px;width:79.3px;height:13px;background:linear-gradient(#a4a4a4,#b4b4b4);border:1px solid #3a3a3a;border-radius:6.5px 6.5px 6.5px 6.5px;"></div>
<svg style="left:1250.7px;top:449.1px" width="5" height="6"><path d="M4 0.5 L1 3 L4 5.5 Z" fill="#808080"/></svg>
<svg style="left:1320.0px;top:449.1px" width="5" height="6"><path d="M1 0.5 L4 3 L1 5.5 Z" fill="#808080"/></svg>
<span class="t" style="left:1257.7px;top:449.29px;font-size:8.2px;color:#000;">Size:</span>
<span class="t" style="right:15.0px;top:449.29px;font-size:8.2px;color:#000;">1.000 px</span>
<div style="left:1160px;top:463px;width:170px;height:1px;background:#5e5e5e;"></div>
<div style="left:1160px;top:464px;width:170px;height:1px;background:#7e7e7e;"></div>
<svg style="left:1165px;top:468.8px" width="7" height="7"><path d="M1 0.5 L6 3.5 L1 6.5 Z" fill="#111"/></svg>
<div style="left:1174.5px;top:467.8px;width:10px;height:10px;background:linear-gradient(#545454,#3c3c3c);border:1px solid #2a2a2a;border-radius:2px;"></div>
<span class="t" style="left:1188.5px;top:468.91px;font-size:8.7px;color:#000;">Sampled Motion Blur</span>
<svg style="left:1318px;top:470.8px" width="10" height="6"><rect x="1.00" y="2.00" width="1.1" height="1.1" fill="#404040"/><rect x="1.00" y="4.15" width="1.1" height="1.1" fill="#404040"/><rect x="3.05" y="2.00" width="1.1" height="1.1" fill="#404040"/><rect x="3.05" y="4.15" width="1.1" height="1.1" fill="#404040"/><rect x="5.10" y="2.00" width="1.1" height="1.1" fill="#404040"/><rect x="5.10" y="4.15" width="1.1" height="1.1" fill="#404040"/><rect x="7.15" y="2.00" width="1.1" height="1.1" fill="#404040"/><rect x="7.15" y="4.15" width="1.1" height="1.1" fill="#404040"/><rect x="1.00" y="1.00" width="1.1" height="1" fill="#b8b8b8"/><rect x="1.00" y="3.15" width="1.1" height="1" fill="#b8b8b8"/><rect x="3.05" y="1.00" width="1.1" height="1" fill="#b8b8b8"/><rect x="3.05" y="3.15" width="1.1" height="1" fill="#b8b8b8"/><rect x="5.10" y="1.00" width="1.1" height="1" fill="#b8b8b8"/><rect x="5.10" y="3.15" width="1.1" height="1" fill="#b8b8b8"/><rect x="7.15" y="1.00" width="1.1" height="1" fill="#b8b8b8"/><rect x="7.15" y="3.15" width="1.1" height="1" fill="#b8b8b8"/></svg>
<div style="left:1160px;top:479.8px;width:170px;height:1px;background:#5e5e5e;"></div>
<div style="left:1160px;top:480.8px;width:170px;height:1px;background:#7e7e7e;"></div>
<svg style="left:1165px;top:485.1px" width="7" height="7"><path d="M1 0.5 L6 3.5 L1 6.5 Z" fill="#111"/></svg>
<span class="t" style="left:1174px;top:485.21px;font-size:8.7px;color:#000;">Shading</span>
<svg style="left:1318px;top:487.1px" width="10" height="6"><rect x="1.00" y="2.00" width="1.1" height="1.1" fill="#404040"/><rect x="1.00" y="4.15" width="1.1" height="1.1" fill="#404040"/><rect x="3.05" y="2.00" width="1.1" height="1.1" fill="#404040"/><rect x="3.05" y="4.15" width="1.1" height="1.1" fill="#404040"/><rect x="5.10" y="2.00" width="1.1" height="1.1" fill="#404040"/><rect x="5.10" y="4.15" width="1.1" height="1.1" fill="#404040"/><rect x="7.15" y="2.00" width="1.1" height="1.1" fill="#404040"/><rect x="7.15" y="4.15" width="1.1" height="1.1" fill="#404040"/><rect x="1.00" y="1.00" width="1.1" height="1" fill="#b8b8b8"/><rect x="1.00" y="3.15" width="1.1" height="1" fill="#b8b8b8"/><rect x="3.05" y="1.00" width="1.1" height="1" fill="#b8b8b8"/><rect x="3.05" y="3.15" width="1.1" height="1" fill="#b8b8b8"/><rect x="5.10" y="1.00" width="1.1" height="1" fill="#b8b8b8"/><rect x="5.10" y="3.15" width="1.1" height="1" fill="#b8b8b8"/><rect x="7.15" y="1.00" width="1.1" height="1" fill="#b8b8b8"/><rect x="7.15" y="3.15" width="1.1" height="1" fill="#b8b8b8"/></svg>
<div style="left:1160px;top:496.2px;width:170px;height:1px;background:#5e5e5e;"></div>
<div style="left:1160px;top:497.2px;width:170px;height:1px;background:#7e7e7e;"></div>
<svg style="left:1165px;top:501.7px" width="7" height="7"><path d="M1 0.5 L6 3.5 L1 6.5 Z" fill="#111"/></svg>
<span class="t" style="left:1174px;top:501.81px;font-size:8.7px;color:#000;">Performance</span>
<svg style="left:1318px;top:503.7px" width="10" height="6"><rect x="1.00" y="2.00" width="1.1" height="1.1" fill="#404040"/><rect x="1.00" y="4.15" width="1.1" height="1.1" fill="#404040"/><rect x="3.05" y="2.00" width="1.1" height="1.1" fill="#404040"/><rect x="3.05" y="4.15" width="1.1" height="1.1" fill="#404040"/><rect x="5.10" y="2.00" width="1.1" height="1.1" fill="#404040"/><rect x="5.10" y="4.15" width="1.1" height="1.1" fill="#404040"/><rect x="7.15" y="2.00" width="1.1" height="1.1" fill="#404040"/><rect x="7.15" y="4.15" width="1.1" height="1.1" fill="#404040"/><rect x="1.00" y="1.00" width="1.1" height="1" fill="#b8b8b8"/><rect x="1.00" y="3.15" width="1.1" height="1" fill="#b8b8b8"/><rect x="3.05" y="1.00" width="1.1" height="1" fill="#b8b8b8"/><rect x="3.05" y="3.15" width="1.1" height="1" fill="#b8b8b8"/><rect x="5.10" y="1.00" width="1.1" height="1" fill="#b8b8b8"/><rect x="5.10" y="3.15" width="1.1" height="1" fill="#b8b8b8"/><rect x="7.15" y="1.00" width="1.1" height="1" fill="#b8b8b8"/><rect x="7.15" y="3.15" width="1.1" height="1" fill="#b8b8b8"/></svg>
<div style="left:1160px;top:513px;width:170px;height:1px;background:#5e5e5e;"></div>
<div style="left:1160px;top:514px;width:170px;height:1px;background:#7e7e7e;"></div>
<svg style="left:1165px;top:518.5px" width="7" height="7"><path d="M1 0.5 L6 3.5 L1 6.5 Z" fill="#111"/></svg>
<span class="t" style="left:1174px;top:518.62px;font-size:8.7px;color:#000;">Post Processing</span>
<svg style="left:1318px;top:520.5px" width="10" height="6"><rect x="1.00" y="2.00" width="1.1" height="1.1" fill="#404040"/><rect x="1.00" y="4.15" width="1.1" height="1.1" fill="#404040"/><rect x="3.05" y="2.00" width="1.1" height="1.1" fill="#404040"/><rect x="3.05" y="4.15" width="1.1" height="1.1" fill="#404040"/><rect x="5.10" y="2.00" width="1.1" height="1.1" fill="#404040"/><rect x="5.10" y="4.15" width="1.1" height="1.1" fill="#404040"/><rect x="7.15" y="2.00" width="1.1" height="1.1" fill="#404040"/><rect x="7.15" y="4.15" width="1.1" height="1.1" fill="#404040"/><rect x="1.00" y="1.00" width="1.1" height="1" fill="#b8b8b8"/><rect x="1.00" y="3.15" width="1.1" height="1" fill="#b8b8b8"/><rect x="3.05" y="1.00" width="1.1" height="1" fill="#b8b8b8"/><rect x="3.05" y="3.15" width="1.1" height="1" fill="#b8b8b8"/><rect x="5.10" y="1.00" width="1.1" height="1" fill="#b8b8b8"/><rect x="5.10" y="3.15" width="1.1" height="1" fill="#b8b8b8"/><rect x="7.15" y="1.00" width="1.1" height="1" fill="#b8b8b8"/><rect x="7.15" y="3.15" width="1.1" height="1" fill="#b8b8b8"/></svg>
<div style="left:1160px;top:529.6px;width:170px;height:1px;background:#5e5e5e;"></div>
<div style="left:1160px;top:530.6px;width:170px;height:1px;background:#7e7e7e;"></div>
<svg style="left:1165px;top:535.3px" width="7" height="7"><path d="M1 0.5 L6 3.5 L1 6.5 Z" fill="#111"/></svg>
<span class="t" style="left:1174px;top:535.42px;font-size:8.7px;color:#000;">Metadata</span>
<svg style="left:1318px;top:537.3px" width="10" height="6"><rect x="1.00" y="2.00" width="1.1" height="1.1" fill="#404040"/><rect x="1.00" y="4.15" width="1.1" height="1.1" fill="#404040"/><rect x="3.05" y="2.00" width="1.1" height="1.1" fill="#404040"/><rect x="3.05" y="4.15" width="1.1" height="1.1" fill="#404040"/><rect x="5.10" y="2.00" width="1.1" height="1.1" fill="#404040"/><rect x="5.10" y="4.15" width="1.1" height="1.1" fill="#404040"/><rect x="7.15" y="2.00" width="1.1" height="1.1" fill="#404040"/><rect x="7.15" y="4.15" width="1.1" height="1.1" fill="#404040"/><rect x="1.00" y="1.00" width="1.1" height="1" fill="#b8b8b8"/><rect x="1.00" y="3.15" width="1.1" height="1" fill="#b8b8b8"/><rect x="3.05" y="1.00" width="1.1" height="1" fill="#b8b8b8"/><rect x="3.05" y="3.15" width="1.1" height="1" fill="#b8b8b8"/><rect x="5.10" y="1.00" width="1.1" height="1" fill="#b8b8b8"/><rect x="5.10" y="3.15" width="1.1" height="1" fill="#b8b8b8"/><rect x="7.15" y="1.00" width="1.1" height="1" fill="#b8b8b8"/><rect x="7.15" y="3.15" width="1.1" height="1" fill="#b8b8b8"/></svg>
<div style="left:1160px;top:546.6px;width:170px;height:1px;background:#5e5e5e;"></div>
<div style="left:1160px;top:547.6px;width:170px;height:1px;background:#7e7e7e;"></div>
<svg style="left:1165px;top:551.6px" width="7" height="7"><path d="M0.5 1 L6.5 1 L3.5 6 Z" fill="#111"/></svg>
<span class="t" style="left:1174px;top:551.72px;font-size:8.7px;color:#000;">Output</span>
<svg style="left:1318px;top:553.6px" width="10" height="6"><rect x="1.00" y="2.00" width="1.1" height="1.1" fill="#404040"/><rect x="1.00" y="4.15" width="1.1" height="1.1" fill="#404040"/><rect x="3.05" y="2.00" width="1.1" height="1.1" fill="#404040"/><rect x="3.05" y="4.15" width="1.1" height="1.1" fill="#404040"/><rect x="5.10" y="2.00" width="1.1" height="1.1" fill="#404040"/><rect x="5.10" y="4.15" width="1.1" height="1.1" fill="#404040"/><rect x="7.15" y="2.00" width="1.1" height="1.1" fill="#404040"/><rect x="7.15" y="4.15" width="1.1" height="1.1" fill="#404040"/><rect x="1.00" y="1.00" width="1.1" height="1" fill="#b8b8b8"/><rect x="1.00" y="3.15" width="1.1" height="1" fill="#b8b8b8"/><rect x="3.05" y="1.00" width="1.1" height="1" fill="#b8b8b8"/><rect x="3.05" y="3.15" width="1.1" height="1" fill="#b8b8b8"/><rect x="5.10" y="1.00" width="1.1" height="1" fill="#b8b8b8"/><rect x="5.10" y="3.15" width="1.1" height="1" fill="#b8b8b8"/><rect x="7.15" y="1.00" width="1.1" height="1" fill="#b8b8b8"/><rect x="7.15" y="3.15" width="1.1" height="1" fill="#b8b8b8"/></svg>
<div style="left:1162.5px;top:570px;width:151px;height:12.7px;background:linear-gradient(#a0a0a0,#b0b0b0);border:1px solid #3a3a3a;border-radius:3px 0 0 3px;"></div>
<span class="t" style="left:1167px;top:573.69px;font-size:8.2px;color:#000;">/tmp/</span>
<div style="left:1313px;top:570px;width:14px;height:12.7px;background:linear-gradient(#9c9c9c,#868686);border:1px solid #2c2c2c;border-radius:0 3px 3px 0;"></div>
<svg style="left:1315px;top:571px" width="10" height="10"><rect x="1" y="3" width="8" height="6" fill="#e8d898" stroke="#333" stroke-width="0.5"/><rect x="1" y="1.5" width="4" height="2" fill="#e8d898" stroke="#333" stroke-width="0.5"/></svg>
<div style="left:1164.4px;top:589px;width:10px;height:10px;background:linear-gradient(#545454,#3c3c3c);border:1px solid #2a2a2a;border-radius:2px;"></div>
<span class="t" style="left:1179px;top:591.39px;font-size:8.2px;color:#fff;-webkit-text-stroke-width:0;color:#f4f4f4;">Overwrite</span>
<div style="left:1250.3px;top:589px;width:10px;height:10px;background:linear-gradient(#545454,#3c3c3c);border:1px solid #2a2a2a;border-radius:2px;"></div>
<svg style="left:1250.3px;top:587px" width="11" height="12"><path d="M2 6.5 L4.5 9 L9.5 2.5" stroke="#f4f4f4" stroke-width="1.4" fill="none"/></svg>
<span class="t" style="left:1265px;top:591.39px;font-size:8.2px;color:#fff;-webkit-text-stroke-width:0;color:#f4f4f4;">File Extensions</span>
<svg style="left:1164.4px;top:587px" width="11" height="12"><path d="M2 6.5 L4.5 9 L9.5 2.5" stroke="#f4f4f4" stroke-width="1.4" fill="none"/></svg>
<div style="left:1164.4px;top:604px;width:10px;height:10px;background:linear-gradient(#545454,#3c3c3c);border:1px solid #2a2a2a;border-radius:2px;"></div>
<span class="t" style="left:1179px;top:606.39px;font-size:8.2px;color:#000;">Placeholders</span>
<div style="left:1250.3px;top:604px;width:10px;height:10px;background:linear-gradient(#545454,#3c3c3c);border:1px solid #2a2a2a;border-radius:2px;"></div>
<span class="t" style="left:1265px;top:606.39px;font-size:8.2px;color:#000;">Cache Result</span>
<div style="left:1162.5px;top:619.6px;width:79.2px;height:12.8px;background:linear-gradient(#545454,#383838);border:1px solid #1a1a1a;border-radius:3px 3px 3px 3px;"></div>
<span class="t" style="left:1178px;top:623.89px;font-size:8.2px;color:#fff;-webkit-text-stroke-width:0;color:#f4f4f4;">PNG</span>
<svg style="left:1232.7px;top:621.0px" width="6" height="10"><path d="M0.5 4 L3 1 L5.5 4 Z M0.5 6 L3 9 L5.5 6 Z" fill="#cfcfcf"/></svg>
<svg style="left:1164.5px;top:620.5px" width="11" height="11"><rect x="1" y="1" width="8" height="9" fill="#f0e8e0" stroke="#333" stroke-width="0.4"/><rect x="1" y="5" width="8" height="3" fill="#c87040"/><rect x="1" y="8" width="8" height="2" fill="#3a6ac0"/></svg>
<div style="left:1247.7px;top:619.6px;width:25.899999999999864px;height:12.8px;background:linear-gradient(#535353,#3a3a3a);border:1px solid #1e1e1e;border-radius:3px 0 0 3px;"></div>
<span class="t" style="left:1247.7px;width:25.899999999999864px;text-align:center;top:623.19px;font-size:8.2px;color:#fff;-webkit-text-stroke-width:0;color:#f4f4f4;">BW</span>
<div style="left:1273.6px;top:619.6px;width:25.700000000000045px;height:12.8px;background:linear-gradient(#535353,#3a3a3a);border:1px solid #1e1e1e;border-left:none;border-radius:0 0 0 0;"></div>
<span class="t" style="left:1273.6px;width:25.700000000000045px;text-align:center;top:623.19px;font-size:8.2px;color:#fff;-webkit-text-stroke-width:0;color:#f4f4f4;">RGB</span>
<div style="left:1299.3px;top:619.6px;width:27.700000000000045px;height:12.8px;background:linear-gradient(#6a92d4,#4d78bd);border:1px solid #1e1e1e;border-left:none;border-radius:0 3px 3px 0;"></div>
<span class="t" style="left:1299.3px;width:27.700000000000045px;text-align:center;top:623.19px;font-size:8.2px;color:#000;">RGBA</span>
<span class="t" style="left:1167px;top:639.19px;font-size:8.2px;color:#000;">Color Depth:</span>
<div style="left:1221px;top:635.6px;width:52.40000000000009px;height:12.5px;background:linear-gradient(#6a92d4,#4d78bd);border:1px solid #1e1e1e;border-radius:3px 0 0 3px;"></div>
<span class="t" style="left:1221px;width:52.40000000000009px;text-align:center;top:639.04px;font-size:8.2px;color:#000;">8</span>
<div style="left:1273.4px;top:635.6px;width:53.59999999999991px;height:12.5px;background:linear-gradient(#535353,#3a3a3a);border:1px solid #1e1e1e;border-left:none;border-radius:0 3px 3px 0;"></div>
<span class="t" style="left:1273.4px;width:53.59999999999991px;text-align:center;top:639.04px;font-size:8.2px;color:#fff;-webkit-text-stroke-width:0;color:#f4f4f4;">16</span>
<div style="left:1162.5px;top:651px;width:164.5px;height:12.6px;background:linear-gradient(#a8a8a8,#bababa);border:1px solid #3a3a3a;border-radius:6.3px;"></div>
<div style="left:1163.5px;top:652px;width:29px;height:10.6px;background:linear-gradient(#7e7e7e,#8c8c8c);border-radius:5.3px 0 0 5.3px;"></div>
<span class="t" style="left:1172px;top:654.49px;font-size:8.2px;color:#000;">Compression:</span>
<span class="t" style="right:16px;top:654.49px;font-size:8.2px;color:#000;">15%</span>
<div style="left:1160px;top:670px;width:170px;height:1px;background:#5e5e5e;"></div>
<div style="left:1160px;top:671px;width:170px;height:1px;background:#7e7e7e;"></div>
<svg style="left:1165px;top:675.6px" width="7" height="7"><path d="M1 0.5 L6 3.5 L1 6.5 Z" fill="#111"/></svg>
<span class="t" style="left:1174px;top:675.72px;font-size:8.7px;color:#000;">Bake</span>
<svg style="left:1318px;top:677.6px" width="10" height="6"><rect x="1.00" y="2.00" width="1.1" height="1.1" fill="#404040"/><rect x="1.00" y="4.15" width="1.1" height="1.1" fill="#404040"/><rect x="3.05" y="2.00" width="1.1" height="1.1" fill="#404040"/><rect x="3.05" y="4.15" width="1.1" height="1.1" fill="#404040"/><rect x="5.10" y="2.00" width="1.1" height="1.1" fill="#404040"/><rect x="5.10" y="4.15" width="1.1" height="1.1" fill="#404040"/><rect x="7.15" y="2.00" width="1.1" height="1.1" fill="#404040"/><rect x="7.15" y="4.15" width="1.1" height="1.1" fill="#404040"/><rect x="1.00" y="1.00" width="1.1" height="1" fill="#b8b8b8"/><rect x="1.00" y="3.15" width="1.1" height="1" fill="#b8b8b8"/><rect x="3.05" y="1.00" width="1.1" height="1" fill="#b8b8b8"/><rect x="3.05" y="3.15" width="1.1" height="1" fill="#b8b8b8"/><rect x="5.10" y="1.00" width="1.1" height="1" fill="#b8b8b8"/><rect x="5.10" y="3.15" width="1.1" height="1" fill="#b8b8b8"/><rect x="7.15" y="1.00" width="1.1" height="1" fill="#b8b8b8"/><rect x="7.15" y="3.15" width="1.1" height="1" fill="#b8b8b8"/></svg>
<div style="left:1160px;top:686.8px;width:170px;height:1px;background:#5e5e5e;"></div>
<div style="left:1160px;top:687.8px;width:170px;height:1px;background:#7e7e7e;"></div>
<svg style="left:1165px;top:692.4px" width="7" height="7"><path d="M1 0.5 L6 3.5 L1 6.5 Z" fill="#111"/></svg>
<div style="left:1174.5px;top:691.4px;width:10px;height:10px;background:linear-gradient(#545454,#3c3c3c);border:1px solid #2a2a2a;border-radius:2px;"></div>
<span class="t" style="left:1188.5px;top:692.52px;font-size:8.7px;color:#000;">Freestyle</span>
<svg style="left:1318px;top:694.4px" width="10" height="6"><rect x="1.00" y="2.00" width="1.1" height="1.1" fill="#404040"/><rect x="1.00" y="4.15" width="1.1" height="1.1" fill="#404040"/><rect x="3.05" y="2.00" width="1.1" height="1.1" fill="#404040"/><rect x="3.05" y="4.15" width="1.1" height="1.1" fill="#404040"/><rect x="5.10" y="2.00" width="1.1" height="1.1" fill="#404040"/><rect x="5.10" y="4.15" width="1.1" height="1.1" fill="#404040"/><rect x="7.15" y="2.00" width="1.1" height="1.1" fill="#404040"/><rect x="7.15" y="4.15" width="1.1" height="1.1" fill="#404040"/><rect x="1.00" y="1.00" width="1.1" height="1" fill="#b8b8b8"/><rect x="1.00" y="3.15" width="1.1" height="1" fill="#b8b8b8"/><rect x="3.05" y="1.00" width="1.1" height="1" fill="#b8b8b8"/><rect x="3.05" y="3.15" width="1.1" height="1" fill="#b8b8b8"/><rect x="5.10" y="1.00" width="1.1" height="1" fill="#b8b8b8"/><rect x="5.10" y="3.15" width="1.1" height="1" fill="#b8b8b8"/><rect x="7.15" y="1.00" width="1.1" height="1" fill="#b8b8b8"/><rect x="7.15" y="3.15" width="1.1" height="1" fill="#b8b8b8"/></svg>
</div>
<div style="left:1157px;top:147px;width:1px;height:603px;background:#3a3a3a;"></div>
<svg style="left:111px;top:19px" width="477" height="633" viewBox="111 19 477 633"><defs><linearGradient id="cone0" x1="0" x2="1"><stop offset="0" stop-color="#8a8a8e"/><stop offset="0.3" stop-color="#a0a0a2"/><stop offset="0.42" stop-color="#b4b4b6"/><stop offset="0.55" stop-color="#9c9ca0"/><stop offset="1" stop-color="#80808a"/></linearGradient><linearGradient id="cyl0" x1="0" x2="1"><stop offset="0" stop-color="#7e7e80"/><stop offset="0.3" stop-color="#8a8a8c"/><stop offset="0.55" stop-color="#747476"/><stop offset="0.9" stop-color="#68686e"/><stop offset="1" stop-color="#7c7c88"/></linearGradient><linearGradient id="cone1" x1="0" x2="1"><stop offset="0" stop-color="#7e7e80"/><stop offset="0.45" stop-color="#aaaaac"/><stop offset="0.6" stop-color="#9a9a9c"/><stop offset="1" stop-color="#78787e"/></linearGradient><linearGradient id="cyl1" x1="0" x2="1"><stop offset="0" stop-color="#6c6c6e"/><stop offset="0.4" stop-color="#828284"/><stop offset="1" stop-color="#6a6a72"/></linearGradient></defs><path d="M208.4 417.2 L265.1 329.5 M208.4 417.2 L437.4 421.0 M222.7 417.4 L274.1 329.6 M213.8 408.8 L434.6 412.5 M237.0 417.7 L283.1 329.8 M218.9 401.0 L432.1 404.5 M251.3 417.9 L292.0 329.9 M223.6 393.6 L429.7 397.1 M265.6 418.1 L301.0 330.1 M228.0 386.8 L427.5 390.1 M279.9 418.4 L310.0 330.2 M232.2 380.4 L425.5 383.6 M294.3 418.6 L319.0 330.4 M236.1 374.4 L423.5 377.5 M308.6 418.9 L328.0 330.5 M239.7 368.7 L421.7 371.7 M322.9 419.1 L337.0 330.7 M243.2 363.3 L419.9 366.3 M337.2 419.3 L346.0 330.8 M246.5 358.3 L418.3 361.1 M351.5 419.6 L355.0 331.0 M249.5 353.5 L416.8 356.3 M365.8 419.8 L364.0 331.1 M252.5 349.0 L415.3 351.7 M380.1 420.1 L373.0 331.3 M255.2 344.7 L413.9 347.3 M394.4 420.3 L382.0 331.4 M257.9 340.6 L412.6 343.1 M408.7 420.5 L391.0 331.6 M260.4 336.7 L411.3 339.2 M423.1 420.8 L400.0 331.7 M262.8 333.0 L410.1 335.4 M437.4 421.0 L409.0 331.9 M265.1 329.5 L409.0 331.9" stroke="#4e4e4e" stroke-width="0.9" fill="none"/><path d="M254 362.5 L407 365.5" stroke="#9a2a2a" stroke-width="1"/><polygon points="270.0,289.0 400.0,289.0 400.0,333.5 271.0,333.5" fill="#727272" /><rect x="270" y="289" width="130" height="1.6" fill="#8a8a8a"/><rect x="270" y="300.6" width="130" height="1.6" fill="#8a8a8a"/><rect x="270" y="311.2" width="130" height="1.6" fill="#8a8a8a"/><rect x="270" y="322.6" width="130" height="1.6" fill="#8a8a8a"/><path d="M258.20 273.50 L258.20 289.50 A10.00 3.00 0 0 0 278.20 289.50 L278.20 273.50 Z" fill="#78787a"/><polygon points="258.20,273.20 258.70,273.76 258.70,290.17 258.20,289.50" fill="#808082"/><polygon points="258.45,273.76 259.44,274.28 259.44,290.80 258.45,290.17" fill="#828283"/><polygon points="259.19,274.28 260.63,274.76 260.63,291.37 259.19,290.80" fill="#858586"/><polygon points="260.38,274.76 262.22,275.15 262.22,291.85 260.38,291.37" fill="#898989"/><polygon points="261.97,275.15 264.11,275.45 264.11,292.20 261.97,291.85" fill="#8a8a8a"/><polygon points="263.86,275.45 266.22,275.64 266.22,292.42 263.86,292.20" fill="#828283"/><polygon points="265.97,275.64 268.45,275.70 268.45,292.50 265.97,292.42" fill="#7a7a7c"/><polygon points="268.20,275.70 270.68,275.64 270.68,292.42 268.20,292.50" fill="#747477"/><polygon points="270.43,275.64 272.79,275.45 272.79,292.20 270.43,292.42" fill="#6e6e72"/><polygon points="272.54,275.45 274.68,275.15 274.68,291.85 272.54,292.20" fill="#6b6b71"/><polygon points="274.43,275.15 276.27,274.76 276.27,291.37 274.43,291.85" fill="#6b6b71"/><polygon points="276.02,274.76 277.46,274.28 277.46,290.80 276.02,291.37" fill="#6b6b73"/><polygon points="277.21,274.28 278.20,273.76 278.20,290.17 277.21,290.80" fill="#74747f"/><polygon points="277.95,273.76 278.45,273.20 278.45,289.50 277.95,290.17" fill="#797985"/><path d="M268.20 255.20 L258.20 273.50 A10.00 2.50 0 0 0 278.20 273.50 Z" fill="#999a9c"/><polygon points="268.20,255.20 258.10,273.50 258.55,274.06" fill="#8c8c90"/><polygon points="268.20,255.20 258.35,274.06 259.29,274.58" fill="#8e8e92"/><polygon points="268.20,255.20 259.09,274.58 260.48,275.06" fill="#929295"/><polygon points="268.20,255.20 260.28,275.06 262.07,275.45" fill="#98989a"/><polygon points="268.20,255.20 261.87,275.45 263.96,275.75" fill="#9e9ea1"/><polygon points="268.20,255.20 263.76,275.75 266.07,275.94" fill="#ababad"/><polygon points="268.20,255.20 265.87,275.94 268.30,276.00" fill="#a8a8aa"/><polygon points="268.20,255.20 268.10,276.00 270.53,275.94" fill="#9c9c9f"/><polygon points="268.20,255.20 270.33,275.94 272.64,275.75" fill="#949499"/><polygon points="268.20,255.20 272.44,275.75 274.53,275.45" fill="#8d8d93"/><polygon points="268.20,255.20 274.33,275.45 276.12,275.06" fill="#87878e"/><polygon points="268.20,255.20 275.92,275.06 277.31,274.58" fill="#82828a"/><polygon points="268.20,255.20 277.11,274.58 278.05,274.06" fill="#7e7e88"/><polygon points="268.20,255.20 277.85,274.06 278.30,273.50" fill="#7c7c86"/><path d="M392.60 272.00 L392.60 288.50 A10.00 3.00 0 0 0 412.60 288.50 L412.60 272.00 Z" fill="#78787a"/><polygon points="392.60,271.70 393.10,272.26 393.10,289.17 392.60,288.50" fill="#808082"/><polygon points="392.85,272.26 393.84,272.78 393.84,289.80 392.85,289.17" fill="#828283"/><polygon points="393.59,272.78 395.03,273.26 395.03,290.37 393.59,289.80" fill="#858586"/><polygon points="394.78,273.26 396.62,273.65 396.62,290.85 394.78,290.37" fill="#898989"/><polygon points="396.37,273.65 398.51,273.95 398.51,291.20 396.37,290.85" fill="#8a8a8a"/><polygon points="398.26,273.95 400.62,274.14 400.62,291.42 398.26,291.20" fill="#828283"/><polygon points="400.37,274.14 402.85,274.20 402.85,291.50 400.37,291.42" fill="#7a7a7c"/><polygon points="402.60,274.20 405.08,274.14 405.08,291.42 402.60,291.50" fill="#747477"/><polygon points="404.83,274.14 407.19,273.95 407.19,291.20 404.83,291.42" fill="#6e6e72"/><polygon points="406.94,273.95 409.08,273.65 409.08,290.85 406.94,291.20" fill="#6b6b71"/><polygon points="408.83,273.65 410.67,273.26 410.67,290.37 408.83,290.85" fill="#6b6b71"/><polygon points="410.42,273.26 411.86,272.78 411.86,289.80 410.42,290.37" fill="#6b6b73"/><polygon points="411.61,272.78 412.60,272.26 412.60,289.17 411.61,289.80" fill="#74747f"/><polygon points="412.35,272.26 412.85,271.70 412.85,288.50 412.35,289.17" fill="#797985"/><path d="M402.60 252.30 L392.60 272.00 A10.00 2.50 0 0 0 412.60 272.00 Z" fill="#999a9c"/><polygon points="402.60,252.30 392.50,272.00 392.95,272.56" fill="#8c8c90"/><polygon points="402.60,252.30 392.75,272.56 393.69,273.08" fill="#8e8e92"/><polygon points="402.60,252.30 393.49,273.08 394.88,273.56" fill="#929295"/><polygon points="402.60,252.30 394.68,273.56 396.47,273.95" fill="#98989a"/><polygon points="402.60,252.30 396.27,273.95 398.36,274.25" fill="#9e9ea1"/><polygon points="402.60,252.30 398.16,274.25 400.47,274.44" fill="#ababad"/><polygon points="402.60,252.30 400.27,274.44 402.70,274.50" fill="#a8a8aa"/><polygon points="402.60,252.30 402.50,274.50 404.93,274.44" fill="#9c9c9f"/><polygon points="402.60,252.30 404.73,274.44 407.04,274.25" fill="#949499"/><polygon points="402.60,252.30 406.84,274.25 408.93,273.95" fill="#8d8d93"/><polygon points="402.60,252.30 408.73,273.95 410.52,273.56" fill="#87878e"/><polygon points="402.60,252.30 410.32,273.56 411.71,273.08" fill="#82828a"/><polygon points="402.60,252.30 411.51,273.08 412.45,272.56" fill="#7e7e88"/><polygon points="402.60,252.30 412.25,272.56 412.70,272.00" fill="#7c7c86"/><polygon points="226.8,321.5 261.0,289.5 271.0,289.5 271.2,298.0 228.0,334.0" fill="#9c9ca4" /><polygon points="228.0,333.5 271.2,297.5 271.2,333.5 226.0,409.5 221.5,352.0" fill="#8e8eaa" /><polygon points="399.5,290.0 417.5,312.0 420.0,411.0 400.0,333.5" fill="#767678" /><polygon points="400.2,291.5 408.0,291.0 417.3,312.5 415.0,330.0" fill="#92929c" /><polygon points="291.5,322.0 369.5,311.5 371.0,341.5 282.0,341.5" fill="#9c9cb4" /><path d="M287.30 263.30 L287.30 326.00 A40.90 13.50 0 0 0 369.10 326.00 L369.10 263.30 Z" fill="#78787a"/><polygon points="287.30,263.00 287.81,263.76 287.81,327.51 287.30,326.00" fill="#808082"/><polygon points="287.56,263.76 288.58,264.51 288.58,329.00 287.56,327.51" fill="#808082"/><polygon points="288.33,264.51 289.85,265.25 289.85,330.46 288.33,329.00" fill="#818183"/><polygon points="289.60,265.25 291.60,265.95 291.60,331.86 289.60,330.46" fill="#828284"/><polygon points="291.35,265.95 293.82,266.62 293.82,333.18 291.35,331.86" fill="#848485"/><polygon points="293.57,266.62 296.47,267.24 296.47,334.42 293.57,333.18" fill="#868687"/><polygon points="296.22,267.24 299.53,267.81 299.53,335.55 296.22,334.42" fill="#888888"/><polygon points="299.28,267.81 302.95,268.32 302.95,336.55 299.28,335.55" fill="#8a8a8a"/><polygon points="302.70,268.32 306.69,268.76 306.69,337.43 302.70,336.55" fill="#8b8b8b"/><polygon points="306.44,268.76 310.70,269.13 310.70,338.16 306.44,337.43" fill="#888888"/><polygon points="310.45,269.13 314.94,269.42 314.94,338.74 310.45,338.16" fill="#848485"/><polygon points="314.69,269.42 319.35,269.63 319.35,339.16 314.69,338.74" fill="#808082"/><polygon points="319.10,269.63 323.87,269.76 323.87,339.42 319.10,339.16" fill="#7c7c7e"/><polygon points="323.62,269.76 328.45,269.80 328.45,339.50 323.62,339.42" fill="#79797b"/><polygon points="328.20,269.80 333.03,269.76 333.03,339.42 328.20,339.50" fill="#767678"/><polygon points="332.78,269.76 337.55,269.63 337.55,339.16 332.78,339.42" fill="#737376"/><polygon points="337.30,269.63 341.96,269.42 341.96,338.74 337.30,339.16" fill="#6f6f73"/><polygon points="341.71,269.42 346.20,269.13 346.20,338.16 341.71,338.74" fill="#6c6c70"/><polygon points="345.95,269.13 350.21,268.76 350.21,337.43 345.95,338.16" fill="#6c6c70"/><polygon points="349.96,268.76 353.95,268.32 353.95,336.55 349.96,337.43" fill="#6b6b71"/><polygon points="353.70,268.32 357.37,267.81 357.37,335.55 353.70,336.55" fill="#6b6b71"/><polygon points="357.12,267.81 360.43,267.24 360.43,334.42 357.12,335.55" fill="#6a6a72"/><polygon points="360.18,267.24 363.08,266.62 363.08,333.18 360.18,334.42" fill="#6a6a72"/><polygon points="362.83,266.62 365.30,265.95 365.30,331.86 362.83,333.18" fill="#6e6e76"/><polygon points="365.05,265.95 367.05,265.25 367.05,330.46 365.05,331.86" fill="#72727c"/><polygon points="366.80,265.25 368.32,264.51 368.32,329.00 366.80,330.46" fill="#767681"/><polygon points="368.07,264.51 369.09,263.76 369.09,327.51 368.07,329.00" fill="#797984"/><polygon points="368.84,263.76 369.35,263.00 369.35,326.00 368.84,327.51" fill="#7a7a86"/><path d="M325.70 172.40 L287.30 263.30 A40.90 6.80 0 0 0 369.10 263.30 Z" fill="#999a9c"/><polygon points="325.70,172.40 287.20,263.30 287.66,264.06" fill="#8c8c90"/><polygon points="325.70,172.40 287.46,264.06 288.43,264.81" fill="#8d8d91"/><polygon points="325.70,172.40 288.23,264.81 289.70,265.55" fill="#8e8e91"/><polygon points="325.70,172.40 289.50,265.55 291.45,266.25" fill="#8f8f93"/><polygon points="325.70,172.40 291.25,266.25 293.67,266.92" fill="#919194"/><polygon points="325.70,172.40 293.47,266.92 296.32,267.54" fill="#939397"/><polygon points="325.70,172.40 296.12,267.54 299.38,268.11" fill="#969699"/><polygon points="325.70,172.40 299.18,268.11 302.80,268.62" fill="#99999c"/><polygon points="325.70,172.40 302.60,268.62 306.54,269.06" fill="#9d9d9f"/><polygon points="325.70,172.40 306.34,269.06 310.55,269.43" fill="#a0a0a2"/><polygon points="325.70,172.40 310.35,269.43 314.79,269.72" fill="#a7a7a9"/><polygon points="325.70,172.40 314.59,269.72 319.20,269.93" fill="#afafb1"/><polygon points="325.70,172.40 319.00,269.93 323.72,270.06" fill="#adadaf"/><polygon points="325.70,172.40 323.52,270.06 328.30,270.10" fill="#a4a4a6"/><polygon points="325.70,172.40 328.10,270.10 332.88,270.06" fill="#9e9ea0"/><polygon points="325.70,172.40 332.68,270.06 337.40,269.93" fill="#9a9a9d"/><polygon points="325.70,172.40 337.20,269.93 341.81,269.72" fill="#96969a"/><polygon points="325.70,172.40 341.61,269.72 346.05,269.43" fill="#929297"/><polygon points="325.70,172.40 345.85,269.43 350.06,269.06" fill="#8f8f94"/><polygon points="325.70,172.40 349.86,269.06 353.80,268.62" fill="#8b8b92"/><polygon points="325.70,172.40 353.60,268.62 357.22,268.11" fill="#88888f"/><polygon points="325.70,172.40 357.02,268.11 360.28,267.54" fill="#85858d"/><polygon points="325.70,172.40 360.08,267.54 362.93,266.92" fill="#83838b"/><polygon points="325.70,172.40 362.73,266.92 365.15,266.25" fill="#808089"/><polygon points="325.70,172.40 364.95,266.25 366.90,265.55" fill="#7f7f88"/><polygon points="325.70,172.40 366.70,265.55 368.17,264.81" fill="#7d7d87"/><polygon points="325.70,172.40 367.97,264.81 368.94,264.06" fill="#7d7d86"/><polygon points="325.70,172.40 368.74,264.06 369.20,263.30" fill="#7c7c86"/><polygon points="282.0,341.5 371.0,341.5 370.0,416.5 288.2,414.4" fill="#858585" /><clipPath id="cubeclip"><polygon points="282,383 371,383 370,416.5 288.2,414.4"/></clipPath><path d="M208.4 417.2 L229.3 384.8 M222.7 417.4 L241.7 385.0 M237.0 417.7 L254.0 385.2 M251.3 417.9 L266.4 385.4 M265.6 418.1 L278.7 385.7 M279.9 418.4 L291.1 385.9 M294.3 418.6 L303.4 386.1 M308.6 418.9 L315.7 386.3 M322.9 419.1 L328.1 386.5 M337.2 419.3 L340.4 386.7 M351.5 419.6 L352.8 386.9 M365.8 419.8 L365.1 387.1 M380.1 420.1 L377.5 387.3 M394.4 420.3 L389.8 387.5 M408.7 420.5 L402.2 387.7 M423.1 420.8 L414.5 387.9 M437.4 421.0 L426.9 388.1 M279.9 418.4 L373.0 419.9 M282.8 409.9 L372.5 411.4 M285.5 402.1 L372.1 403.5 M288.0 394.7 L371.8 396.1 M290.4 387.8 L371.4 389.2" stroke="#6c6c6c" stroke-width="0.9" fill="none" clip-path="url(#cubeclip)"/><path d="M291.5 322 L282 341.5 L288.2 414.4 L370 416.5 L369.5 311.5" stroke="#f0a040" stroke-width="1.1" fill="none"/><rect x="208.7" y="350" width="16.8" height="60" fill="#606060"/><rect x="208.7" y="361.5" width="16.8" height="2.4" fill="#8e8e8e"/><rect x="208.7" y="378.3" width="16.8" height="2.4" fill="#8e8e8e"/><rect x="208.7" y="394.8" width="16.8" height="2.4" fill="#8e8e8e"/><rect x="418.7" y="350" width="14.3" height="60" fill="#606060"/><rect x="418.7" y="361.5" width="14.3" height="2.4" fill="#8e8e8e"/><rect x="418.7" y="378.3" width="14.3" height="2.4" fill="#8e8e8e"/><rect x="418.7" y="394.8" width="14.3" height="2.4" fill="#8e8e8e"/><path d="M196.00 323.50 L196.00 348.50 A15.30 4.50 0 0 0 226.60 348.50 L226.60 323.50 Z" fill="#78787a"/><polygon points="196.00,323.20 196.48,323.89 196.48,349.28 196.00,348.50" fill="#808082"/><polygon points="196.23,323.89 197.17,324.57 197.17,350.04 196.23,349.28" fill="#818183"/><polygon points="196.92,324.57 198.30,325.20 198.30,350.75 196.92,350.04" fill="#838384"/><polygon points="198.05,325.20 199.83,325.77 199.83,351.39 198.05,350.75" fill="#858587"/><polygon points="199.58,325.77 201.72,326.26 201.72,351.95 199.58,351.39" fill="#898989"/><polygon points="201.47,326.26 203.90,326.66 203.90,352.40 201.47,351.95" fill="#8b8b8b"/><polygon points="203.65,326.66 206.32,326.96 206.32,352.73 203.65,352.40" fill="#868686"/><polygon points="206.07,326.96 208.89,327.14 208.89,352.93 206.07,352.73" fill="#808081"/><polygon points="208.64,327.14 211.55,327.20 211.55,353.00 208.64,352.93" fill="#7a7a7c"/><polygon points="211.30,327.20 214.21,327.14 214.21,352.93 211.30,353.00" fill="#757578"/><polygon points="213.96,327.14 216.78,326.96 216.78,352.73 213.96,352.93" fill="#707073"/><polygon points="216.53,326.96 219.20,326.66 219.20,352.40 216.53,352.73" fill="#6c6c70"/><polygon points="218.95,326.66 221.38,326.26 221.38,351.95 218.95,352.40" fill="#6b6b71"/><polygon points="221.13,326.26 223.27,325.77 223.27,351.39 221.13,351.95" fill="#6b6b71"/><polygon points="223.02,325.77 224.80,325.20 224.80,350.75 223.02,351.39" fill="#6a6a72"/><polygon points="224.55,325.20 225.93,324.57 225.93,350.04 224.55,350.75" fill="#71717a"/><polygon points="225.68,324.57 226.62,323.89 226.62,349.28 225.68,350.04" fill="#777782"/><polygon points="226.37,323.89 226.85,323.20 226.85,348.50 226.37,349.28" fill="#7a7a86"/><path d="M206.40 294.80 L196.00 323.50 A15.30 4.00 0 0 0 226.60 323.50 Z" fill="#999a9c"/><polygon points="206.40,294.80 195.90,323.50 196.33,324.19" fill="#8c8c90"/><polygon points="206.40,294.80 196.13,324.19 197.02,324.87" fill="#8d8d91"/><polygon points="206.40,294.80 196.82,324.87 198.15,325.50" fill="#909093"/><polygon points="206.40,294.80 197.95,325.50 199.68,326.07" fill="#939396"/><polygon points="206.40,294.80 199.48,326.07 201.57,326.56" fill="#98989a"/><polygon points="206.40,294.80 201.37,326.56 203.75,326.96" fill="#9d9d9f"/><polygon points="206.40,294.80 203.55,326.96 206.17,327.26" fill="#a3a3a5"/><polygon points="206.40,294.80 205.97,327.26 208.74,327.44" fill="#b0b0b2"/><polygon points="206.40,294.80 208.54,327.44 211.40,327.50" fill="#a7a7a9"/><polygon points="206.40,294.80 211.20,327.50 214.06,327.44" fill="#9d9da0"/><polygon points="206.40,294.80 213.86,327.44 216.63,327.26" fill="#97979b"/><polygon points="206.40,294.80 216.43,327.26 219.05,326.96" fill="#919196"/><polygon points="206.40,294.80 218.85,326.96 221.23,326.56" fill="#8b8b92"/><polygon points="206.40,294.80 221.03,326.56 223.12,326.07" fill="#87878e"/><polygon points="206.40,294.80 222.92,326.07 224.65,325.50" fill="#83838b"/><polygon points="206.40,294.80 224.45,325.50 225.78,324.87" fill="#7f7f89"/><polygon points="206.40,294.80 225.58,324.87 226.47,324.19" fill="#7d7d87"/><polygon points="206.40,294.80 226.27,324.19 226.70,323.50" fill="#7c7c86"/><path d="M415.30 318.00 L415.30 346.00 A15.00 4.50 0 0 0 445.30 346.00 L445.30 318.00 Z" fill="#78787a"/><polygon points="415.30,317.70 415.78,318.39 415.78,346.78 415.30,346.00" fill="#808082"/><polygon points="415.53,318.39 416.45,319.07 416.45,347.54 415.53,346.78" fill="#818183"/><polygon points="416.20,319.07 417.56,319.70 417.56,348.25 416.20,347.54" fill="#838384"/><polygon points="417.31,319.70 419.06,320.27 419.06,348.89 417.31,348.25" fill="#858587"/><polygon points="418.81,320.27 420.91,320.76 420.91,349.45 418.81,348.89" fill="#898989"/><polygon points="420.66,320.76 423.05,321.16 423.05,349.90 420.66,349.45" fill="#8b8b8b"/><polygon points="422.80,321.16 425.42,321.46 425.42,350.23 422.80,349.90" fill="#868686"/><polygon points="425.17,321.46 427.95,321.64 427.95,350.43 425.17,350.23" fill="#808081"/><polygon points="427.70,321.64 430.55,321.70 430.55,350.50 427.70,350.43" fill="#7a7a7c"/><polygon points="430.30,321.70 433.15,321.64 433.15,350.43 430.30,350.50" fill="#757578"/><polygon points="432.90,321.64 435.68,321.46 435.68,350.23 432.90,350.43" fill="#707073"/><polygon points="435.43,321.46 438.05,321.16 438.05,349.90 435.43,350.23" fill="#6c6c70"/><polygon points="437.80,321.16 440.19,320.76 440.19,349.45 437.80,349.90" fill="#6b6b71"/><polygon points="439.94,320.76 442.04,320.27 442.04,348.89 439.94,349.45" fill="#6b6b71"/><polygon points="441.79,320.27 443.54,319.70 443.54,348.25 441.79,348.89" fill="#6a6a72"/><polygon points="443.29,319.70 444.65,319.07 444.65,347.54 443.29,348.25" fill="#71717a"/><polygon points="444.40,319.07 445.32,318.39 445.32,346.78 444.40,347.54" fill="#777782"/><polygon points="445.07,318.39 445.55,317.70 445.55,346.00 445.07,346.78" fill="#7a7a86"/><path d="M432.30 289.40 L415.30 318.00 A15.00 4.00 0 0 0 445.30 318.00 Z" fill="#999a9c"/><polygon points="432.30,289.40 415.20,318.00 415.63,318.69" fill="#8c8c90"/><polygon points="432.30,289.40 415.43,318.69 416.30,319.37" fill="#8d8d91"/><polygon points="432.30,289.40 416.10,319.37 417.41,320.00" fill="#909093"/><polygon points="432.30,289.40 417.21,320.00 418.91,320.57" fill="#939396"/><polygon points="432.30,289.40 418.71,320.57 420.76,321.06" fill="#98989a"/><polygon points="432.30,289.40 420.56,321.06 422.90,321.46" fill="#9d9d9f"/><polygon points="432.30,289.40 422.70,321.46 425.27,321.76" fill="#a3a3a5"/><polygon points="432.30,289.40 425.07,321.76 427.80,321.94" fill="#b0b0b2"/><polygon points="432.30,289.40 427.60,321.94 430.40,322.00" fill="#a7a7a9"/><polygon points="432.30,289.40 430.20,322.00 433.00,321.94" fill="#9d9da0"/><polygon points="432.30,289.40 432.80,321.94 435.53,321.76" fill="#97979b"/><polygon points="432.30,289.40 435.33,321.76 437.90,321.46" fill="#919196"/><polygon points="432.30,289.40 437.70,321.46 440.04,321.06" fill="#8b8b92"/><polygon points="432.30,289.40 439.84,321.06 441.89,320.57" fill="#87878e"/><polygon points="432.30,289.40 441.69,320.57 443.39,320.00" fill="#83838b"/><polygon points="432.30,289.40 443.19,320.00 444.50,319.37" fill="#7f7f89"/><polygon points="432.30,289.40 444.30,319.37 445.17,318.69" fill="#7d7d87"/><polygon points="432.30,289.40 444.97,318.69 445.40,318.00" fill="#7c7c86"/><path d="M331 350 V313" stroke="#1a2ad8" stroke-width="1.6"/><path d="M331 304.5 L327.5 315 L334.5 315 Z" fill="#1a2ad8"/><path d="M320.5 360.2 H283" stroke="#d82a2a" stroke-width="1.6"/><path d="M274 360.2 L285 356.8 L285 363.6 Z" fill="#f01a1a"/><path d="M329.5 371 L321.6 419" stroke="#2ab82a" stroke-width="1.3"/><path d="M326.8 391 L322.5 383 Q326 379 331 383 Z" fill="#20e020"/><circle cx="331" cy="360.3" r="10" stroke="#e6e6e6" stroke-width="1.1" fill="none"/><circle cx="331" cy="360.3" r="2.2" fill="#f0a040" stroke="#333" stroke-width="0.5"/><circle cx="232.8" cy="288.2" r="6.5" fill="none" stroke="#f4f4f4" stroke-width="1.3"/><circle cx="232.8" cy="288.2" r="6.5" fill="none" stroke="#d02020" stroke-width="1.3" stroke-dasharray="3.4 1.7"/><path d="M218.8 288.2 H226 M239.6 288.2 H246.8 M232.8 274.2 V281.5 M232.8 295 V302.2" stroke="#111" stroke-width="1"/><circle cx="278.4" cy="305.6" r="8" fill="none" stroke="#1a1a1a" stroke-width="1.1" stroke-dasharray="2 1.5"/><circle cx="278.4" cy="305.6" r="4.6" fill="none" stroke="#333" stroke-width="0.7" stroke-dasharray="1.2 1.2"/><circle cx="278.4" cy="305.6" r="2" fill="#111"/><path d="M261.5 285.5 L272.5 289.5 L264 296 Z" stroke="#111" stroke-width="1.1" fill="#3a3a3a"/><path d="M261.5 285.5 L268 292" stroke="#ddd" stroke-width="0.6"/></svg>
<span class="t" style="left:124.4px;top:27.43px;font-size:7.4px;color:#fff;-webkit-text-stroke-width:0;color:#f4f4f4;">User Persp</span>
<span class="t" style="left:159px;top:639.82px;font-size:7.6px;color:#fff;-webkit-text-stroke-width:0;color:#f4f4f4;">(1) Cube</span>
<svg style="left:110px;top:610px" width="40" height="35"><path d="M18 24.7 V8.7" stroke="#2020e0" stroke-width="1.4"/><path d="M18 24.7 H1" stroke="#e02020" stroke-width="1.4"/><path d="M18 24.7 L18.5 30" stroke="#20d020" stroke-width="1.4"/><text x="20" y="9" font-size="7.5" fill="#2a2ae8" font-family="Liberation Sans">z</text><text x="4" y="22.5" font-size="7.5" fill="#e03030" font-family="Liberation Sans">x</text><text x="19.5" y="31" font-size="7.5" fill="#30d030" font-family="Liberation Sans">y</text></svg>
<svg style="left:700px;top:19px" width="456" height="309" viewBox="700 19 456 309"><defs><linearGradient id="fcone" x1="0" x2="1"><stop offset="0" stop-color="#8a8a8e"/><stop offset="0.45" stop-color="#a6a6aa"/><stop offset="0.6" stop-color="#96969a"/><stop offset="1" stop-color="#7a7a80"/></linearGradient><linearGradient id="fcyl" x1="0" x2="1"><stop offset="0" stop-color="#8a8a8c"/><stop offset="0.3" stop-color="#9a9a9c"/><stop offset="0.5" stop-color="#828286"/><stop offset="0.8" stop-color="#707076"/><stop offset="1" stop-color="#7c7c84"/></linearGradient><linearGradient id="fwall" x1="0" x2="1"><stop offset="0" stop-color="#7c7c80"/><stop offset="0.5" stop-color="#76767a"/><stop offset="1" stop-color="#707074"/></linearGradient></defs><path d="M694.5 19 V328 M701.2 19 V328 M708.0 19 V328 M721.4 19 V328 M728.2 19 V328 M734.9 19 V328 M741.6 19 V328 M748.4 19 V328 M755.1 19 V328 M761.8 19 V328 M768.5 19 V328 M775.3 19 V328 M788.7 19 V328 M795.5 19 V328 M802.2 19 V328 M808.9 19 V328 M815.6 19 V328 M822.4 19 V328 M829.1 19 V328 M835.8 19 V328 M842.6 19 V328 M856.0 19 V328 M862.8 19 V328 M869.5 19 V328 M876.2 19 V328 M883.0 19 V328 M889.7 19 V328 M896.4 19 V328 M903.1 19 V328 M909.9 19 V328 M923.3 19 V328 M930.1 19 V328 M936.8 19 V328 M943.5 19 V328 M950.2 19 V328 M957.0 19 V328 M963.7 19 V328 M970.4 19 V328 M977.2 19 V328 M990.6 19 V328 M997.4 19 V328 M1004.1 19 V328 M1010.8 19 V328 M1017.6 19 V328 M1024.3 19 V328 M1031.0 19 V328 M1037.7 19 V328 M1044.5 19 V328 M1057.9 19 V328 M1064.7 19 V328 M1071.4 19 V328 M1078.1 19 V328 M1084.8 19 V328 M1091.6 19 V328 M1098.3 19 V328 M1105.0 19 V328 M1111.8 19 V328 M1125.2 19 V328 M1132.0 19 V328 M1138.7 19 V328 M1145.4 19 V328 M1152.2 19 V328 M1158.9 19 V328 M700 14.2 H1156 M700 20.9 H1156 M700 27.7 H1156 M700 34.4 H1156 M700 41.1 H1156 M700 47.9 H1156 M700 61.3 H1156 M700 68.1 H1156 M700 74.8 H1156 M700 81.5 H1156 M700 88.2 H1156 M700 95.0 H1156 M700 101.7 H1156 M700 108.4 H1156 M700 115.2 H1156 M700 128.6 H1156 M700 135.4 H1156 M700 142.1 H1156 M700 148.8 H1156 M700 155.5 H1156 M700 162.3 H1156 M700 169.0 H1156 M700 175.7 H1156 M700 182.5 H1156 M700 195.9 H1156 M700 202.7 H1156 M700 209.4 H1156 M700 216.1 H1156 M700 222.8 H1156 M700 229.6 H1156 M700 236.3 H1156 M700 243.0 H1156 M700 249.8 H1156 M700 263.2 H1156 M700 270.0 H1156 M700 276.7 H1156 M700 283.4 H1156 M700 290.1 H1156 M700 296.9 H1156 M700 303.6 H1156 M700 310.3 H1156 M700 317.1 H1156 M700 330.5 H1156" stroke="#3d3d3d" stroke-width="1" fill="none"/><path d="M714.7 19 V328 M782.0 19 V328 M700 54.6 H1156 M849.3 19 V328 M700 121.9 H1156 M916.6 19 V328 M700 189.2 H1156 M983.9 19 V328 M700 256.5 H1156 M1051.2 19 V328 M700 323.8 H1156 M1118.5 19 V328" stroke="#434343" stroke-width="1" fill="none"/><path d="M916.6 19 V328" stroke="#2a2aa8" stroke-width="1.2"/><path d="M700 189.2 H1156" stroke="#a02a2a" stroke-width="1"/><rect x="892.4" y="189" width="48.4" height="23.8" fill="#9c9ca4" stroke="#f0a040" stroke-width="1.2" rx="1"/><rect x="860.3" y="145.5" width="12.4" height="14.5" fill="url(#fcyl)"/><path d="M866.5 131.5 L860.3 145.5 L872.7 145.5 Z" fill="url(#fcone)"/><rect x="864.5" y="145.5" width="12.0" height="14.5" fill="url(#fcyl)"/><path d="M870.5 133.0 L864.5 145.5 L876.5 145.5 Z" fill="url(#fcone)"/><rect x="957.3" y="147.0" width="12.4" height="13.0" fill="url(#fcyl)"/><path d="M963.5 134.0 L957.3 147.0 L969.7 147.0 Z" fill="url(#fcone)"/><rect x="962.5" y="147.0" width="12.0" height="13.0" fill="url(#fcyl)"/><path d="M968.5 135.5 L962.5 147.0 L974.5 147.0 Z" fill="url(#fcone)"/><rect x="894.9" y="127.2" width="43.2" height="33" fill="url(#fcyl)"/><path d="M916.7 84 L894.9 127.2 L938.1 127.2 Z" fill="url(#fcone)"/><rect x="864.4" y="159.6" width="106.8" height="30" fill="url(#fwall)"/><rect x="864.4" y="159.6" width="106.8" height="1.2" fill="#8a8a8e"/><path d="M893 182.4 H901 M945 183.6 H953" stroke="#5a5a70" stroke-width="0.9"/><path d="M916.6 178.5 V141" stroke="#1a2ad8" stroke-width="1.6"/><path d="M916.6 131 L913.2 143 L920 143 Z" fill="#1a2ad8"/><path d="M927 189.2 H964" stroke="#e02020" stroke-width="1.6"/><path d="M974 189.2 L962 185.8 L962 192.6 Z" fill="#f01a1a"/><circle cx="916.6" cy="189.2" r="10.4" stroke="#e0e0e0" stroke-width="1.1" fill="none"/><circle cx="916.6" cy="189.2" r="2.2" fill="#f0a040" stroke="#333" stroke-width="0.5"/><circle cx="944.1" cy="150" r="8" fill="none" stroke="#1a1a1a" stroke-width="1.1" stroke-dasharray="2 1.4"/><circle cx="944.1" cy="150" r="5" fill="none" stroke="#2a2a2a" stroke-width="0.7" stroke-dasharray="1.3 1.2"/><circle cx="944.1" cy="150" r="2" fill="#111"/><path d="M974.5 157.2 H1001.5 M988 143.7 V170.7" stroke="#111" stroke-width="1"/><circle cx="988" cy="157.2" r="6.5" fill="#393939" stroke="#f4f4f4" stroke-width="1.2"/><circle cx="988" cy="157.2" r="6.5" fill="none" stroke="#d02020" stroke-width="1.2" stroke-dasharray="3.4 1.7"/><path d="M974.5 157.2 H981 M995 157.2 H1001.5 M988 143.7 V150 M988 164.5 V170.7" stroke="#111" stroke-width="1"/><path d="M718 293 V310.4 H735" stroke="#2020d0" stroke-width="1.5" fill="none"/><path d="M718 310.4 H735" stroke="#d02020" stroke-width="1.5"/><text x="719.5" y="292" font-size="7" fill="#2a2ae0" font-family="Liberation Sans">z</text><text x="737" y="309" font-size="7" fill="#d02a2a" font-family="Liberation Sans">x</text></svg>
<span class="t" style="left:713.6px;top:27.63px;font-size:7.4px;color:#fff;-webkit-text-stroke-width:0;color:#f4f4f4;">Front Ortho</span>
<span class="t" style="left:748.8px;top:315.32px;font-size:7.6px;color:#fff;-webkit-text-stroke-width:0;color:#f4f4f4;">(1) Cube</span>
<div style="left:1146px;top:34px;width:9px;height:9px;background:#303030;border-radius:2px;"></div>
<svg style="left:1146px;top:34px" width="9" height="9"><path d="M4.5 2.5 V6.5 M2.5 4.5 H6.5" stroke="#6a6a6a" stroke-width="1.1"/></svg>
<svg style="left:700px;top:347px" width="456" height="305" viewBox="700 347 456 305"><defs><radialGradient id="tcone" cx="0.5" cy="0.5" r="0.5"><stop offset="0" stop-color="#a8a8aa"/><stop offset="1" stop-color="#7a7a80"/></radialGradient><linearGradient id="twall" x1="0" x2="1"><stop offset="0" stop-color="#7c7c84"/><stop offset="0.5" stop-color="#8c8c94"/><stop offset="1" stop-color="#78787e"/></linearGradient><linearGradient id="twallh" x1="0" x2="0" y1="0" y2="1"><stop offset="0" stop-color="#8c8c90"/><stop offset="1" stop-color="#727276"/></linearGradient></defs><path d="M694.6 347 V652 M701.3 347 V652 M708.1 347 V652 M721.5 347 V652 M728.3 347 V652 M735.0 347 V652 M741.7 347 V652 M748.5 347 V652 M755.2 347 V652 M761.9 347 V652 M768.6 347 V652 M775.4 347 V652 M788.8 347 V652 M795.6 347 V652 M802.3 347 V652 M809.0 347 V652 M815.8 347 V652 M822.5 347 V652 M829.2 347 V652 M835.9 347 V652 M842.7 347 V652 M856.1 347 V652 M862.9 347 V652 M869.6 347 V652 M876.3 347 V652 M883.1 347 V652 M889.8 347 V652 M896.5 347 V652 M903.2 347 V652 M910.0 347 V652 M923.4 347 V652 M930.2 347 V652 M936.9 347 V652 M943.6 347 V652 M950.4 347 V652 M957.1 347 V652 M963.8 347 V652 M970.5 347 V652 M977.3 347 V652 M990.7 347 V652 M997.5 347 V652 M1004.2 347 V652 M1010.9 347 V652 M1017.7 347 V652 M1024.4 347 V652 M1031.1 347 V652 M1037.8 347 V652 M1044.6 347 V652 M1058.0 347 V652 M1064.8 347 V652 M1071.5 347 V652 M1078.2 347 V652 M1085.0 347 V652 M1091.7 347 V652 M1098.4 347 V652 M1105.1 347 V652 M1111.9 347 V652 M1125.3 347 V652 M1132.1 347 V652 M1138.8 347 V652 M1145.5 347 V652 M1152.2 347 V652 M1159.0 347 V652 M700 344.5 H1156 M700 351.2 H1156 M700 357.9 H1156 M700 364.6 H1156 M700 371.4 H1156 M700 384.8 H1156 M700 391.6 H1156 M700 398.3 H1156 M700 405.0 H1156 M700 411.8 H1156 M700 418.5 H1156 M700 425.2 H1156 M700 431.9 H1156 M700 438.7 H1156 M700 452.1 H1156 M700 458.9 H1156 M700 465.6 H1156 M700 472.3 H1156 M700 479.1 H1156 M700 485.8 H1156 M700 492.5 H1156 M700 499.2 H1156 M700 506.0 H1156 M700 519.4 H1156 M700 526.2 H1156 M700 532.9 H1156 M700 539.6 H1156 M700 546.4 H1156 M700 553.1 H1156 M700 559.8 H1156 M700 566.5 H1156 M700 573.3 H1156 M700 586.7 H1156 M700 593.5 H1156 M700 600.2 H1156 M700 606.9 H1156 M700 613.7 H1156 M700 620.4 H1156 M700 627.1 H1156 M700 633.8 H1156 M700 640.6 H1156 M700 654.0 H1156" stroke="#3d3d3d" stroke-width="1" fill="none"/><path d="M714.8 347 V652 M782.1 347 V652 M700 378.1 H1156 M849.4 347 V652 M700 445.4 H1156 M916.7 347 V652 M700 512.7 H1156 M984.0 347 V652 M700 580.0 H1156 M1051.3 347 V652 M700 647.3 H1156 M1118.6 347 V652" stroke="#434343" stroke-width="1" fill="none"/><path d="M916.7 347 V652" stroke="#2a9a2a" stroke-width="1.1"/><path d="M700 512.7 H1156" stroke="#a02a2a" stroke-width="1"/><rect x="864.2" y="466.3" width="6.8" height="107.6" fill="url(#twall)"/><rect x="964.6" y="466.3" width="6.8" height="107.6" fill="url(#twall)"/><rect x="864.2" y="560.3" width="107.2" height="13.6" fill="url(#twallh)"/><path d="M872 565 H960 M872 568.5 H960" stroke="#6a6a6e" stroke-width="0.6"/><circle cx="867.1" cy="474.2" r="7" fill="#7c7c80"/><path d="M867.1 474.2 L860.1 474.2 A7 7 0 0 1 867.1 467.2 Z" fill="#a0a0a4"/><path d="M867.1 474.2 L867.1 481.2 A7 7 0 0 1 860.1 474.2 Z" fill="#8e8e92"/><circle cx="967.7" cy="474.2" r="7" fill="#7c7c80"/><path d="M967.7 474.2 L960.7 474.2 A7 7 0 0 1 967.7 467.2 Z" fill="#a0a0a4"/><path d="M967.7 474.2 L967.7 481.2 A7 7 0 0 1 960.7 474.2 Z" fill="#8e8e92"/><circle cx="869.4" cy="567.1" r="7" fill="#7c7c80"/><path d="M869.4 567.1 L862.4 567.1 A7 7 0 0 1 869.4 560.1 Z" fill="#a0a0a4"/><path d="M869.4 567.1 L869.4 574.1 A7 7 0 0 1 862.4 567.1 Z" fill="#8e8e92"/><circle cx="964.6" cy="567.1" r="7" fill="#7c7c80"/><path d="M964.6 567.1 L957.6 567.1 A7 7 0 0 1 964.6 560.1 Z" fill="#a0a0a4"/><path d="M964.6 567.1 L964.6 574.1 A7 7 0 0 1 957.6 567.1 Z" fill="#8e8e92"/><rect x="864.5" y="466" width="6" height="3" fill="#8a8a8e"/><rect x="965" y="466" width="6" height="3" fill="#8a8a8e"/><rect x="892" y="490.7" width="48.5" height="49.2" fill="#a2a2aa" stroke="#f0a040" stroke-width="1.2" rx="1"/><circle cx="916.7" cy="515" r="22" fill="url(#tcone)"/><path d="M916.7 515 L894.7 515 A22 22 0 0 1 916.7 493 Z" fill="#9a9a9e" opacity="0.6"/><path d="M916.7 515 L916.7 537 A22 22 0 0 1 894.7 515 Z" fill="#6e6e76" opacity="0.5"/><path d="M916.7 504.5 V470" stroke="#20c020" stroke-width="1.6"/><path d="M916.7 459.5 L913.2 471 L920.2 471 Z" fill="#20e020"/><path d="M927 515.3 H962" stroke="#e02020" stroke-width="1.6"/><path d="M973 515.3 L961 511.9 L961 518.7 Z" fill="#f01a1a"/><circle cx="916.7" cy="515.2" r="10.4" stroke="#e0e0e0" stroke-width="1.1" fill="none"/><circle cx="916.7" cy="515.2" r="2.2" fill="#f0a040" stroke="#333" stroke-width="0.5"/><circle cx="944.2" cy="506.4" r="8" fill="none" stroke="#1a1a1a" stroke-width="1.1" stroke-dasharray="2 1.4"/><circle cx="944.2" cy="506.4" r="5" fill="none" stroke="#2a2a2a" stroke-width="0.7" stroke-dasharray="1.3 1.2"/><circle cx="944.2" cy="506.4" r="2" fill="#111"/><path d="M958 549 L967 552 L961 558 Z" stroke="#111" stroke-width="1.2" fill="#2a2a2a"/><path d="M974.2 560.3 H1001.2 M987.7 546.8 V573.8" stroke="#111" stroke-width="1"/><circle cx="987.7" cy="560.3" r="6.5" fill="#393939" stroke="#f4f4f4" stroke-width="1.2"/><circle cx="987.7" cy="560.3" r="6.5" fill="none" stroke="#d02020" stroke-width="1.2" stroke-dasharray="3.4 1.7"/><path d="M974.2 560.3 H981 M994.5 560.3 H1001.2 M987.7 546.8 V553.5 M987.7 567 V573.8" stroke="#111" stroke-width="1"/><path d="M718 617.6 V634.5" stroke="#20c020" stroke-width="1.5"/><path d="M718 634.5 H735" stroke="#d02020" stroke-width="1.5"/><text x="719.5" y="615.5" font-size="7" fill="#20d020" font-family="Liberation Sans">y</text><text x="737" y="633" font-size="7" fill="#d02a2a" font-family="Liberation Sans">x</text></svg>
<span class="t" style="left:713.6px;top:356.13px;font-size:7.4px;color:#fff;-webkit-text-stroke-width:0;color:#f4f4f4;">Top Ortho</span>
<span class="t" style="left:748.8px;top:639.82px;font-size:7.6px;color:#fff;-webkit-text-stroke-width:0;color:#f4f4f4;">(1) Cube</span>
<div style="left:1146px;top:362px;width:9px;height:9px;background:#303030;border-radius:2px;"></div>
<svg style="left:1146px;top:362px" width="9" height="9"><path d="M4.5 2.5 V6.5 M2.5 4.5 H6.5" stroke="#6a6a6a" stroke-width="1.1"/></svg>
<div style="left:578px;top:34px;width:9px;height:9px;background:#303030;border-radius:2px;"></div>
<svg style="left:578px;top:34px" width="9" height="9"><path d="M4.5 2.5 V6.5 M2.5 4.5 H6.5" stroke="#6a6a6a" stroke-width="1.1"/></svg>
<svg style="left:1144px;top:19px" width="12" height="12"><path d="M2 0 L12 10 M5 0 L12 7 M8 0 L12 4" stroke="#8a8a8a" stroke-width="0.9"/><path d="M3 0 L12 9 M6 0 L12 6 M9 0 L12 3" stroke="#2a2a2a" stroke-width="0.5"/></svg>
<svg style="left:1144px;top:347px" width="12" height="12"><path d="M2 0 L12 10 M5 0 L12 7 M8 0 L12 4" stroke="#8a8a8a" stroke-width="0.9"/><path d="M3 0 L12 9 M6 0 L12 6 M9 0 L12 3" stroke="#2a2a2a" stroke-width="0.5"/></svg>
<svg style="left:576px;top:19px" width="12" height="12"><path d="M2 0 L12 10 M5 0 L12 7 M8 0 L12 4" stroke="#8a8a8a" stroke-width="0.9"/><path d="M3 0 L12 9 M6 0 L12 6 M9 0 L12 3" stroke="#2a2a2a" stroke-width="0.5"/></svg>
<svg style="left:1321px;top:19px" width="12" height="12"><path d="M2 0 L12 10 M5 0 L12 7 M8 0 L12 4" stroke="#8a8a8a" stroke-width="0.9"/><path d="M3 0 L12 9 M6 0 L12 6 M9 0 L12 3" stroke="#2a2a2a" stroke-width="0.5"/></svg>
<svg style="left:1321px;top:147px" width="12" height="12"><path d="M2 0 L12 10 M5 0 L12 7 M8 0 L12 4" stroke="#8a8a8a" stroke-width="0.9"/><path d="M3 0 L12 9 M6 0 L12 6 M9 0 L12 3" stroke="#2a2a2a" stroke-width="0.5"/></svg>
<svg style="left:1144px;top:671px" width="12" height="12"><path d="M2 0 L12 10 M5 0 L12 7 M8 0 L12 4" stroke="#8a8a8a" stroke-width="0.9"/><path d="M3 0 L12 9 M6 0 L12 6 M9 0 L12 3" stroke="#2a2a2a" stroke-width="0.5"/></svg>
<svg style="left:0px;top:659px" width="12" height="12"><path d="M0 2 L10 12 M0 5 L7 12 M0 8 L4 12" stroke="#8a8a8a" stroke-width="0.9"/><path d="M0 3 L9 12 M0 6 L6 12 M0 9 L3 12" stroke="#2a2a2a" stroke-width="0.5"/></svg>
<svg style="left:590px;top:659px" width="12" height="12"><path d="M0 2 L10 12 M0 5 L7 12 M0 8 L4 12" stroke="#8a8a8a" stroke-width="0.9"/><path d="M0 3 L9 12 M0 6 L6 12 M0 9 L3 12" stroke="#2a2a2a" stroke-width="0.5"/></svg>
<svg style="left:590px;top:335px" width="12" height="12"><path d="M0 2 L10 12 M0 5 L7 12 M0 8 L4 12" stroke="#8a8a8a" stroke-width="0.9"/><path d="M0 3 L9 12 M0 6 L6 12 M0 9 L3 12" stroke="#2a2a2a" stroke-width="0.5"/></svg>
<svg style="left:0px;top:738px" width="12" height="12"><path d="M0 2 L10 12 M0 5 L7 12 M0 8 L4 12" stroke="#8a8a8a" stroke-width="0.9"/><path d="M0 3 L9 12 M0 6 L6 12 M0 9 L3 12" stroke="#2a2a2a" stroke-width="0.5"/></svg>
<svg style="left:1157px;top:738px" width="12" height="12"><path d="M0 2 L10 12 M0 5 L7 12 M0 8 L4 12" stroke="#8a8a8a" stroke-width="0.9"/><path d="M0 3 L9 12 M0 6 L6 12 M0 9 L3 12" stroke="#2a2a2a" stroke-width="0.5"/></svg>
<svg style="left:1157px;top:135px" width="12" height="12"><path d="M0 2 L10 12 M0 5 L7 12 M0 8 L4 12" stroke="#8a8a8a" stroke-width="0.9"/><path d="M0 3 L9 12 M0 6 L6 12 M0 9 L3 12" stroke="#2a2a2a" stroke-width="0.5"/></svg>
<svg style="left:0px;top:7px" width="12" height="12"><path d="M0 2 L10 12 M0 5 L7 12 M0 8 L4 12" stroke="#8a8a8a" stroke-width="0.9"/><path d="M0 3 L9 12 M0 6 L6 12 M0 9 L3 12" stroke="#2a2a2a" stroke-width="0.5"/></svg>
</body></html>
